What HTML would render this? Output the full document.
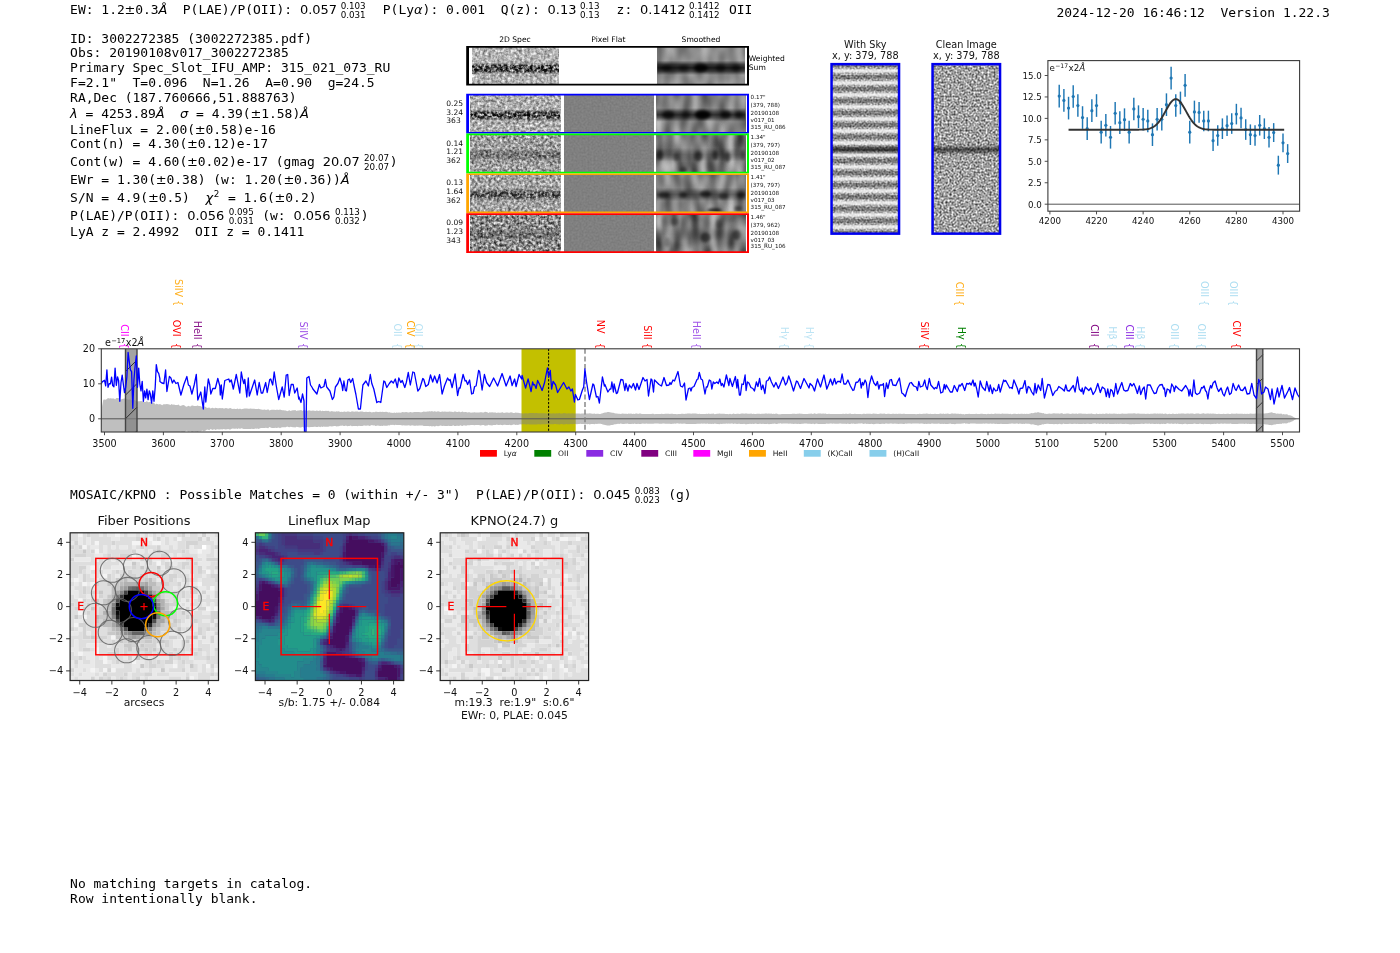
<!DOCTYPE html>
<html><head><meta charset="utf-8"><title>ELiXer report 3002272385</title>
<style>
html,body{margin:0;padding:0;background:#fff;}
body{width:1400px;height:953px;overflow:hidden;}
svg{display:block;will-change:transform;}
text{white-space:pre;}
.m{font-family:"DejaVu Sans Mono","Liberation Mono",monospace;}
.s{font-family:"DejaVu Sans","Liberation Sans",sans-serif;}
</style></head><body>
<svg width="1400" height="953" viewBox="0 0 1400 953">
<defs>
<filter id="blb" x="-20%" y="-20%" width="140%" height="140%"><feGaussianBlur stdDeviation="1.8"/></filter>
<filter id="nW" x="0" y="0" width="100%" height="100%" color-interpolation-filters="sRGB"><feTurbulence type="fractalNoise" baseFrequency="0.36 0.36" numOctaves="2" seed="3"/><feColorMatrix type="matrix" values="0.850 0 0 0 0.275  0.850 0 0 0 0.275  0.850 0 0 0 0.275  0 0 0 0 1"/></filter>
<filter id="nWb" x="0" y="0" width="100%" height="100%" color-interpolation-filters="sRGB"><feTurbulence type="fractalNoise" baseFrequency="0.36 0.36" numOctaves="2" seed="5"/><feColorMatrix type="matrix" values="2.000 0 0 0 -0.700  2.000 0 0 0 -0.700  2.000 0 0 0 -0.700  0 0 0 0 1"/></filter>
<linearGradient id="mWg" x1="0" y1="0" x2="0" y2="1"><stop offset="0.000" stop-color="#fff" stop-opacity="0.000"/><stop offset="0.420" stop-color="#fff" stop-opacity="0.000"/><stop offset="0.500" stop-color="#fff" stop-opacity="0.850"/><stop offset="0.585" stop-color="#fff" stop-opacity="1.000"/><stop offset="0.670" stop-color="#fff" stop-opacity="0.850"/><stop offset="0.750" stop-color="#fff" stop-opacity="0.000"/><stop offset="1.000" stop-color="#fff" stop-opacity="0.000"/></linearGradient>
<filter id="sW" x="0" y="0" width="100%" height="100%" color-interpolation-filters="sRGB"><feTurbulence type="fractalNoise" baseFrequency="0.11 0.05" numOctaves="1" seed="11"/><feColorMatrix type="matrix" values="0.500 0 0 0 0.300  0.500 0 0 0 0.300  0.500 0 0 0 0.300  0 0 0 0 1"/></filter>
<linearGradient id="bW" x1="0" y1="0" x2="0" y2="1"><stop offset="0.000" stop-color="#000" stop-opacity="0.000"/><stop offset="0.400" stop-color="#000" stop-opacity="0.000"/><stop offset="0.500" stop-color="#000" stop-opacity="0.500"/><stop offset="0.585" stop-color="#000" stop-opacity="0.620"/><stop offset="0.670" stop-color="#000" stop-opacity="0.500"/><stop offset="0.770" stop-color="#000" stop-opacity="0.000"/><stop offset="1.000" stop-color="#000" stop-opacity="0.000"/></linearGradient>
<linearGradient id="bWs" x1="0" y1="0" x2="0" y2="1"><stop offset="0.000" stop-color="#000" stop-opacity="0.000"/><stop offset="0.360" stop-color="#000" stop-opacity="0.000"/><stop offset="0.470" stop-color="#000" stop-opacity="0.600"/><stop offset="0.567" stop-color="#000" stop-opacity="0.820"/><stop offset="0.660" stop-color="#000" stop-opacity="0.600"/><stop offset="0.770" stop-color="#000" stop-opacity="0.000"/><stop offset="1.000" stop-color="#000" stop-opacity="0.000"/></linearGradient>
<mask id="mW" maskUnits="userSpaceOnUse" x="472.00" y="47.70" width="87.00" height="35.60"><rect x="472.00" y="47.70" width="87.00" height="35.60" fill="url(#mWg)"/></mask>
<clipPath id="bc1"><rect x="657.30" y="47.70" width="87.60" height="35.60"/></clipPath>
<filter id="n0" x="0" y="0" width="100%" height="100%" color-interpolation-filters="sRGB"><feTurbulence type="fractalNoise" baseFrequency="0.36 0.36" numOctaves="2" seed="20"/><feColorMatrix type="matrix" values="0.950 0 0 0 0.205  0.950 0 0 0 0.205  0.950 0 0 0 0.205  0 0 0 0 1"/></filter>
<filter id="nb0" x="0" y="0" width="100%" height="100%" color-interpolation-filters="sRGB"><feTurbulence type="fractalNoise" baseFrequency="0.36 0.36" numOctaves="2" seed="30"/><feColorMatrix type="matrix" values="2.200 0 0 0 -0.820  2.200 0 0 0 -0.820  2.200 0 0 0 -0.820  0 0 0 0 1"/></filter>
<linearGradient id="m0g" x1="0" y1="0" x2="0" y2="1"><stop offset="0.000" stop-color="#fff" stop-opacity="0.000"/><stop offset="0.380" stop-color="#fff" stop-opacity="0.000"/><stop offset="0.460" stop-color="#fff" stop-opacity="0.800"/><stop offset="0.540" stop-color="#fff" stop-opacity="1.000"/><stop offset="0.620" stop-color="#fff" stop-opacity="0.800"/><stop offset="0.700" stop-color="#fff" stop-opacity="0.000"/><stop offset="1.000" stop-color="#fff" stop-opacity="0.000"/></linearGradient>
<filter id="s0" x="0" y="0" width="100%" height="100%" color-interpolation-filters="sRGB"><feTurbulence type="fractalNoise" baseFrequency="0.11 0.045" numOctaves="1" seed="40"/><feColorMatrix type="matrix" values="0.700 0 0 0 0.170  0.700 0 0 0 0.170  0.700 0 0 0 0.170  0 0 0 0 1"/></filter>
<filter id="f0" x="0" y="0" width="100%" height="100%" color-interpolation-filters="sRGB"><feTurbulence type="fractalNoise" baseFrequency="0.5 0.5" numOctaves="1" seed="60"/><feColorMatrix type="matrix" values="0.100 0 0 0 0.450  0.100 0 0 0 0.450  0.100 0 0 0 0.450  0 0 0 0 1"/></filter>
<linearGradient id="b0" x1="0" y1="0" x2="0" y2="1"><stop offset="0.000" stop-color="#000" stop-opacity="0.000"/><stop offset="0.360" stop-color="#000" stop-opacity="0.000"/><stop offset="0.460" stop-color="#000" stop-opacity="0.495"/><stop offset="0.540" stop-color="#000" stop-opacity="0.660"/><stop offset="0.620" stop-color="#000" stop-opacity="0.495"/><stop offset="0.720" stop-color="#000" stop-opacity="0.000"/><stop offset="1.000" stop-color="#000" stop-opacity="0.000"/></linearGradient>
<linearGradient id="c0" x1="0" y1="0" x2="0" y2="1"><stop offset="0.000" stop-color="#000" stop-opacity="0.000"/><stop offset="0.340" stop-color="#000" stop-opacity="0.000"/><stop offset="0.450" stop-color="#000" stop-opacity="0.490"/><stop offset="0.530" stop-color="#000" stop-opacity="0.700"/><stop offset="0.610" stop-color="#000" stop-opacity="0.490"/><stop offset="0.720" stop-color="#000" stop-opacity="0.000"/><stop offset="1.000" stop-color="#000" stop-opacity="0.000"/></linearGradient>
<mask id="m0" maskUnits="userSpaceOnUse" x="470.30" y="95.40" width="89.90" height="36.60"><rect x="470.30" y="95.40" width="89.90" height="36.60" fill="url(#m0g)"/></mask>
<clipPath id="bc2"><rect x="656.60" y="95.40" width="88.80" height="36.60"/></clipPath>
<filter id="n1" x="0" y="0" width="100%" height="100%" color-interpolation-filters="sRGB"><feTurbulence type="fractalNoise" baseFrequency="0.36 0.36" numOctaves="2" seed="21"/><feColorMatrix type="matrix" values="1.100 0 0 0 0.070  1.100 0 0 0 0.070  1.100 0 0 0 0.070  0 0 0 0 1"/></filter>
<filter id="nb1" x="0" y="0" width="100%" height="100%" color-interpolation-filters="sRGB"><feTurbulence type="fractalNoise" baseFrequency="0.36 0.36" numOctaves="2" seed="31"/><feColorMatrix type="matrix" values="2.200 0 0 0 -0.820  2.200 0 0 0 -0.820  2.200 0 0 0 -0.820  0 0 0 0 1"/></filter>
<linearGradient id="m1g" x1="0" y1="0" x2="0" y2="1"><stop offset="0.000" stop-color="#fff" stop-opacity="0.000"/><stop offset="0.380" stop-color="#fff" stop-opacity="0.000"/><stop offset="0.460" stop-color="#fff" stop-opacity="0.400"/><stop offset="0.540" stop-color="#fff" stop-opacity="0.500"/><stop offset="0.620" stop-color="#fff" stop-opacity="0.400"/><stop offset="0.700" stop-color="#fff" stop-opacity="0.000"/><stop offset="1.000" stop-color="#fff" stop-opacity="0.000"/></linearGradient>
<filter id="s1" x="0" y="0" width="100%" height="100%" color-interpolation-filters="sRGB"><feTurbulence type="fractalNoise" baseFrequency="0.11 0.045" numOctaves="1" seed="41"/><feColorMatrix type="matrix" values="1.000 0 0 0 -0.030  1.000 0 0 0 -0.030  1.000 0 0 0 -0.030  0 0 0 0 1"/></filter>
<filter id="f1" x="0" y="0" width="100%" height="100%" color-interpolation-filters="sRGB"><feTurbulence type="fractalNoise" baseFrequency="0.5 0.5" numOctaves="1" seed="61"/><feColorMatrix type="matrix" values="0.100 0 0 0 0.450  0.100 0 0 0 0.450  0.100 0 0 0 0.450  0 0 0 0 1"/></filter>
<linearGradient id="b1" x1="0" y1="0" x2="0" y2="1"><stop offset="0.000" stop-color="#000" stop-opacity="0.000"/><stop offset="0.360" stop-color="#000" stop-opacity="0.000"/><stop offset="0.460" stop-color="#000" stop-opacity="0.270"/><stop offset="0.540" stop-color="#000" stop-opacity="0.360"/><stop offset="0.620" stop-color="#000" stop-opacity="0.270"/><stop offset="0.720" stop-color="#000" stop-opacity="0.000"/><stop offset="1.000" stop-color="#000" stop-opacity="0.000"/></linearGradient>
<linearGradient id="c1" x1="0" y1="0" x2="0" y2="1"><stop offset="0.000" stop-color="#000" stop-opacity="0.000"/><stop offset="0.340" stop-color="#000" stop-opacity="0.000"/><stop offset="0.450" stop-color="#000" stop-opacity="0.175"/><stop offset="0.530" stop-color="#000" stop-opacity="0.250"/><stop offset="0.610" stop-color="#000" stop-opacity="0.175"/><stop offset="0.720" stop-color="#000" stop-opacity="0.000"/><stop offset="1.000" stop-color="#000" stop-opacity="0.000"/></linearGradient>
<mask id="m1" maskUnits="userSpaceOnUse" x="470.30" y="135.20" width="89.90" height="36.60"><rect x="470.30" y="135.20" width="89.90" height="36.60" fill="url(#m1g)"/></mask>
<clipPath id="bc3"><rect x="656.60" y="135.20" width="88.80" height="36.60"/></clipPath>
<filter id="n2" x="0" y="0" width="100%" height="100%" color-interpolation-filters="sRGB"><feTurbulence type="fractalNoise" baseFrequency="0.36 0.36" numOctaves="2" seed="22"/><feColorMatrix type="matrix" values="1.000 0 0 0 0.140  1.000 0 0 0 0.140  1.000 0 0 0 0.140  0 0 0 0 1"/></filter>
<filter id="nb2" x="0" y="0" width="100%" height="100%" color-interpolation-filters="sRGB"><feTurbulence type="fractalNoise" baseFrequency="0.36 0.36" numOctaves="2" seed="32"/><feColorMatrix type="matrix" values="2.200 0 0 0 -0.820  2.200 0 0 0 -0.820  2.200 0 0 0 -0.820  0 0 0 0 1"/></filter>
<linearGradient id="m2g" x1="0" y1="0" x2="0" y2="1"><stop offset="0.000" stop-color="#fff" stop-opacity="0.000"/><stop offset="0.380" stop-color="#fff" stop-opacity="0.000"/><stop offset="0.460" stop-color="#fff" stop-opacity="0.640"/><stop offset="0.540" stop-color="#fff" stop-opacity="0.800"/><stop offset="0.620" stop-color="#fff" stop-opacity="0.640"/><stop offset="0.700" stop-color="#fff" stop-opacity="0.000"/><stop offset="1.000" stop-color="#fff" stop-opacity="0.000"/></linearGradient>
<filter id="s2" x="0" y="0" width="100%" height="100%" color-interpolation-filters="sRGB"><feTurbulence type="fractalNoise" baseFrequency="0.11 0.045" numOctaves="1" seed="42"/><feColorMatrix type="matrix" values="0.800 0 0 0 0.100  0.800 0 0 0 0.100  0.800 0 0 0 0.100  0 0 0 0 1"/></filter>
<filter id="f2" x="0" y="0" width="100%" height="100%" color-interpolation-filters="sRGB"><feTurbulence type="fractalNoise" baseFrequency="0.5 0.5" numOctaves="1" seed="62"/><feColorMatrix type="matrix" values="0.100 0 0 0 0.450  0.100 0 0 0 0.450  0.100 0 0 0 0.450  0 0 0 0 1"/></filter>
<linearGradient id="b2" x1="0" y1="0" x2="0" y2="1"><stop offset="0.000" stop-color="#000" stop-opacity="0.000"/><stop offset="0.360" stop-color="#000" stop-opacity="0.000"/><stop offset="0.460" stop-color="#000" stop-opacity="0.342"/><stop offset="0.540" stop-color="#000" stop-opacity="0.456"/><stop offset="0.620" stop-color="#000" stop-opacity="0.342"/><stop offset="0.720" stop-color="#000" stop-opacity="0.000"/><stop offset="1.000" stop-color="#000" stop-opacity="0.000"/></linearGradient>
<linearGradient id="c2" x1="0" y1="0" x2="0" y2="1"><stop offset="0.000" stop-color="#000" stop-opacity="0.000"/><stop offset="0.340" stop-color="#000" stop-opacity="0.000"/><stop offset="0.450" stop-color="#000" stop-opacity="0.280"/><stop offset="0.530" stop-color="#000" stop-opacity="0.400"/><stop offset="0.610" stop-color="#000" stop-opacity="0.280"/><stop offset="0.720" stop-color="#000" stop-opacity="0.000"/><stop offset="1.000" stop-color="#000" stop-opacity="0.000"/></linearGradient>
<mask id="m2" maskUnits="userSpaceOnUse" x="470.30" y="175.00" width="89.90" height="36.60"><rect x="470.30" y="175.00" width="89.90" height="36.60" fill="url(#m2g)"/></mask>
<clipPath id="bc4"><rect x="656.60" y="175.00" width="88.80" height="36.60"/></clipPath>
<filter id="n3" x="0" y="0" width="100%" height="100%" color-interpolation-filters="sRGB"><feTurbulence type="fractalNoise" baseFrequency="0.36 0.36" numOctaves="2" seed="23"/><feColorMatrix type="matrix" values="1.250 0 0 0 -0.075  1.250 0 0 0 -0.075  1.250 0 0 0 -0.075  0 0 0 0 1"/></filter>
<filter id="nb3" x="0" y="0" width="100%" height="100%" color-interpolation-filters="sRGB"><feTurbulence type="fractalNoise" baseFrequency="0.36 0.36" numOctaves="2" seed="33"/><feColorMatrix type="matrix" values="2.200 0 0 0 -0.820  2.200 0 0 0 -0.820  2.200 0 0 0 -0.820  0 0 0 0 1"/></filter>
<linearGradient id="m3g" x1="0" y1="0" x2="0" y2="1"><stop offset="0.000" stop-color="#fff" stop-opacity="0.000"/><stop offset="0.380" stop-color="#fff" stop-opacity="0.000"/><stop offset="0.460" stop-color="#fff" stop-opacity="0.320"/><stop offset="0.540" stop-color="#fff" stop-opacity="0.400"/><stop offset="0.620" stop-color="#fff" stop-opacity="0.320"/><stop offset="0.700" stop-color="#fff" stop-opacity="0.000"/><stop offset="1.000" stop-color="#fff" stop-opacity="0.000"/></linearGradient>
<filter id="s3" x="0" y="0" width="100%" height="100%" color-interpolation-filters="sRGB"><feTurbulence type="fractalNoise" baseFrequency="0.11 0.045" numOctaves="1" seed="43"/><feColorMatrix type="matrix" values="1.000 0 0 0 -0.040  1.000 0 0 0 -0.040  1.000 0 0 0 -0.040  0 0 0 0 1"/></filter>
<filter id="f3" x="0" y="0" width="100%" height="100%" color-interpolation-filters="sRGB"><feTurbulence type="fractalNoise" baseFrequency="0.5 0.5" numOctaves="1" seed="63"/><feColorMatrix type="matrix" values="0.100 0 0 0 0.450  0.100 0 0 0 0.450  0.100 0 0 0 0.450  0 0 0 0 1"/></filter>
<linearGradient id="b3" x1="0" y1="0" x2="0" y2="1"><stop offset="0.000" stop-color="#000" stop-opacity="0.000"/><stop offset="0.360" stop-color="#000" stop-opacity="0.000"/><stop offset="0.460" stop-color="#000" stop-opacity="0.198"/><stop offset="0.540" stop-color="#000" stop-opacity="0.264"/><stop offset="0.620" stop-color="#000" stop-opacity="0.198"/><stop offset="0.720" stop-color="#000" stop-opacity="0.000"/><stop offset="1.000" stop-color="#000" stop-opacity="0.000"/></linearGradient>
<linearGradient id="c3" x1="0" y1="0" x2="0" y2="1"><stop offset="0.000" stop-color="#000" stop-opacity="0.000"/><stop offset="0.340" stop-color="#000" stop-opacity="0.000"/><stop offset="0.450" stop-color="#000" stop-opacity="0.084"/><stop offset="0.530" stop-color="#000" stop-opacity="0.120"/><stop offset="0.610" stop-color="#000" stop-opacity="0.084"/><stop offset="0.720" stop-color="#000" stop-opacity="0.000"/><stop offset="1.000" stop-color="#000" stop-opacity="0.000"/></linearGradient>
<mask id="m3" maskUnits="userSpaceOnUse" x="470.30" y="214.80" width="89.90" height="36.60"><rect x="470.30" y="214.80" width="89.90" height="36.60" fill="url(#m3g)"/></mask>
<clipPath id="bc5"><rect x="656.60" y="214.80" width="88.80" height="36.60"/></clipPath>
<filter id="nS" x="0" y="0" width="100%" height="100%" color-interpolation-filters="sRGB"><feTurbulence type="fractalNoise" baseFrequency="0.5 0.5" numOctaves="2" seed="7"/><feColorMatrix type="matrix" values="1.000 0 0 0 0.140  1.000 0 0 0 0.140  1.000 0 0 0 0.140  0 0 0 0 1"/></filter>
<filter id="nC" x="0" y="0" width="100%" height="100%" color-interpolation-filters="sRGB"><feTurbulence type="fractalNoise" baseFrequency="0.5 0.5" numOctaves="2" seed="8"/><feColorMatrix type="matrix" values="1.250 0 0 0 0.005  1.250 0 0 0 0.005  1.250 0 0 0 0.005  0 0 0 0 1"/></filter>
<linearGradient id="sky" x1="0" y1="0" x2="0" y2="12.0" gradientUnits="userSpaceOnUse" spreadMethod="repeat"><stop offset="0" stop-color="#fff" stop-opacity="0.85"/><stop offset="0.12" stop-color="#fff" stop-opacity="0.55"/><stop offset="0.24" stop-color="#fff" stop-opacity="0"/><stop offset="0.36" stop-color="#000" stop-opacity="0.25"/><stop offset="0.64" stop-color="#000" stop-opacity="0.25"/><stop offset="0.76" stop-color="#fff" stop-opacity="0"/><stop offset="0.88" stop-color="#fff" stop-opacity="0.55"/><stop offset="1" stop-color="#fff" stop-opacity="0.85"/></linearGradient>
<linearGradient id="lnS" x1="0" y1="0" x2="0" y2="1"><stop offset="0.000" stop-color="#000" stop-opacity="0.000"/><stop offset="0.475" stop-color="#000" stop-opacity="0.000"/><stop offset="0.505" stop-color="#000" stop-opacity="0.600"/><stop offset="0.535" stop-color="#000" stop-opacity="0.000"/></linearGradient>
<linearGradient id="lnC" x1="0" y1="0" x2="0" y2="1"><stop offset="0.000" stop-color="#000" stop-opacity="0.000"/><stop offset="0.475" stop-color="#000" stop-opacity="0.000"/><stop offset="0.505" stop-color="#000" stop-opacity="0.620"/><stop offset="0.535" stop-color="#000" stop-opacity="0.000"/><stop offset="1.000" stop-color="#000" stop-opacity="0.000"/></linearGradient>
<clipPath id="scl"><rect x="101.30" y="348.80" width="1198.20" height="83.20"/></clipPath>
<filter id="lfb" x="-5%" y="-5%" width="110%" height="110%"><feGaussianBlur stdDeviation="0.7"/></filter>
<clipPath id="clipLF"><rect x="255.40" y="532.80" width="148.4" height="147.70"/></clipPath>
</defs>
<rect width="1400" height="953" fill="#fff"/>
<text xml:space="preserve" class="m" x="70.10" y="13.50" font-size="12.97" >EW: 1.2</text>
<text xml:space="preserve" class="s" x="124.56" y="13.50" font-size="12.97" >±</text>
<text xml:space="preserve" class="m" x="135.23" y="13.50" font-size="12.97" >0.3</text>
<text xml:space="preserve" class="s" x="158.55" y="13.50" font-size="12.97" font-style="italic" >Å</text>
<text xml:space="preserve" class="m" x="167.18" y="13.50" font-size="12.97" >  P(LAE)/P(OII): </text>
<text xml:space="preserve" class="s" x="299.92" y="13.50" font-size="12.97" >0.057</text>
<text xml:space="preserve" class="s" x="340.65" y="8.50" font-size="8.75" >0.103</text>
<text xml:space="preserve" class="s" x="340.65" y="17.50" font-size="8.75" >0.031</text>
<text xml:space="preserve" class="m" x="367.20" y="13.50" font-size="12.97" >  P(Ly</text>
<text xml:space="preserve" class="s" x="414.05" y="13.50" font-size="12.97" font-style="italic" >α</text>
<text xml:space="preserve" class="m" x="422.60" y="13.50" font-size="12.97" >): 0.001  Q(z): </text>
<text xml:space="preserve" class="s" x="547.54" y="13.50" font-size="12.97" >0.13</text>
<text xml:space="preserve" class="s" x="580.02" y="8.50" font-size="8.75" >0.13</text>
<text xml:space="preserve" class="s" x="580.02" y="17.50" font-size="8.75" >0.13</text>
<text xml:space="preserve" class="m" x="601.00" y="13.50" font-size="12.97" >  z: </text>
<text xml:space="preserve" class="s" x="640.04" y="13.50" font-size="12.97" >0.1412</text>
<text xml:space="preserve" class="s" x="689.03" y="8.50" font-size="8.75" >0.1412</text>
<text xml:space="preserve" class="s" x="689.03" y="17.50" font-size="8.75" >0.1412</text>
<text xml:space="preserve" class="m" x="721.14" y="13.50" font-size="12.97" > OII</text>
<text xml:space="preserve" class="m" x="1056.50" y="16.50" font-size="12.97" >2024-12-20 16:46:12  Version 1.22.3</text>
<text xml:space="preserve" class="m" x="70.10" y="43.00" font-size="12.97" >ID: 3002272385 (3002272385.pdf)</text>
<text xml:space="preserve" class="m" x="70.10" y="57.40" font-size="12.97" >Obs: 20190108v017_3002272385</text>
<text xml:space="preserve" class="m" x="70.10" y="72.00" font-size="12.97" >Primary Spec_Slot_IFU_AMP: 315_021_073_RU</text>
<text xml:space="preserve" class="m" x="70.10" y="86.80" font-size="12.97" >F=2.1"  T=0.096  N=1.26  A=0.90  g=24.5</text>
<text xml:space="preserve" class="m" x="70.10" y="101.60" font-size="12.97" >RA,Dec (187.760666,51.888763)</text>
<text xml:space="preserve" class="s" x="70.10" y="118.40" font-size="12.97" font-style="italic" >λ</text>
<text xml:space="preserve" class="m" x="77.78" y="118.40" font-size="12.97" > = 4253.89</text>
<text xml:space="preserve" class="s" x="155.76" y="118.40" font-size="12.97" font-style="italic" >Å</text>
<text xml:space="preserve" class="m" x="164.38" y="118.40" font-size="12.97" >  </text>
<text xml:space="preserve" class="s" x="180.00" y="118.40" font-size="12.97" font-style="italic" >σ</text>
<text xml:space="preserve" class="m" x="188.22" y="118.40" font-size="12.97" > = 4.39(</text>
<text xml:space="preserve" class="s" x="250.49" y="118.40" font-size="12.97" >±</text>
<text xml:space="preserve" class="m" x="261.16" y="118.40" font-size="12.97" >1.58)</text>
<text xml:space="preserve" class="s" x="300.10" y="118.40" font-size="12.97" font-style="italic" >Å</text>
<text xml:space="preserve" class="m" x="70.10" y="133.60" font-size="12.97" >LineFlux = 2.00(</text>
<text xml:space="preserve" class="s" x="194.84" y="133.60" font-size="12.97" >±</text>
<text xml:space="preserve" class="m" x="205.50" y="133.60" font-size="12.97" >0.58)e-16</text>
<text xml:space="preserve" class="m" x="70.10" y="148.30" font-size="12.97" >Cont(n) = 4.30(</text>
<text xml:space="preserve" class="s" x="187.03" y="148.30" font-size="12.97" >±</text>
<text xml:space="preserve" class="m" x="197.70" y="148.30" font-size="12.97" >0.12)e-17</text>
<text xml:space="preserve" class="m" x="70.10" y="166.40" font-size="12.97" >Cont(w) = 4.60(</text>
<text xml:space="preserve" class="s" x="187.03" y="166.40" font-size="12.97" >±</text>
<text xml:space="preserve" class="m" x="197.70" y="166.40" font-size="12.97" >0.02)e-17 (gmag </text>
<text xml:space="preserve" class="s" x="322.63" y="166.40" font-size="12.97" >20.07</text>
<text xml:space="preserve" class="s" x="364.06" y="161.40" font-size="8.75" >20.07</text>
<text xml:space="preserve" class="s" x="364.06" y="170.40" font-size="8.75" >20.07</text>
<text xml:space="preserve" class="m" x="389.81" y="166.40" font-size="12.97" >)</text>
<text xml:space="preserve" class="m" x="70.10" y="184.40" font-size="12.97" >EWr = 1.30(</text>
<text xml:space="preserve" class="s" x="155.79" y="184.40" font-size="12.97" >±</text>
<text xml:space="preserve" class="m" x="166.46" y="184.40" font-size="12.97" >0.38) (w: 1.20(</text>
<text xml:space="preserve" class="s" x="283.39" y="184.40" font-size="12.97" >±</text>
<text xml:space="preserve" class="m" x="294.06" y="184.40" font-size="12.97" >0.36))</text>
<text xml:space="preserve" class="s" x="340.81" y="184.40" font-size="12.97" font-style="italic" >Å</text>
<text xml:space="preserve" class="m" x="70.10" y="202.40" font-size="12.97" >S/N = 4.9(</text>
<text xml:space="preserve" class="s" x="147.99" y="202.40" font-size="12.97" >±</text>
<text xml:space="preserve" class="m" x="158.65" y="202.40" font-size="12.97" >0.5)  </text>
<text xml:space="preserve" class="s" x="205.50" y="202.40" font-size="12.97" font-style="italic" >χ</text>
<text xml:space="preserve" class="s" x="213.78" y="197.20" font-size="8.75" >2</text>
<text xml:space="preserve" class="m" x="220.15" y="202.40" font-size="12.97" > = 1.6(</text>
<text xml:space="preserve" class="s" x="274.61" y="202.40" font-size="12.97" >±</text>
<text xml:space="preserve" class="m" x="285.27" y="202.40" font-size="12.97" >0.2)</text>
<text xml:space="preserve" class="m" x="70.10" y="219.60" font-size="12.97" >P(LAE)/P(OII): </text>
<text xml:space="preserve" class="s" x="187.23" y="219.60" font-size="12.97" >0.056</text>
<text xml:space="preserve" class="s" x="228.66" y="214.60" font-size="8.75" >0.095</text>
<text xml:space="preserve" class="s" x="228.66" y="223.60" font-size="8.75" >0.031</text>
<text xml:space="preserve" class="m" x="254.41" y="219.60" font-size="12.97" > (w: </text>
<text xml:space="preserve" class="s" x="293.45" y="219.60" font-size="12.97" >0.056</text>
<text xml:space="preserve" class="s" x="334.88" y="214.60" font-size="8.75" >0.113</text>
<text xml:space="preserve" class="s" x="334.88" y="223.60" font-size="8.75" >0.032</text>
<text xml:space="preserve" class="m" x="360.63" y="219.60" font-size="12.97" >)</text>
<text xml:space="preserve" class="m" x="70.10" y="235.60" font-size="12.97" >LyA z = 2.4992  OII z = 0.1411</text>
<text xml:space="preserve" class="m" x="70.10" y="498.60" font-size="12.97" >MOSAIC/KPNO : Possible Matches = 0 (within +/- 3")  P(LAE)/P(OII): </text>
<text xml:space="preserve" class="s" x="593.27" y="498.60" font-size="12.97" >0.045</text>
<text xml:space="preserve" class="s" x="634.70" y="493.60" font-size="8.75" >0.083</text>
<text xml:space="preserve" class="s" x="634.70" y="502.60" font-size="8.75" >0.023</text>
<text xml:space="preserve" class="m" x="660.45" y="498.60" font-size="12.97" > (g)</text>
<text xml:space="preserve" class="m" x="70.10" y="888.00" font-size="12.97" >No matching targets in catalog.</text>
<text xml:space="preserve" class="m" x="70.10" y="902.80" font-size="12.97" >Row intentionally blank.</text>
<text xml:space="preserve" class="s" x="515.00" y="41.90" font-size="7.60" text-anchor="middle" >2D Spec</text>
<text xml:space="preserve" class="s" x="608.40" y="41.90" font-size="7.60" text-anchor="middle" >Pixel Flat</text>
<text xml:space="preserve" class="s" x="701.00" y="41.90" font-size="7.60" text-anchor="middle" >Smoothed</text>
<text xml:space="preserve" class="s" x="748.80" y="61.40" font-size="7.60" >Weighted</text>
<text xml:space="preserve" class="s" x="748.80" y="70.10" font-size="7.60" >Sum</text>
<rect x="472.00" y="47.70" width="87.00" height="35.60" fill="#999" filter="url(#nW)"/>
<g mask="url(#mW)"><rect x="472.00" y="47.70" width="87.00" height="35.60" fill="#444" filter="url(#nWb)"/></g>
<rect x="657.30" y="47.70" width="87.60" height="35.60" fill="#888" filter="url(#sW)"/>
<rect x="657.30" y="47.70" width="87.60" height="35.60" fill="url(#bWs)" />
<g clip-path="url(#bc1)"><g filter="url(#blb)" fill="#000"><ellipse cx="666.1" cy="67.9" rx="5.0" ry="3.0" fill-opacity="0.60"/><ellipse cx="683.6" cy="67.9" rx="5.0" ry="3.0" fill-opacity="0.50"/><ellipse cx="701.1" cy="67.9" rx="7.0" ry="3.6" fill-opacity="0.90"/><ellipse cx="720.4" cy="67.9" rx="5.0" ry="3.0" fill-opacity="0.55"/><ellipse cx="736.1" cy="67.9" rx="4.0" ry="3.0" fill-opacity="0.50"/></g></g>
<path fill="#000" fill-rule="evenodd" d="M466.20 46.00H749.00V85.60H466.20ZM469.00 47.85H747.00V83.75H469.00Z"/>
<rect x="470.30" y="95.40" width="89.90" height="36.60" fill="#999" filter="url(#n0)"/>
<g mask="url(#m0)"><rect x="470.30" y="95.40" width="89.90" height="36.60" fill="#444" filter="url(#nb0)"/></g>
<rect x="564.00" y="95.40" width="89.60" height="36.60" fill="#808080" filter="url(#f0)"/>
<rect x="656.60" y="95.40" width="88.80" height="36.60" fill="#888" filter="url(#s0)"/>
<rect x="656.60" y="95.40" width="88.80" height="36.60" fill="url(#c0)" />
<g clip-path="url(#bc2)"><g filter="url(#blb)" fill="#000"><ellipse cx="668.1" cy="114.8" rx="6.0" ry="3.8" fill-opacity="0.70"/><ellipse cx="685.9" cy="114.8" rx="4.0" ry="3.0" fill-opacity="0.45"/><ellipse cx="702.8" cy="114.8" rx="8.0" ry="4.2" fill-opacity="0.95"/><ellipse cx="725.9" cy="114.8" rx="5.0" ry="3.5" fill-opacity="0.70"/><ellipse cx="739.2" cy="114.8" rx="4.0" ry="3.2" fill-opacity="0.60"/></g></g>
<path fill="#0000ff" fill-rule="evenodd" d="M466.20 93.80H749.00V133.60H466.20ZM469.00 95.50H747.00V131.90H469.00Z"/>
<text xml:space="preserve" class="s" x="446.30" y="105.80" font-size="7.57" fill="#111" >0.25</text>
<text xml:space="preserve" class="s" x="446.30" y="114.55" font-size="7.57" fill="#111" >3.24</text>
<text xml:space="preserve" class="s" x="446.30" y="123.30" font-size="7.57" fill="#111" >363</text>
<text xml:space="preserve" class="s" x="750.60" y="99.40" font-size="5.62" fill="#111" >0.17"</text>
<text xml:space="preserve" class="s" x="750.60" y="107.20" font-size="5.62" fill="#111" >(379, 788)</text>
<text xml:space="preserve" class="s" x="750.60" y="115.40" font-size="5.62" fill="#111" >20190108</text>
<text xml:space="preserve" class="s" x="750.60" y="122.10" font-size="5.62" fill="#111" >v017_01</text>
<text xml:space="preserve" class="s" x="750.60" y="129.00" font-size="5.62" fill="#111" >315_RU_086</text>
<rect x="470.30" y="135.20" width="89.90" height="36.60" fill="#999" filter="url(#n1)"/>
<g mask="url(#m1)"><rect x="470.30" y="135.20" width="89.90" height="36.60" fill="#444" filter="url(#nb1)"/></g>
<rect x="564.00" y="135.20" width="89.60" height="36.60" fill="#808080" filter="url(#f1)"/>
<rect x="656.60" y="135.20" width="88.80" height="36.60" fill="#888" filter="url(#s1)"/>
<rect x="656.60" y="135.20" width="88.80" height="36.60" fill="url(#c1)" />
<g clip-path="url(#bc3)"><g filter="url(#blb)" fill="#000"><ellipse cx="660.2" cy="155.3" rx="3.0" ry="5.0" fill-opacity="0.50"/><ellipse cx="676.1" cy="157.2" rx="3.0" ry="4.0" fill-opacity="0.35"/><ellipse cx="698.3" cy="156.4" rx="4.0" ry="5.0" fill-opacity="0.50"/><ellipse cx="715.2" cy="155.3" rx="3.0" ry="5.0" fill-opacity="0.55"/><ellipse cx="727.6" cy="157.2" rx="3.0" ry="5.0" fill-opacity="0.45"/><ellipse cx="683.2" cy="170.0" rx="4.0" ry="3.0" fill-opacity="0.40"/><ellipse cx="742.7" cy="155.3" rx="2.0" ry="5.0" fill-opacity="0.40"/></g></g>
<path fill="#00ff00" fill-rule="evenodd" d="M466.20 133.60H749.00V173.40H466.20ZM469.00 135.30H747.00V171.70H469.00Z"/>
<text xml:space="preserve" class="s" x="446.30" y="145.60" font-size="7.57" fill="#111" >0.14</text>
<text xml:space="preserve" class="s" x="446.30" y="154.35" font-size="7.57" fill="#111" >1.21</text>
<text xml:space="preserve" class="s" x="446.30" y="163.10" font-size="7.57" fill="#111" >362</text>
<text xml:space="preserve" class="s" x="750.60" y="139.20" font-size="5.62" fill="#111" >1.34"</text>
<text xml:space="preserve" class="s" x="750.60" y="147.00" font-size="5.62" fill="#111" >(379, 797)</text>
<text xml:space="preserve" class="s" x="750.60" y="155.20" font-size="5.62" fill="#111" >20190108</text>
<text xml:space="preserve" class="s" x="750.60" y="161.90" font-size="5.62" fill="#111" >v017_02</text>
<text xml:space="preserve" class="s" x="750.60" y="168.80" font-size="5.62" fill="#111" >315_RU_087</text>
<rect x="470.30" y="175.00" width="89.90" height="36.60" fill="#999" filter="url(#n2)"/>
<g mask="url(#m2)"><rect x="470.30" y="175.00" width="89.90" height="36.60" fill="#444" filter="url(#nb2)"/></g>
<rect x="564.00" y="175.00" width="89.60" height="36.60" fill="#808080" filter="url(#f2)"/>
<rect x="656.60" y="175.00" width="88.80" height="36.60" fill="#888" filter="url(#s2)"/>
<rect x="656.60" y="175.00" width="88.80" height="36.60" fill="url(#c2)" />
<g clip-path="url(#bc4)"><g filter="url(#blb)" fill="#000"><ellipse cx="663.7" cy="195.1" rx="6.0" ry="3.0" fill-opacity="0.60"/><ellipse cx="683.2" cy="195.1" rx="4.0" ry="3.0" fill-opacity="0.60"/><ellipse cx="705.4" cy="194.0" rx="6.0" ry="3.0" fill-opacity="0.65"/><ellipse cx="723.2" cy="196.2" rx="5.0" ry="3.0" fill-opacity="0.50"/><ellipse cx="741.0" cy="195.1" rx="4.0" ry="3.0" fill-opacity="0.55"/><ellipse cx="714.3" cy="210.5" rx="7.0" ry="2.5" fill-opacity="0.70"/><ellipse cx="738.3" cy="208.7" rx="4.0" ry="3.0" fill-opacity="0.50"/></g></g>
<path fill="#ffa500" fill-rule="evenodd" d="M466.20 173.40H749.00V213.20H466.20ZM469.00 175.10H747.00V211.50H469.00Z"/>
<text xml:space="preserve" class="s" x="446.30" y="185.40" font-size="7.57" fill="#111" >0.13</text>
<text xml:space="preserve" class="s" x="446.30" y="194.15" font-size="7.57" fill="#111" >1.64</text>
<text xml:space="preserve" class="s" x="446.30" y="202.90" font-size="7.57" fill="#111" >362</text>
<text xml:space="preserve" class="s" x="750.60" y="179.00" font-size="5.62" fill="#111" >1.41"</text>
<text xml:space="preserve" class="s" x="750.60" y="186.80" font-size="5.62" fill="#111" >(379, 797)</text>
<text xml:space="preserve" class="s" x="750.60" y="195.00" font-size="5.62" fill="#111" >20190108</text>
<text xml:space="preserve" class="s" x="750.60" y="201.70" font-size="5.62" fill="#111" >v017_03</text>
<text xml:space="preserve" class="s" x="750.60" y="208.60" font-size="5.62" fill="#111" >315_RU_087</text>
<rect x="470.30" y="214.80" width="89.90" height="36.60" fill="#999" filter="url(#n3)"/>
<g mask="url(#m3)"><rect x="470.30" y="214.80" width="89.90" height="36.60" fill="#444" filter="url(#nb3)"/></g>
<rect x="564.00" y="214.80" width="89.60" height="36.60" fill="#808080" filter="url(#f3)"/>
<rect x="656.60" y="214.80" width="88.80" height="36.60" fill="#888" filter="url(#s3)"/>
<rect x="656.60" y="214.80" width="88.80" height="36.60" fill="url(#c3)" />
<g clip-path="url(#bc5)"><g filter="url(#blb)" fill="#000"><ellipse cx="705.4" cy="237.5" rx="5.0" ry="5.0" fill-opacity="0.55"/><ellipse cx="736.5" cy="234.9" rx="4.0" ry="5.0" fill-opacity="0.45"/><ellipse cx="674.4" cy="221.4" rx="4.0" ry="4.0" fill-opacity="0.35"/><ellipse cx="667.3" cy="242.2" rx="3.0" ry="5.0" fill-opacity="0.30"/><ellipse cx="718.8" cy="223.9" rx="3.0" ry="4.0" fill-opacity="0.30"/></g></g>
<path fill="#ff0000" fill-rule="evenodd" d="M466.20 213.20H749.00V253.00H466.20ZM469.00 214.90H747.00V251.30H469.00Z"/>
<text xml:space="preserve" class="s" x="446.30" y="225.20" font-size="7.57" fill="#111" >0.09</text>
<text xml:space="preserve" class="s" x="446.30" y="233.95" font-size="7.57" fill="#111" >1.23</text>
<text xml:space="preserve" class="s" x="446.30" y="242.70" font-size="7.57" fill="#111" >343</text>
<text xml:space="preserve" class="s" x="750.60" y="218.80" font-size="5.62" fill="#111" >1.46"</text>
<text xml:space="preserve" class="s" x="750.60" y="226.60" font-size="5.62" fill="#111" >(379, 962)</text>
<text xml:space="preserve" class="s" x="750.60" y="234.80" font-size="5.62" fill="#111" >20190108</text>
<text xml:space="preserve" class="s" x="750.60" y="241.50" font-size="5.62" fill="#111" >v017_03</text>
<text xml:space="preserve" class="s" x="750.60" y="248.40" font-size="5.62" fill="#111" >315_RU_106</text>
<text xml:space="preserve" class="s" x="865.30" y="47.60" font-size="9.73" fill="#111" text-anchor="middle" >With Sky</text>
<text xml:space="preserve" class="s" x="865.30" y="58.60" font-size="9.73" fill="#111" text-anchor="middle" >x, y: 379, 788</text>
<text xml:space="preserve" class="s" x="966.30" y="47.60" font-size="9.73" fill="#111" text-anchor="middle" >Clean Image</text>
<text xml:space="preserve" class="s" x="966.30" y="58.60" font-size="9.73" fill="#111" text-anchor="middle" >x, y: 379, 788</text>
<rect x="831.50" y="64.00" width="67.60" height="169.80" fill="#999" filter="url(#nS)"/>
<g transform="translate(0,58.9)"><rect x="831.5" y="5.1" width="67.6" height="169.8" fill="url(#sky)"/></g>
<rect x="831.50" y="64.00" width="67.60" height="169.80" fill="url(#lnS)" />
<rect x="831.55" y="64.15" width="67.50" height="169.50" fill="none" stroke="#0000ee" stroke-width="2.5" />
<rect x="932.50" y="64.00" width="67.60" height="169.80" fill="#999" filter="url(#nC)"/>
<rect x="932.50" y="64.00" width="67.60" height="169.80" fill="url(#lnC)" />
<rect x="932.55" y="64.15" width="67.50" height="169.50" fill="none" stroke="#0000ee" stroke-width="2.5" />
<line x1="1047.90" y1="204.20" x2="1299.60" y2="204.20" stroke="#555" stroke-width="1.0" />
<g stroke="#1f77b4" stroke-width="1.45" fill="none"><path d="M1059.22 84.77V107.42"/><path d="M1063.89 89.06V111.71"/><path d="M1068.55 96.78V119.43"/><path d="M1073.21 85.20V107.85"/><path d="M1077.87 94.20V116.86"/><path d="M1082.53 106.22V128.87"/><path d="M1087.20 117.37V140.02"/><path d="M1091.86 99.35V122.00"/><path d="M1096.52 94.20V116.86"/><path d="M1101.18 120.80V143.45"/><path d="M1105.84 113.94V136.59"/><path d="M1110.51 125.95V148.60"/><path d="M1115.17 101.93V124.58"/><path d="M1119.83 111.36V134.02"/><path d="M1124.49 108.36V131.01"/><path d="M1129.15 120.80V143.45"/><path d="M1133.82 97.64V120.29"/><path d="M1138.48 105.36V128.01"/><path d="M1143.14 107.93V130.58"/><path d="M1147.80 109.65V132.30"/><path d="M1152.46 123.38V146.03"/><path d="M1157.13 107.93V130.58"/><path d="M1161.79 107.93V130.58"/><path d="M1166.45 93.35V116.00"/><path d="M1171.11 66.75V89.40"/><path d="M1175.77 94.20V116.86"/><path d="M1180.44 91.63V114.28"/><path d="M1185.10 74.04V96.69"/><path d="M1189.76 120.80V143.45"/><path d="M1194.42 100.64V123.29"/><path d="M1199.08 102.10V122.69"/><path d="M1203.75 110.68V131.27"/><path d="M1208.41 110.68V131.27"/><path d="M1213.07 130.41V151.00"/><path d="M1217.73 125.26V145.86"/><path d="M1222.39 118.40V138.99"/><path d="M1227.06 115.40V135.99"/><path d="M1231.72 113.25V133.84"/><path d="M1236.38 103.81V124.41"/><path d="M1241.04 107.67V128.27"/><path d="M1245.70 119.26V139.85"/><path d="M1250.37 124.41V145.00"/><path d="M1255.03 125.26V145.86"/><path d="M1259.69 114.97V135.56"/><path d="M1264.35 118.40V138.99"/><path d="M1269.01 126.98V147.57"/><path d="M1273.68 123.12V142.00"/><path d="M1278.34 155.72V174.60"/><path d="M1283.00 133.41V152.29"/><path d="M1287.66 144.14V163.02"/></g>
<g fill="#1f77b4"><circle cx="1059.22" cy="96.09" r="1.6"/><circle cx="1063.89" cy="100.38" r="1.6"/><circle cx="1068.55" cy="108.10" r="1.6"/><circle cx="1073.21" cy="96.52" r="1.6"/><circle cx="1077.87" cy="105.53" r="1.6"/><circle cx="1082.53" cy="117.54" r="1.6"/><circle cx="1087.20" cy="128.70" r="1.6"/><circle cx="1091.86" cy="110.68" r="1.6"/><circle cx="1096.52" cy="105.53" r="1.6"/><circle cx="1101.18" cy="132.13" r="1.6"/><circle cx="1105.84" cy="125.26" r="1.6"/><circle cx="1110.51" cy="137.28" r="1.6"/><circle cx="1115.17" cy="113.25" r="1.6"/><circle cx="1119.83" cy="122.69" r="1.6"/><circle cx="1124.49" cy="119.69" r="1.6"/><circle cx="1129.15" cy="132.13" r="1.6"/><circle cx="1133.82" cy="108.96" r="1.6"/><circle cx="1138.48" cy="116.68" r="1.6"/><circle cx="1143.14" cy="119.26" r="1.6"/><circle cx="1147.80" cy="120.97" r="1.6"/><circle cx="1152.46" cy="134.70" r="1.6"/><circle cx="1157.13" cy="119.26" r="1.6"/><circle cx="1161.79" cy="119.26" r="1.6"/><circle cx="1166.45" cy="104.67" r="1.6"/><circle cx="1171.11" cy="78.07" r="1.6"/><circle cx="1175.77" cy="105.53" r="1.6"/><circle cx="1180.44" cy="102.96" r="1.6"/><circle cx="1185.10" cy="85.37" r="1.6"/><circle cx="1189.76" cy="132.13" r="1.6"/><circle cx="1194.42" cy="111.96" r="1.6"/><circle cx="1199.08" cy="112.39" r="1.6"/><circle cx="1203.75" cy="120.97" r="1.6"/><circle cx="1208.41" cy="120.97" r="1.6"/><circle cx="1213.07" cy="140.71" r="1.6"/><circle cx="1217.73" cy="135.56" r="1.6"/><circle cx="1222.39" cy="128.70" r="1.6"/><circle cx="1227.06" cy="125.69" r="1.6"/><circle cx="1231.72" cy="123.55" r="1.6"/><circle cx="1236.38" cy="114.11" r="1.6"/><circle cx="1241.04" cy="117.97" r="1.6"/><circle cx="1245.70" cy="129.55" r="1.6"/><circle cx="1250.37" cy="134.70" r="1.6"/><circle cx="1255.03" cy="135.56" r="1.6"/><circle cx="1259.69" cy="125.26" r="1.6"/><circle cx="1264.35" cy="128.70" r="1.6"/><circle cx="1269.01" cy="137.28" r="1.6"/><circle cx="1273.68" cy="132.56" r="1.6"/><circle cx="1278.34" cy="165.16" r="1.6"/><circle cx="1283.00" cy="142.85" r="1.6"/><circle cx="1287.66" cy="153.58" r="1.6"/></g>
<path d="M1068.55 129.73 L1069.71 129.73 L1070.88 129.73 L1072.04 129.73 L1073.21 129.73 L1074.38 129.73 L1075.54 129.73 L1076.71 129.73 L1077.87 129.73 L1079.04 129.73 L1080.20 129.73 L1081.37 129.73 L1082.53 129.73 L1083.70 129.73 L1084.87 129.73 L1086.03 129.73 L1087.20 129.73 L1088.36 129.73 L1089.53 129.73 L1090.69 129.73 L1091.86 129.73 L1093.02 129.73 L1094.19 129.73 L1095.35 129.73 L1096.52 129.73 L1097.69 129.73 L1098.85 129.73 L1100.02 129.73 L1101.18 129.73 L1102.35 129.73 L1103.51 129.73 L1104.68 129.73 L1105.84 129.73 L1107.01 129.73 L1108.18 129.73 L1109.34 129.73 L1110.51 129.73 L1111.67 129.73 L1112.84 129.73 L1114.00 129.73 L1115.17 129.73 L1116.33 129.73 L1117.50 129.73 L1118.66 129.73 L1119.83 129.73 L1121.00 129.73 L1122.16 129.73 L1123.33 129.73 L1124.49 129.73 L1125.66 129.73 L1126.82 129.73 L1127.99 129.73 L1129.15 129.72 L1130.32 129.72 L1131.49 129.72 L1132.65 129.72 L1133.82 129.72 L1134.98 129.71 L1136.15 129.71 L1137.31 129.70 L1138.48 129.69 L1139.64 129.67 L1140.81 129.64 L1141.97 129.59 L1143.14 129.54 L1144.31 129.45 L1145.47 129.34 L1146.64 129.19 L1147.80 129.00 L1148.97 128.73 L1150.13 128.40 L1151.30 127.97 L1152.46 127.44 L1153.63 126.78 L1154.80 125.98 L1155.96 125.03 L1157.13 123.90 L1158.29 122.61 L1159.46 121.13 L1160.62 119.49 L1161.79 117.69 L1162.95 115.75 L1164.12 113.71 L1165.28 111.61 L1166.45 109.50 L1167.62 107.43 L1168.78 105.47 L1169.95 103.68 L1171.11 102.11 L1172.28 100.83 L1173.44 99.88 L1174.61 99.29 L1175.77 99.09 L1176.94 99.29 L1178.11 99.88 L1179.27 100.83 L1180.44 102.11 L1181.60 103.68 L1182.77 105.47 L1183.93 107.43 L1185.10 109.50 L1186.26 111.61 L1187.43 113.71 L1188.59 115.75 L1189.76 117.69 L1190.93 119.49 L1192.09 121.13 L1193.26 122.61 L1194.42 123.90 L1195.59 125.03 L1196.75 125.98 L1197.92 126.78 L1199.08 127.44 L1200.25 127.97 L1201.41 128.40 L1202.58 128.73 L1203.75 129.00 L1204.91 129.19 L1206.08 129.34 L1207.24 129.45 L1208.41 129.54 L1209.57 129.59 L1210.74 129.64 L1211.90 129.67 L1213.07 129.69 L1214.24 129.70 L1215.40 129.71 L1216.57 129.71 L1217.73 129.72 L1218.90 129.72 L1220.06 129.72 L1221.23 129.72 L1222.39 129.72 L1223.56 129.73 L1224.73 129.73 L1225.89 129.73 L1227.06 129.73 L1228.22 129.73 L1229.39 129.73 L1230.55 129.73 L1231.72 129.73 L1232.88 129.73 L1234.05 129.73 L1235.21 129.73 L1236.38 129.73 L1237.55 129.73 L1238.71 129.73 L1239.88 129.73 L1241.04 129.73 L1242.21 129.73 L1243.37 129.73 L1244.54 129.73 L1245.70 129.73 L1246.87 129.73 L1248.04 129.73 L1249.20 129.73 L1250.37 129.73 L1251.53 129.73 L1252.70 129.73 L1253.86 129.73 L1255.03 129.73 L1256.19 129.73 L1257.36 129.73 L1258.52 129.73 L1259.69 129.73 L1260.86 129.73 L1262.02 129.73 L1263.19 129.73 L1264.35 129.73 L1265.52 129.73 L1266.68 129.73 L1267.85 129.73 L1269.01 129.73 L1270.18 129.73 L1271.35 129.73 L1272.51 129.73 L1273.68 129.73 L1274.84 129.73 L1276.01 129.73 L1277.17 129.73 L1278.34 129.73 L1279.50 129.73 L1280.67 129.73 L1281.83 129.73 L1283.00 129.73 L1284.17 129.73" fill="none" stroke="#333" stroke-width="1.9" stroke-linejoin="round"/>
<rect x="1047.90" y="60.60" width="251.70" height="150.60" fill="none" stroke="#3a3a3a" stroke-width="1.1" />
<line x1="1049.90" y1="211.20" x2="1049.90" y2="214.40" stroke="#3a3a3a" stroke-width="0.9" />
<text xml:space="preserve" class="s" x="1049.90" y="223.80" font-size="8.70" fill="#111" text-anchor="middle" >4200</text>
<line x1="1096.52" y1="211.20" x2="1096.52" y2="214.40" stroke="#3a3a3a" stroke-width="0.9" />
<text xml:space="preserve" class="s" x="1096.52" y="223.80" font-size="8.70" fill="#111" text-anchor="middle" >4220</text>
<line x1="1143.14" y1="211.20" x2="1143.14" y2="214.40" stroke="#3a3a3a" stroke-width="0.9" />
<text xml:space="preserve" class="s" x="1143.14" y="223.80" font-size="8.70" fill="#111" text-anchor="middle" >4240</text>
<line x1="1189.76" y1="211.20" x2="1189.76" y2="214.40" stroke="#3a3a3a" stroke-width="0.9" />
<text xml:space="preserve" class="s" x="1189.76" y="223.80" font-size="8.70" fill="#111" text-anchor="middle" >4260</text>
<line x1="1236.38" y1="211.20" x2="1236.38" y2="214.40" stroke="#3a3a3a" stroke-width="0.9" />
<text xml:space="preserve" class="s" x="1236.38" y="223.80" font-size="8.70" fill="#111" text-anchor="middle" >4280</text>
<line x1="1283.00" y1="211.20" x2="1283.00" y2="214.40" stroke="#3a3a3a" stroke-width="0.9" />
<text xml:space="preserve" class="s" x="1283.00" y="223.80" font-size="8.70" fill="#111" text-anchor="middle" >4300</text>
<line x1="1044.70" y1="204.20" x2="1047.90" y2="204.20" stroke="#3a3a3a" stroke-width="0.9" />
<text xml:space="preserve" class="s" x="1041.90" y="207.50" font-size="8.70" fill="#111" text-anchor="end" >0.0</text>
<line x1="1044.70" y1="182.75" x2="1047.90" y2="182.75" stroke="#3a3a3a" stroke-width="0.9" />
<text xml:space="preserve" class="s" x="1041.90" y="186.05" font-size="8.70" fill="#111" text-anchor="end" >2.5</text>
<line x1="1044.70" y1="161.30" x2="1047.90" y2="161.30" stroke="#3a3a3a" stroke-width="0.9" />
<text xml:space="preserve" class="s" x="1041.90" y="164.60" font-size="8.70" fill="#111" text-anchor="end" >5.0</text>
<line x1="1044.70" y1="139.85" x2="1047.90" y2="139.85" stroke="#3a3a3a" stroke-width="0.9" />
<text xml:space="preserve" class="s" x="1041.90" y="143.15" font-size="8.70" fill="#111" text-anchor="end" >7.5</text>
<line x1="1044.70" y1="118.40" x2="1047.90" y2="118.40" stroke="#3a3a3a" stroke-width="0.9" />
<text xml:space="preserve" class="s" x="1041.90" y="121.70" font-size="8.70" fill="#111" text-anchor="end" >10.0</text>
<line x1="1044.70" y1="96.95" x2="1047.90" y2="96.95" stroke="#3a3a3a" stroke-width="0.9" />
<text xml:space="preserve" class="s" x="1041.90" y="100.25" font-size="8.70" fill="#111" text-anchor="end" >12.5</text>
<line x1="1044.70" y1="75.50" x2="1047.90" y2="75.50" stroke="#3a3a3a" stroke-width="0.9" />
<text xml:space="preserve" class="s" x="1041.90" y="78.80" font-size="8.70" fill="#111" text-anchor="end" >15.0</text>
<text xml:space="preserve" class="s" x="1049.60" y="71.20" font-size="8.70" fill="#111" >e</text>
<text xml:space="preserve" class="s" x="1055.25" y="67.80" font-size="6.09" fill="#111" >−17</text>
<text xml:space="preserve" class="s" x="1068.50" y="71.20" font-size="8.70" fill="#111" >x2</text>
<text xml:space="preserve" class="s" x="1079.19" y="71.20" font-size="8.70" fill="#111" font-style="italic" >Å</text>
<g clip-path="url(#scl)">
<rect x="521.51" y="348.80" width="54.19" height="83.20" fill="#c3c000" />
<path d="M101.0 418.8 L102.1 405.9 L103.3 399.8 L104.5 399.6 L105.7 399.7 L106.9 399.0 L108.0 398.1 L109.2 398.5 L110.4 398.2 L111.6 398.6 L112.7 398.5 L113.9 398.5 L115.1 399.6 L116.3 398.0 L117.5 398.1 L118.6 398.1 L119.8 399.4 L121.0 399.4 L122.2 399.0 L123.3 398.8 L124.5 398.6 L125.7 398.9 L126.9 398.8 L128.1 399.7 L129.2 399.5 L130.4 399.6 L131.6 400.5 L132.8 399.3 L133.9 400.2 L135.1 400.0 L136.3 401.2 L137.5 401.4 L138.7 401.3 L139.8 401.2 L141.0 400.9 L142.2 401.2 L143.4 401.6 L144.6 402.0 L145.7 401.9 L146.9 401.1 L148.1 402.3 L149.3 402.0 L150.4 402.1 L151.6 403.3 L152.8 402.8 L154.0 402.5 L155.2 404.4 L156.3 403.8 L157.5 404.0 L158.7 404.5 L159.9 404.1 L161.0 404.5 L162.2 405.2 L163.4 404.3 L164.6 404.3 L165.8 404.2 L166.9 403.9 L168.1 404.3 L169.3 404.4 L170.5 405.0 L171.6 404.1 L172.8 404.7 L174.0 404.6 L175.2 405.1 L176.4 405.0 L177.5 405.0 L178.7 404.4 L179.9 405.9 L181.1 405.8 L182.2 405.3 L183.4 404.9 L184.6 405.4 L185.8 406.5 L187.0 406.8 L188.1 405.8 L189.3 406.2 L190.5 406.4 L191.7 405.6 L192.8 405.6 L194.0 406.0 L195.2 405.9 L196.4 405.9 L197.6 405.5 L198.7 406.0 L199.9 406.1 L201.1 406.3 L202.3 407.2 L203.5 406.3 L204.6 406.6 L205.8 407.0 L207.0 408.0 L208.2 407.8 L209.3 407.4 L210.5 408.5 L211.7 408.0 L212.9 407.7 L214.1 408.6 L215.2 407.7 L216.4 408.1 L217.6 408.3 L218.8 408.2 L219.9 408.1 L221.1 408.3 L222.3 408.0 L223.5 408.5 L224.7 408.4 L225.8 408.0 L227.0 408.3 L228.2 408.7 L229.4 408.2 L230.5 408.1 L231.7 408.8 L232.9 409.1 L234.1 408.8 L235.3 408.9 L236.4 409.0 L237.6 408.5 L238.8 409.3 L240.0 408.6 L241.1 409.3 L242.3 409.1 L243.5 408.7 L244.7 408.5 L245.9 408.5 L247.0 408.6 L248.2 408.7 L249.4 408.7 L250.6 408.5 L251.8 408.8 L252.9 408.7 L254.1 408.7 L255.3 409.0 L256.5 408.9 L257.6 409.0 L258.8 408.7 L260.0 409.3 L261.2 409.6 L262.4 409.7 L263.5 409.7 L264.7 409.5 L265.9 409.9 L267.1 409.7 L268.2 409.3 L269.4 410.5 L270.6 410.1 L271.8 409.7 L273.0 409.7 L274.1 409.7 L275.3 409.9 L276.5 409.7 L277.7 409.8 L278.8 410.1 L280.0 409.4 L281.2 410.0 L282.4 410.3 L283.6 410.3 L284.7 410.4 L285.9 410.4 L287.1 411.2 L288.3 410.7 L289.4 410.3 L290.6 410.9 L291.8 410.6 L293.0 410.3 L294.2 410.3 L295.3 410.1 L296.5 410.9 L297.7 410.5 L298.9 410.4 L300.0 410.2 L301.2 410.0 L302.4 410.9 L303.6 410.0 L304.8 410.7 L305.9 410.2 L307.1 410.8 L308.3 410.4 L309.5 410.3 L310.6 410.7 L311.8 410.7 L313.0 410.6 L314.2 410.8 L315.4 410.9 L316.5 410.6 L317.7 410.7 L318.9 411.0 L320.1 410.3 L321.3 411.2 L322.4 410.7 L323.6 411.0 L324.8 410.9 L326.0 410.8 L327.1 410.9 L328.3 410.8 L329.5 411.4 L330.7 411.4 L331.9 411.0 L333.0 411.4 L334.2 411.5 L335.4 411.7 L336.6 411.2 L337.7 411.4 L338.9 411.3 L340.1 411.9 L341.3 411.8 L342.5 412.1 L343.6 411.7 L344.8 411.5 L346.0 412.0 L347.2 411.4 L348.3 411.5 L349.5 411.7 L350.7 412.1 L351.9 411.3 L353.1 411.6 L354.2 411.7 L355.4 411.5 L356.6 411.6 L357.8 411.4 L358.9 411.9 L360.1 411.5 L361.3 411.5 L362.5 411.6 L363.7 412.0 L364.8 412.1 L366.0 411.8 L367.2 412.0 L368.4 412.0 L369.6 411.7 L370.7 412.1 L371.9 412.5 L373.1 412.0 L374.3 412.3 L375.4 411.7 L376.6 411.8 L377.8 412.0 L379.0 411.9 L380.2 411.7 L381.3 411.9 L382.5 411.7 L383.7 412.0 L384.9 411.9 L386.0 411.8 L387.2 411.9 L388.4 412.4 L389.6 412.2 L390.8 412.8 L391.9 412.7 L393.1 412.9 L394.3 412.4 L395.5 412.9 L396.6 412.6 L397.8 412.7 L399.0 412.6 L400.2 412.7 L401.4 412.4 L402.5 412.1 L403.7 412.3 L404.9 412.2 L406.1 412.0 L407.2 412.2 L408.4 412.4 L409.6 412.2 L410.8 411.9 L412.0 412.4 L413.1 412.2 L414.3 411.9 L415.5 411.9 L416.7 412.1 L417.8 411.9 L419.0 412.0 L420.2 412.2 L421.4 412.2 L422.6 412.0 L423.7 411.5 L424.9 411.7 L426.1 411.7 L427.3 411.6 L428.4 411.6 L429.6 411.3 L430.8 411.5 L432.0 411.1 L433.2 411.7 L434.3 411.2 L435.5 411.4 L436.7 411.8 L437.9 411.3 L439.1 411.5 L440.2 412.0 L441.4 411.8 L442.6 411.6 L443.8 411.8 L444.9 411.6 L446.1 411.7 L447.3 411.7 L448.5 411.8 L449.7 411.6 L450.8 411.7 L452.0 411.7 L453.2 412.3 L454.4 411.6 L455.5 411.5 L456.7 411.9 L457.9 411.9 L459.1 411.5 L460.3 412.3 L461.4 411.9 L462.6 411.6 L463.8 412.3 L465.0 412.1 L466.1 411.9 L467.3 412.4 L468.5 412.3 L469.7 412.3 L470.9 412.7 L472.0 412.5 L473.2 412.5 L474.4 412.3 L475.6 412.5 L476.7 412.5 L477.9 412.6 L479.1 412.5 L480.3 412.2 L481.5 412.3 L482.6 412.5 L483.8 412.5 L485.0 411.8 L486.2 412.1 L487.3 412.2 L488.5 412.9 L489.7 412.3 L490.9 412.4 L492.1 412.2 L493.2 412.5 L494.4 412.6 L495.6 412.6 L496.8 413.1 L498.0 412.5 L499.1 412.7 L500.3 412.8 L501.5 412.5 L502.7 412.3 L503.8 412.9 L505.0 412.8 L506.2 412.6 L507.4 412.6 L508.6 412.7 L509.7 412.8 L510.9 412.3 L512.1 412.5 L513.3 413.0 L514.4 413.1 L515.6 412.6 L516.8 412.8 L518.0 412.7 L519.2 413.0 L520.3 413.3 L521.5 413.2 L522.7 413.6 L523.9 413.4 L525.0 413.3 L526.2 413.2 L527.4 413.4 L528.6 413.3 L529.8 413.1 L530.9 413.1 L532.1 413.1 L533.3 413.1 L534.5 413.2 L535.6 413.0 L536.8 413.1 L538.0 413.3 L539.2 413.3 L540.4 413.2 L541.5 413.3 L542.7 413.3 L543.9 413.3 L545.1 413.3 L546.2 413.4 L547.4 413.6 L548.6 413.4 L549.8 413.3 L551.0 413.4 L552.1 413.4 L553.3 413.3 L554.5 413.5 L555.7 413.6 L556.9 413.3 L558.0 413.4 L559.2 413.1 L560.4 413.4 L561.6 413.6 L562.7 413.4 L563.9 413.0 L565.1 413.3 L566.3 413.5 L567.5 413.4 L568.6 413.3 L569.8 413.4 L571.0 413.5 L572.2 413.3 L573.3 413.5 L574.5 413.6 L575.7 413.5 L576.9 413.4 L578.1 413.5 L579.2 413.5 L580.4 413.8 L581.6 413.6 L582.8 413.5 L583.9 413.6 L585.1 413.4 L586.3 413.5 L587.5 413.4 L588.7 413.6 L589.8 413.2 L591.0 413.5 L592.2 413.7 L593.4 413.7 L594.5 413.4 L595.7 413.9 L596.9 413.7 L598.1 413.8 L599.3 413.9 L600.4 413.9 L601.6 413.5 L602.8 413.2 L604.0 412.8 L605.1 412.6 L606.3 412.4 L607.5 412.0 L608.7 412.0 L609.9 412.2 L611.0 412.5 L612.2 412.7 L613.4 412.8 L614.6 413.3 L615.8 413.4 L616.9 413.6 L618.1 413.8 L619.3 413.7 L620.5 414.0 L621.6 413.8 L622.8 413.6 L624.0 413.7 L625.2 413.8 L626.4 413.8 L627.5 414.0 L628.7 413.5 L629.9 413.7 L631.1 413.6 L632.2 413.9 L633.4 413.7 L634.6 414.0 L635.8 413.5 L637.0 413.5 L638.1 413.9 L639.3 413.6 L640.5 413.5 L641.7 413.9 L642.8 414.0 L644.0 413.9 L645.2 413.9 L646.4 414.0 L647.6 413.9 L648.7 413.9 L649.9 413.9 L651.1 413.9 L652.3 413.8 L653.4 413.8 L654.6 414.2 L655.8 414.1 L657.0 414.1 L658.2 414.1 L659.3 413.9 L660.5 413.9 L661.7 413.8 L662.9 414.0 L664.0 414.0 L665.2 413.8 L666.4 413.8 L667.6 413.8 L668.8 413.8 L669.9 413.9 L671.1 413.7 L672.3 413.8 L673.5 413.9 L674.7 414.0 L675.8 413.9 L677.0 414.3 L678.2 414.0 L679.4 413.9 L680.5 414.1 L681.7 413.8 L682.9 413.8 L684.1 414.0 L685.3 413.8 L686.4 413.7 L687.6 413.6 L688.8 413.5 L690.0 413.6 L691.1 413.7 L692.3 413.6 L693.5 413.6 L694.7 413.5 L695.9 413.6 L697.0 413.8 L698.2 413.9 L699.4 413.8 L700.6 413.9 L701.7 414.0 L702.9 413.9 L704.1 414.0 L705.3 413.9 L706.5 413.8 L707.6 414.0 L708.8 413.6 L710.0 413.9 L711.2 413.7 L712.3 413.8 L713.5 413.6 L714.7 414.2 L715.9 413.9 L717.1 413.7 L718.2 413.7 L719.4 413.4 L720.6 413.8 L721.8 413.7 L722.9 413.8 L724.1 413.8 L725.3 413.9 L726.5 414.0 L727.7 413.9 L728.8 414.2 L730.0 413.8 L731.2 414.2 L732.4 414.0 L733.6 413.6 L734.7 414.0 L735.9 413.9 L737.1 413.7 L738.3 413.8 L739.4 413.9 L740.6 413.7 L741.8 413.6 L743.0 413.6 L744.2 413.8 L745.3 413.4 L746.5 413.4 L747.7 413.7 L748.9 413.7 L750.0 413.8 L751.2 413.6 L752.4 413.9 L753.6 413.7 L754.8 413.9 L755.9 414.0 L757.1 413.7 L758.3 413.7 L759.5 413.8 L760.6 413.9 L761.8 413.7 L763.0 413.8 L764.2 413.7 L765.4 413.5 L766.5 413.5 L767.7 413.8 L768.9 413.4 L770.1 413.7 L771.2 413.6 L772.4 413.9 L773.6 413.8 L774.8 414.1 L776.0 413.6 L777.1 413.7 L778.3 414.2 L779.5 414.2 L780.7 414.3 L781.8 413.9 L783.0 414.1 L784.2 414.1 L785.4 414.1 L786.6 414.0 L787.7 414.1 L788.9 413.9 L790.1 414.1 L791.3 413.9 L792.5 413.8 L793.6 413.7 L794.8 413.8 L796.0 413.9 L797.2 413.7 L798.3 413.8 L799.5 413.6 L800.7 413.7 L801.9 413.8 L803.1 413.9 L804.2 414.0 L805.4 414.0 L806.6 414.0 L807.8 413.9 L808.9 413.8 L810.1 413.8 L811.3 413.5 L812.5 413.9 L813.7 413.8 L814.8 413.3 L816.0 414.0 L817.2 413.8 L818.4 413.6 L819.5 413.6 L820.7 413.6 L821.9 413.7 L823.1 413.6 L824.3 413.7 L825.4 413.6 L826.6 414.0 L827.8 413.9 L829.0 413.8 L830.1 414.0 L831.3 414.1 L832.5 413.9 L833.7 414.1 L834.9 413.9 L836.0 413.9 L837.2 413.9 L838.4 413.9 L839.6 414.0 L840.8 414.1 L841.9 413.9 L843.1 413.8 L844.3 413.9 L845.5 413.8 L846.6 413.7 L847.8 414.0 L849.0 413.7 L850.2 413.6 L851.4 414.0 L852.5 413.9 L853.7 414.0 L854.9 413.7 L856.1 413.9 L857.2 413.9 L858.4 414.1 L859.6 414.0 L860.8 414.0 L862.0 414.3 L863.1 413.7 L864.3 413.8 L865.5 414.1 L866.7 413.7 L867.8 413.8 L869.0 413.7 L870.2 413.7 L871.4 413.9 L872.6 413.7 L873.7 413.4 L874.9 413.7 L876.1 413.8 L877.3 413.9 L878.4 413.9 L879.6 413.7 L880.8 413.5 L882.0 413.8 L883.2 413.8 L884.3 413.6 L885.5 414.0 L886.7 414.0 L887.9 413.8 L889.0 413.8 L890.2 414.0 L891.4 414.0 L892.6 413.8 L893.8 413.8 L894.9 414.0 L896.1 413.8 L897.3 413.9 L898.5 413.7 L899.6 413.8 L900.8 413.8 L902.0 413.9 L903.2 413.7 L904.4 413.7 L905.5 414.0 L906.7 413.9 L907.9 414.1 L909.1 414.0 L910.3 414.0 L911.4 413.9 L912.6 414.1 L913.8 414.1 L915.0 414.0 L916.1 414.2 L917.3 414.0 L918.5 414.0 L919.7 413.8 L920.9 414.0 L922.0 414.1 L923.2 413.8 L924.4 413.7 L925.6 413.8 L926.7 413.6 L927.9 413.8 L929.1 413.9 L930.3 413.7 L931.5 414.1 L932.6 414.0 L933.8 413.9 L935.0 413.8 L936.2 413.9 L937.3 413.9 L938.5 414.0 L939.7 413.8 L940.9 413.6 L942.1 413.9 L943.2 413.5 L944.4 413.9 L945.6 413.7 L946.8 413.7 L947.9 413.5 L949.1 413.9 L950.3 414.0 L951.5 413.6 L952.7 413.6 L953.8 413.7 L955.0 413.4 L956.2 413.8 L957.4 413.8 L958.5 413.8 L959.7 413.9 L960.9 413.8 L962.1 414.2 L963.3 414.1 L964.4 414.6 L965.6 413.9 L966.8 414.1 L968.0 413.9 L969.2 413.7 L970.3 414.0 L971.5 414.0 L972.7 414.0 L973.9 414.0 L975.0 414.0 L976.2 413.8 L977.4 413.9 L978.6 413.9 L979.8 413.9 L980.9 413.8 L982.1 413.8 L983.3 414.0 L984.5 413.9 L985.6 414.0 L986.8 414.2 L988.0 413.8 L989.2 413.9 L990.4 414.1 L991.5 413.8 L992.7 413.9 L993.9 414.1 L995.1 413.6 L996.2 413.8 L997.4 413.7 L998.6 413.7 L999.8 413.7 L1001.0 413.9 L1002.1 413.5 L1003.3 413.7 L1004.5 413.7 L1005.7 413.7 L1006.8 413.7 L1008.0 413.7 L1009.2 413.9 L1010.4 413.8 L1011.6 414.2 L1012.7 414.0 L1013.9 413.8 L1015.1 413.8 L1016.3 414.0 L1017.4 414.0 L1018.6 413.7 L1019.8 414.0 L1021.0 413.8 L1022.2 413.7 L1023.3 413.9 L1024.5 413.7 L1025.7 414.0 L1026.9 413.8 L1028.1 413.9 L1029.2 413.8 L1030.4 413.4 L1031.6 413.0 L1032.8 413.3 L1033.9 413.0 L1035.1 412.6 L1036.3 412.7 L1037.5 412.2 L1038.7 412.2 L1039.8 412.7 L1041.0 412.7 L1042.2 413.3 L1043.4 413.1 L1044.5 413.7 L1045.7 413.7 L1046.9 413.9 L1048.1 413.8 L1049.3 413.6 L1050.4 413.7 L1051.6 413.7 L1052.8 413.5 L1054.0 413.3 L1055.1 413.6 L1056.3 413.5 L1057.5 413.4 L1058.7 413.6 L1059.9 413.8 L1061.0 413.3 L1062.2 413.3 L1063.4 414.0 L1064.6 413.7 L1065.7 413.7 L1066.9 413.6 L1068.1 413.6 L1069.3 413.8 L1070.5 413.9 L1071.6 413.7 L1072.8 413.5 L1074.0 413.8 L1075.2 413.8 L1076.3 413.6 L1077.5 413.9 L1078.7 413.6 L1079.9 413.6 L1081.1 413.5 L1082.2 413.7 L1083.4 413.8 L1084.6 413.7 L1085.8 413.7 L1087.0 413.9 L1088.1 413.8 L1089.3 413.7 L1090.5 413.7 L1091.7 413.6 L1092.8 414.0 L1094.0 414.0 L1095.2 414.3 L1096.4 413.6 L1097.6 414.0 L1098.7 413.9 L1099.9 413.7 L1101.1 414.0 L1102.3 413.7 L1103.4 413.7 L1104.6 414.0 L1105.8 413.6 L1107.0 413.5 L1108.2 414.0 L1109.3 413.6 L1110.5 413.7 L1111.7 413.7 L1112.9 413.7 L1114.0 413.6 L1115.2 413.8 L1116.4 413.7 L1117.6 413.9 L1118.8 413.7 L1119.9 413.9 L1121.1 413.8 L1122.3 413.5 L1123.5 413.7 L1124.6 413.7 L1125.8 413.8 L1127.0 413.7 L1128.2 413.5 L1129.4 413.4 L1130.5 413.4 L1131.7 413.4 L1132.9 413.5 L1134.1 413.3 L1135.2 413.6 L1136.4 413.7 L1137.6 413.5 L1138.8 413.6 L1140.0 413.7 L1141.1 413.8 L1142.3 413.8 L1143.5 413.7 L1144.7 413.8 L1145.9 414.0 L1147.0 413.8 L1148.2 413.8 L1149.4 414.0 L1150.6 413.7 L1151.7 413.8 L1152.9 413.8 L1154.1 413.6 L1155.3 413.5 L1156.5 413.8 L1157.6 413.6 L1158.8 413.8 L1160.0 413.4 L1161.2 413.8 L1162.3 413.6 L1163.5 413.9 L1164.7 413.7 L1165.9 413.5 L1167.1 414.3 L1168.2 414.0 L1169.4 413.8 L1170.6 413.9 L1171.8 414.0 L1172.9 413.6 L1174.1 413.9 L1175.3 414.1 L1176.5 413.7 L1177.7 414.0 L1178.8 413.5 L1180.0 413.7 L1181.2 413.6 L1182.4 413.4 L1183.5 413.5 L1184.7 413.8 L1185.9 413.8 L1187.1 413.4 L1188.3 413.5 L1189.4 413.7 L1190.6 413.5 L1191.8 413.6 L1193.0 413.6 L1194.1 414.1 L1195.3 413.8 L1196.5 413.6 L1197.7 413.6 L1198.9 413.6 L1200.0 414.1 L1201.2 413.7 L1202.4 413.6 L1203.6 413.3 L1204.8 413.8 L1205.9 413.7 L1207.1 413.6 L1208.3 413.5 L1209.5 413.7 L1210.6 413.4 L1211.8 413.7 L1213.0 413.6 L1214.2 413.8 L1215.4 413.7 L1216.5 413.9 L1217.7 414.1 L1218.9 413.7 L1220.1 413.9 L1221.2 414.0 L1222.4 413.9 L1223.6 413.8 L1224.8 414.1 L1226.0 413.9 L1227.1 413.8 L1228.3 413.8 L1229.5 413.9 L1230.7 414.1 L1231.8 413.5 L1233.0 413.7 L1234.2 413.7 L1235.4 413.7 L1236.6 413.6 L1237.7 413.7 L1238.9 413.8 L1240.1 413.8 L1241.3 413.8 L1242.4 413.8 L1243.6 413.9 L1244.8 413.7 L1246.0 414.0 L1247.2 413.7 L1248.3 413.9 L1249.5 413.7 L1250.7 413.5 L1251.9 413.7 L1253.0 413.8 L1254.2 413.7 L1255.4 413.6 L1256.6 413.8 L1257.8 413.6 L1258.9 413.5 L1260.1 413.6 L1261.3 413.5 L1262.5 413.4 L1263.7 413.4 L1264.8 413.4 L1266.0 413.2 L1267.2 413.2 L1268.4 412.9 L1269.5 412.7 L1270.7 412.5 L1271.9 412.3 L1273.1 412.9 L1274.3 413.0 L1275.4 413.2 L1276.6 413.7 L1277.8 413.6 L1279.0 413.7 L1280.1 413.8 L1281.3 413.6 L1282.5 414.4 L1283.7 414.1 L1284.9 414.4 L1286.0 414.2 L1287.2 414.3 L1288.4 415.2 L1289.6 415.2 L1290.7 415.5 L1291.9 416.0 L1293.1 416.7 L1294.3 417.5 L1295.5 418.1 L1296.6 418.5 L1297.8 418.7 L1299.0 418.8 L1300.2 418.8 L1300.2 418.8 L1299.0 418.8 L1297.8 418.9 L1296.6 419.1 L1295.5 419.5 L1294.3 420.1 L1293.1 420.9 L1291.9 421.6 L1290.7 422.1 L1289.6 422.4 L1288.4 422.4 L1287.2 423.3 L1286.0 423.4 L1284.9 423.2 L1283.7 423.5 L1282.5 423.2 L1281.3 424.0 L1280.1 423.8 L1279.0 423.9 L1277.8 424.0 L1276.6 423.9 L1275.4 424.4 L1274.3 424.6 L1273.1 424.7 L1271.9 425.3 L1270.7 425.1 L1269.5 424.9 L1268.4 424.7 L1267.2 424.4 L1266.0 424.4 L1264.8 424.2 L1263.7 424.2 L1262.5 424.2 L1261.3 424.1 L1260.1 424.0 L1258.9 424.1 L1257.8 424.0 L1256.6 423.8 L1255.4 424.0 L1254.2 423.9 L1253.0 423.8 L1251.9 423.9 L1250.7 424.1 L1249.5 423.9 L1248.3 423.7 L1247.2 423.9 L1246.0 423.6 L1244.8 423.9 L1243.6 423.7 L1242.4 423.8 L1241.3 423.8 L1240.1 423.8 L1238.9 423.8 L1237.7 423.9 L1236.6 424.0 L1235.4 423.9 L1234.2 423.9 L1233.0 423.9 L1231.8 424.1 L1230.7 423.5 L1229.5 423.7 L1228.3 423.8 L1227.1 423.8 L1226.0 423.7 L1224.8 423.5 L1223.6 423.8 L1222.4 423.7 L1221.2 423.6 L1220.1 423.7 L1218.9 423.9 L1217.7 423.5 L1216.5 423.7 L1215.4 423.9 L1214.2 423.8 L1213.0 424.0 L1211.8 423.9 L1210.6 424.2 L1209.5 423.9 L1208.3 424.1 L1207.1 424.0 L1205.9 423.9 L1204.8 423.8 L1203.6 424.3 L1202.4 424.0 L1201.2 423.9 L1200.0 423.5 L1198.9 424.0 L1197.7 424.0 L1196.5 424.0 L1195.3 423.8 L1194.1 423.5 L1193.0 424.0 L1191.8 424.0 L1190.6 424.1 L1189.4 423.9 L1188.3 424.1 L1187.1 424.2 L1185.9 423.8 L1184.7 423.8 L1183.5 424.1 L1182.4 424.2 L1181.2 424.0 L1180.0 423.9 L1178.8 424.1 L1177.7 423.6 L1176.5 423.9 L1175.3 423.5 L1174.1 423.7 L1172.9 424.0 L1171.8 423.6 L1170.6 423.7 L1169.4 423.8 L1168.2 423.6 L1167.1 423.3 L1165.9 424.1 L1164.7 423.9 L1163.5 423.7 L1162.3 424.0 L1161.2 423.8 L1160.0 424.2 L1158.8 423.8 L1157.6 424.0 L1156.5 423.8 L1155.3 424.1 L1154.1 424.0 L1152.9 423.8 L1151.7 423.8 L1150.6 423.9 L1149.4 423.6 L1148.2 423.8 L1147.0 423.8 L1145.9 423.6 L1144.7 423.8 L1143.5 423.9 L1142.3 423.8 L1141.1 423.8 L1140.0 423.9 L1138.8 424.0 L1137.6 424.1 L1136.4 423.9 L1135.2 424.0 L1134.1 424.3 L1132.9 424.1 L1131.7 424.2 L1130.5 424.2 L1129.4 424.2 L1128.2 424.1 L1127.0 423.9 L1125.8 423.8 L1124.6 423.9 L1123.5 423.9 L1122.3 424.1 L1121.1 423.8 L1119.9 423.7 L1118.8 423.9 L1117.6 423.7 L1116.4 423.9 L1115.2 423.8 L1114.0 424.0 L1112.9 423.9 L1111.7 423.9 L1110.5 423.9 L1109.3 424.0 L1108.2 423.6 L1107.0 424.1 L1105.8 424.0 L1104.6 423.6 L1103.4 423.9 L1102.3 423.9 L1101.1 423.6 L1099.9 423.9 L1098.7 423.7 L1097.6 423.6 L1096.4 424.0 L1095.2 423.3 L1094.0 423.6 L1092.8 423.6 L1091.7 424.0 L1090.5 423.9 L1089.3 423.9 L1088.1 423.8 L1087.0 423.7 L1085.8 423.9 L1084.6 423.9 L1083.4 423.8 L1082.2 423.9 L1081.1 424.1 L1079.9 424.0 L1078.7 424.0 L1077.5 423.7 L1076.3 424.0 L1075.2 423.8 L1074.0 423.8 L1072.8 424.1 L1071.6 423.9 L1070.5 423.7 L1069.3 423.8 L1068.1 424.0 L1066.9 424.0 L1065.7 423.9 L1064.6 423.9 L1063.4 423.6 L1062.2 424.3 L1061.0 424.3 L1059.9 423.8 L1058.7 424.0 L1057.5 424.2 L1056.3 424.1 L1055.1 424.0 L1054.0 424.3 L1052.8 424.1 L1051.6 423.9 L1050.4 423.9 L1049.3 424.0 L1048.1 423.8 L1046.9 423.7 L1045.7 423.9 L1044.5 423.9 L1043.4 424.5 L1042.2 424.3 L1041.0 424.9 L1039.8 424.9 L1038.7 425.4 L1037.5 425.4 L1036.3 424.9 L1035.1 425.0 L1033.9 424.6 L1032.8 424.3 L1031.6 424.6 L1030.4 424.2 L1029.2 423.8 L1028.1 423.7 L1026.9 423.8 L1025.7 423.6 L1024.5 423.9 L1023.3 423.7 L1022.2 423.9 L1021.0 423.8 L1019.8 423.6 L1018.6 423.9 L1017.4 423.6 L1016.3 423.6 L1015.1 423.8 L1013.9 423.8 L1012.7 423.6 L1011.6 423.4 L1010.4 423.8 L1009.2 423.7 L1008.0 423.9 L1006.8 423.9 L1005.7 423.9 L1004.5 423.9 L1003.3 423.9 L1002.1 424.1 L1001.0 423.7 L999.8 423.9 L998.6 423.9 L997.4 423.9 L996.2 423.8 L995.1 424.0 L993.9 423.5 L992.7 423.7 L991.5 423.8 L990.4 423.5 L989.2 423.7 L988.0 423.8 L986.8 423.4 L985.6 423.6 L984.5 423.7 L983.3 423.6 L982.1 423.8 L980.9 423.8 L979.8 423.7 L978.6 423.7 L977.4 423.7 L976.2 423.8 L975.0 423.6 L973.9 423.6 L972.7 423.6 L971.5 423.6 L970.3 423.6 L969.2 423.9 L968.0 423.7 L966.8 423.5 L965.6 423.7 L964.4 423.0 L963.3 423.5 L962.1 423.4 L960.9 423.8 L959.7 423.7 L958.5 423.8 L957.4 423.8 L956.2 423.8 L955.0 424.2 L953.8 423.9 L952.7 424.0 L951.5 424.0 L950.3 423.6 L949.1 423.7 L947.9 424.1 L946.8 423.9 L945.6 423.9 L944.4 423.7 L943.2 424.1 L942.1 423.7 L940.9 424.0 L939.7 423.8 L938.5 423.6 L937.3 423.7 L936.2 423.7 L935.0 423.8 L933.8 423.7 L932.6 423.6 L931.5 423.5 L930.3 423.9 L929.1 423.7 L927.9 423.8 L926.7 424.0 L925.6 423.8 L924.4 423.9 L923.2 423.8 L922.0 423.5 L920.9 423.6 L919.7 423.8 L918.5 423.6 L917.3 423.6 L916.1 423.4 L915.0 423.6 L913.8 423.5 L912.6 423.5 L911.4 423.7 L910.3 423.6 L909.1 423.6 L907.9 423.5 L906.7 423.7 L905.5 423.6 L904.4 423.9 L903.2 423.9 L902.0 423.7 L900.8 423.8 L899.6 423.8 L898.5 423.9 L897.3 423.7 L896.1 423.8 L894.9 423.6 L893.8 423.8 L892.6 423.8 L891.4 423.6 L890.2 423.6 L889.0 423.8 L887.9 423.8 L886.7 423.6 L885.5 423.6 L884.3 424.0 L883.2 423.8 L882.0 423.8 L880.8 424.1 L879.6 423.9 L878.4 423.7 L877.3 423.7 L876.1 423.8 L874.9 423.9 L873.7 424.2 L872.6 423.9 L871.4 423.7 L870.2 423.9 L869.0 423.9 L867.8 423.8 L866.7 423.9 L865.5 423.5 L864.3 423.8 L863.1 423.9 L862.0 423.3 L860.8 423.6 L859.6 423.6 L858.4 423.5 L857.2 423.7 L856.1 423.7 L854.9 423.9 L853.7 423.6 L852.5 423.7 L851.4 423.6 L850.2 424.0 L849.0 423.9 L847.8 423.6 L846.6 423.9 L845.5 423.8 L844.3 423.7 L843.1 423.8 L841.9 423.7 L840.8 423.5 L839.6 423.6 L838.4 423.7 L837.2 423.7 L836.0 423.7 L834.9 423.7 L833.7 423.5 L832.5 423.7 L831.3 423.5 L830.1 423.6 L829.0 423.8 L827.8 423.7 L826.6 423.6 L825.4 424.0 L824.3 423.9 L823.1 424.0 L821.9 423.9 L820.7 424.0 L819.5 424.0 L818.4 424.0 L817.2 423.8 L816.0 423.6 L814.8 424.3 L813.7 423.8 L812.5 423.7 L811.3 424.1 L810.1 423.8 L808.9 423.8 L807.8 423.7 L806.6 423.6 L805.4 423.6 L804.2 423.6 L803.1 423.7 L801.9 423.8 L800.7 423.9 L799.5 424.0 L798.3 423.8 L797.2 423.9 L796.0 423.7 L794.8 423.8 L793.6 423.9 L792.5 423.8 L791.3 423.7 L790.1 423.5 L788.9 423.7 L787.7 423.5 L786.6 423.6 L785.4 423.5 L784.2 423.5 L783.0 423.5 L781.8 423.7 L780.7 423.3 L779.5 423.4 L778.3 423.4 L777.1 423.9 L776.0 424.0 L774.8 423.5 L773.6 423.8 L772.4 423.7 L771.2 424.0 L770.1 423.9 L768.9 424.2 L767.7 423.8 L766.5 424.1 L765.4 424.1 L764.2 423.9 L763.0 423.8 L761.8 423.9 L760.6 423.7 L759.5 423.8 L758.3 423.9 L757.1 423.9 L755.9 423.6 L754.8 423.7 L753.6 423.9 L752.4 423.7 L751.2 424.0 L750.0 423.8 L748.9 423.9 L747.7 423.9 L746.5 424.2 L745.3 424.2 L744.2 423.8 L743.0 424.0 L741.8 424.0 L740.6 423.9 L739.4 423.7 L738.3 423.8 L737.1 423.9 L735.9 423.7 L734.7 423.6 L733.6 424.0 L732.4 423.6 L731.2 423.4 L730.0 423.8 L728.8 423.4 L727.7 423.7 L726.5 423.6 L725.3 423.7 L724.1 423.8 L722.9 423.8 L721.8 423.9 L720.6 423.8 L719.4 424.2 L718.2 423.9 L717.1 423.9 L715.9 423.7 L714.7 423.4 L713.5 424.0 L712.3 423.8 L711.2 423.9 L710.0 423.7 L708.8 424.0 L707.6 423.6 L706.5 423.8 L705.3 423.7 L704.1 423.6 L702.9 423.7 L701.7 423.6 L700.6 423.7 L699.4 423.8 L698.2 423.7 L697.0 423.8 L695.9 424.0 L694.7 424.1 L693.5 424.0 L692.3 424.0 L691.1 423.9 L690.0 424.0 L688.8 424.1 L687.6 424.0 L686.4 423.9 L685.3 423.8 L684.1 423.6 L682.9 423.8 L681.7 423.8 L680.5 423.5 L679.4 423.7 L678.2 423.6 L677.0 423.3 L675.8 423.7 L674.7 423.6 L673.5 423.7 L672.3 423.8 L671.1 423.9 L669.9 423.7 L668.8 423.8 L667.6 423.8 L666.4 423.8 L665.2 423.8 L664.0 423.6 L662.9 423.6 L661.7 423.8 L660.5 423.7 L659.3 423.7 L658.2 423.5 L657.0 423.5 L655.8 423.5 L654.6 423.4 L653.4 423.8 L652.3 423.8 L651.1 423.7 L649.9 423.7 L648.7 423.7 L647.6 423.7 L646.4 423.6 L645.2 423.7 L644.0 423.7 L642.8 423.6 L641.7 423.7 L640.5 424.1 L639.3 424.0 L638.1 423.7 L637.0 424.1 L635.8 424.1 L634.6 423.6 L633.4 423.9 L632.2 423.7 L631.1 424.0 L629.9 423.9 L628.7 424.1 L627.5 423.6 L626.4 423.8 L625.2 423.8 L624.0 423.9 L622.8 424.0 L621.6 423.8 L620.5 423.6 L619.3 423.9 L618.1 423.8 L616.9 424.0 L615.8 424.2 L614.6 424.3 L613.4 424.8 L612.2 424.9 L611.0 425.1 L609.9 425.4 L608.7 425.6 L607.5 425.6 L606.3 425.2 L605.1 425.0 L604.0 424.8 L602.8 424.4 L601.6 424.1 L600.4 423.7 L599.3 423.7 L598.1 423.8 L596.9 423.9 L595.7 423.7 L594.5 424.2 L593.4 423.9 L592.2 423.9 L591.0 424.1 L589.8 424.4 L588.7 424.0 L587.5 424.2 L586.3 424.1 L585.1 424.2 L583.9 424.0 L582.8 424.1 L581.6 424.0 L580.4 423.8 L579.2 424.1 L578.1 424.1 L576.9 424.2 L575.7 424.1 L574.5 424.0 L573.3 424.1 L572.2 424.3 L571.0 424.1 L569.8 424.2 L568.6 424.3 L567.5 424.2 L566.3 424.1 L565.1 424.3 L563.9 424.6 L562.7 424.2 L561.6 424.0 L560.4 424.2 L559.2 424.5 L558.0 424.2 L556.9 424.3 L555.7 424.0 L554.5 424.1 L553.3 424.3 L552.1 424.2 L551.0 424.2 L549.8 424.3 L548.6 424.2 L547.4 424.0 L546.2 424.2 L545.1 424.3 L543.9 424.3 L542.7 424.3 L541.5 424.3 L540.4 424.4 L539.2 424.3 L538.0 424.3 L536.8 424.5 L535.6 424.6 L534.5 424.4 L533.3 424.5 L532.1 424.5 L530.9 424.5 L529.8 424.5 L528.6 424.3 L527.4 424.2 L526.2 424.4 L525.0 424.3 L523.9 424.2 L522.7 424.0 L521.5 424.4 L520.3 424.3 L519.2 424.6 L518.0 424.9 L516.8 424.8 L515.6 425.0 L514.4 424.5 L513.3 424.6 L512.1 425.1 L510.9 425.3 L509.7 424.8 L508.6 424.9 L507.4 425.0 L506.2 425.0 L505.0 424.8 L503.8 424.7 L502.7 425.3 L501.5 425.1 L500.3 424.8 L499.1 424.9 L498.0 425.1 L496.8 424.5 L495.6 425.0 L494.4 425.0 L493.2 425.1 L492.1 425.4 L490.9 425.2 L489.7 425.3 L488.5 424.7 L487.3 425.4 L486.2 425.5 L485.0 425.8 L483.8 425.1 L482.6 425.1 L481.5 425.3 L480.3 425.4 L479.1 425.1 L477.9 425.0 L476.7 425.1 L475.6 425.1 L474.4 425.3 L473.2 425.1 L472.0 425.1 L470.9 424.9 L469.7 425.3 L468.5 425.3 L467.3 425.2 L466.1 425.7 L465.0 425.5 L463.8 425.3 L462.6 426.0 L461.4 425.7 L460.3 425.3 L459.1 426.1 L457.9 425.7 L456.7 425.7 L455.5 426.1 L454.4 426.0 L453.2 425.3 L452.0 425.9 L450.8 425.9 L449.7 426.0 L448.5 425.8 L447.3 425.9 L446.1 425.9 L444.9 426.0 L443.8 425.8 L442.6 426.0 L441.4 425.8 L440.2 425.6 L439.1 426.1 L437.9 426.3 L436.7 425.8 L435.5 426.2 L434.3 426.4 L433.2 425.9 L432.0 426.5 L430.8 426.1 L429.6 426.3 L428.4 426.0 L427.3 426.0 L426.1 425.9 L424.9 425.9 L423.7 426.1 L422.6 425.6 L421.4 425.4 L420.2 425.4 L419.0 425.6 L417.8 425.7 L416.7 425.5 L415.5 425.7 L414.3 425.7 L413.1 425.4 L412.0 425.2 L410.8 425.7 L409.6 425.4 L408.4 425.2 L407.2 425.4 L406.1 425.6 L404.9 425.4 L403.7 425.3 L402.5 425.5 L401.4 425.2 L400.2 424.9 L399.0 425.0 L397.8 424.9 L396.6 425.0 L395.5 424.7 L394.3 425.2 L393.1 424.7 L391.9 424.9 L390.8 424.8 L389.6 425.4 L388.4 425.2 L387.2 425.7 L386.0 425.8 L384.9 425.7 L383.7 425.6 L382.5 425.9 L381.3 425.7 L380.2 425.9 L379.0 425.7 L377.8 425.6 L376.6 425.8 L375.4 425.9 L374.3 425.3 L373.1 425.6 L371.9 425.1 L370.7 425.5 L369.6 425.9 L368.4 425.6 L367.2 425.6 L366.0 425.8 L364.8 425.5 L363.7 425.6 L362.5 426.0 L361.3 426.1 L360.1 426.1 L358.9 425.7 L357.8 426.2 L356.6 426.0 L355.4 426.1 L354.2 425.9 L353.1 426.0 L351.9 426.3 L350.7 425.5 L349.5 425.9 L348.3 426.1 L347.2 426.2 L346.0 425.6 L344.8 426.1 L343.6 425.9 L342.5 425.5 L341.3 425.8 L340.1 425.7 L338.9 426.3 L337.7 426.2 L336.6 426.4 L335.4 425.9 L334.2 426.1 L333.0 426.2 L331.9 426.6 L330.7 426.2 L329.5 426.2 L328.3 426.8 L327.1 426.7 L326.0 426.8 L324.8 426.7 L323.6 426.6 L322.4 426.9 L321.3 426.4 L320.1 427.3 L318.9 426.6 L317.7 426.9 L316.5 427.0 L315.4 426.7 L314.2 426.8 L313.0 427.0 L311.8 426.9 L310.6 426.9 L309.5 427.3 L308.3 427.2 L307.1 426.8 L305.9 427.4 L304.8 426.9 L303.6 427.6 L302.4 426.7 L301.2 427.6 L300.0 427.4 L298.9 427.2 L297.7 427.1 L296.5 426.7 L295.3 427.5 L294.2 427.3 L293.0 427.3 L291.8 427.0 L290.6 426.7 L289.4 427.3 L288.3 426.9 L287.1 426.4 L285.9 427.2 L284.7 427.2 L283.6 427.3 L282.4 427.3 L281.2 427.6 L280.0 428.2 L278.8 427.5 L277.7 427.8 L276.5 427.9 L275.3 427.7 L274.1 427.9 L273.0 427.9 L271.8 427.9 L270.6 427.5 L269.4 427.1 L268.2 428.3 L267.1 427.9 L265.9 427.7 L264.7 428.1 L263.5 427.9 L262.4 427.9 L261.2 428.0 L260.0 428.3 L258.8 428.9 L257.6 428.6 L256.5 428.7 L255.3 428.6 L254.1 428.9 L252.9 428.9 L251.8 428.8 L250.6 429.1 L249.4 428.9 L248.2 428.9 L247.0 429.0 L245.9 429.1 L244.7 429.1 L243.5 428.9 L242.3 428.5 L241.1 428.3 L240.0 429.0 L238.8 428.3 L237.6 429.1 L236.4 428.6 L235.3 428.7 L234.1 428.8 L232.9 428.5 L231.7 428.8 L230.5 429.5 L229.4 429.4 L228.2 428.9 L227.0 429.3 L225.8 429.6 L224.7 429.2 L223.5 429.1 L222.3 429.6 L221.1 429.3 L219.9 429.5 L218.8 429.4 L217.6 429.3 L216.4 429.5 L215.2 429.9 L214.1 429.0 L212.9 429.9 L211.7 429.6 L210.5 429.1 L209.3 430.2 L208.2 429.8 L207.0 429.6 L205.8 430.6 L204.6 431.0 L203.5 431.3 L202.3 430.4 L201.1 431.3 L199.9 431.5 L198.7 431.6 L197.6 432.1 L196.4 431.7 L195.2 431.7 L194.0 431.6 L192.8 432.0 L191.7 432.0 L190.5 431.2 L189.3 431.4 L188.1 431.8 L187.0 430.8 L185.8 431.1 L184.6 432.2 L183.4 432.7 L182.2 432.3 L181.1 431.8 L179.9 431.7 L178.7 433.2 L177.5 432.6 L176.4 432.6 L175.2 432.5 L174.0 433.0 L172.8 432.9 L171.6 433.5 L170.5 432.6 L169.3 433.2 L168.1 433.3 L166.9 433.7 L165.8 433.4 L164.6 433.3 L163.4 433.3 L162.2 432.4 L161.0 433.1 L159.9 433.5 L158.7 433.1 L157.5 433.6 L156.3 433.8 L155.2 433.2 L154.0 435.1 L152.8 434.8 L151.6 434.3 L150.4 435.5 L149.3 435.6 L148.1 435.3 L146.9 436.5 L145.7 435.7 L144.6 435.6 L143.4 436.0 L142.2 436.4 L141.0 436.7 L139.8 436.4 L138.7 436.3 L137.5 436.2 L136.3 436.4 L135.1 437.6 L133.9 437.4 L132.8 438.3 L131.6 437.1 L130.4 438.0 L129.2 438.1 L128.1 437.9 L126.9 438.8 L125.7 438.7 L124.5 439.0 L123.3 438.8 L122.2 438.6 L121.0 438.2 L119.8 438.2 L118.6 439.5 L117.5 439.5 L116.3 439.6 L115.1 438.0 L113.9 439.1 L112.7 439.1 L111.6 439.0 L110.4 439.4 L109.2 439.1 L108.0 439.5 L106.9 438.6 L105.7 437.9 L104.5 438.0 L103.3 437.8 L102.1 431.7 L101.0 418.8 Z" fill="#808080" fill-opacity="0.5"/>
<line x1="101.30" y1="418.80" x2="1299.50" y2="418.80" stroke="#555" stroke-width="1.0" />
<rect x="125.50" y="348.80" width="11.50" height="83.20" fill="#808080" stroke="none" stroke-width="0" fill-opacity="0.72"/>
<path d="M125.50 300.70L137.00 289.20M125.50 324.30L137.00 312.80M125.50 347.90L137.00 336.40M125.50 371.50L137.00 360.00M125.50 395.10L137.00 383.60M125.50 418.70L137.00 407.20M125.50 442.30L137.00 430.80" stroke="#222" stroke-width="0.9" fill="none"/>
<line x1="125.50" y1="348.80" x2="125.50" y2="432.00" stroke="#444" stroke-width="1.4" />
<line x1="137.00" y1="348.80" x2="137.00" y2="432.00" stroke="#444" stroke-width="1.4" />
<rect x="1256.50" y="348.80" width="6.30" height="83.20" fill="#808080" stroke="none" stroke-width="0" fill-opacity="0.72"/>
<path d="M1256.50 290.20L1262.80 283.90M1256.50 313.80L1262.80 307.50M1256.50 337.40L1262.80 331.10M1256.50 361.00L1262.80 354.70M1256.50 384.60L1262.80 378.30M1256.50 408.20L1262.80 401.90M1256.50 431.80L1262.80 425.50M1256.50 455.40L1262.80 449.10" stroke="#222" stroke-width="0.9" fill="none"/>
<line x1="1256.50" y1="348.80" x2="1256.50" y2="432.00" stroke="#444" stroke-width="1.4" />
<line x1="1262.80" y1="348.80" x2="1262.80" y2="432.00" stroke="#444" stroke-width="1.4" />
<line x1="548.61" y1="348.80" x2="548.61" y2="432.00" stroke="#000" stroke-width="1.0" stroke-dasharray="2.2 1.6"/>
<line x1="585.00" y1="348.80" x2="585.00" y2="432.00" stroke="#808080" stroke-width="1.4" stroke-dasharray="5 2.6"/>
<path d="M101.0 384.1 L102.1 382.1 L103.3 381.1 L104.5 380.3 L105.7 385.8 L106.9 369.8 L108.0 387.3 L109.2 383.6 L110.4 383.8 L111.6 377.1 L112.7 385.6 L113.9 386.7 L115.1 368.1 L116.3 385.3 L117.5 376.8 L118.6 380.5 L119.8 401.3 L121.0 382.5 L122.2 375.1 L123.3 383.8 L124.5 392.6 L125.7 387.1 L126.9 376.8 L128.1 352.3 L129.2 361.1 L130.4 369.8 L131.6 371.6 L132.8 408.3 L133.9 380.3 L135.1 366.3 L136.3 355.8 L137.5 387.3 L138.7 368.1 L139.8 383.8 L141.0 390.8 L142.2 381.4 L143.4 401.3 L144.6 390.8 L145.7 397.8 L146.9 389.1 L148.1 399.6 L149.3 390.8 L150.4 394.3 L151.6 403.1 L152.8 390.8 L154.0 401.3 L155.2 387.3 L156.3 364.6 L157.5 371.6 L158.7 373.3 L159.9 378.6 L159.9 381.5 L161.9 383.0 L163.9 383.5 L165.6 370.0 L166.9 391.5 L169.4 376.5 L170.9 378.0 L172.4 383.0 L173.9 380.0 L175.9 383.5 L177.9 382.5 L180.9 395.0 L183.9 384.5 L186.9 376.5 L188.4 385.0 L189.9 386.0 L191.9 394.0 L194.3 384.5 L196.3 374.5 L197.8 400.0 L200.8 392.0 L203.3 409.0 L204.8 387.0 L205.8 402.0 L208.3 379.0 L209.8 385.0 L210.8 394.0 L212.8 388.5 L215.3 388.5 L217.8 378.5 L219.8 386.0 L220.3 395.0 L221.3 385.0 L222.3 399.0 L224.8 380.5 L228.8 379.0 L229.8 382.0 L231.3 380.0 L233.3 389.0 L236.3 374.5 L239.8 393.0 L241.3 372.0 L242.8 380.0 L243.8 383.5 L244.8 379.5 L246.8 397.0 L248.3 378.0 L249.3 396.0 L254.7 380.0 L257.2 395.0 L259.2 382.5 L261.2 393.0 L262.7 393.0 L265.7 382.5 L267.2 392.5 L269.7 379.5 L270.7 379.0 L272.7 385.0 L274.2 372.0 L276.2 385.5 L278.7 399.5 L282.2 387.0 L284.2 397.0 L286.2 375.0 L287.7 374.5 L289.2 395.5 L291.2 384.5 L293.2 384.5 L294.7 393.0 L297.2 388.0 L298.7 399.0 L299.0 397.0 L301.0 402.5 L302.5 394.0 L304.0 401.0 L304.5 432.0 L306.0 432.0 L306.8 378.0 L309.0 376.5 L310.5 385.0 L311.9 387.0 L312.9 389.0 L316.9 394.0 L319.4 384.5 L320.9 388.0 L323.9 386.5 L325.4 379.5 L326.7 387.0 L329.9 391.0 L332.4 399.5 L333.9 397.0 L335.4 387.0 L337.9 383.5 L339.9 378.0 L341.9 385.0 L342.7 390.5 L343.9 381.0 L345.4 390.5 L346.4 391.0 L347.9 380.0 L349.4 379.0 L350.7 382.5 L352.7 378.5 L353.9 385.0 L355.9 394.5 L358.4 409.0 L360.4 409.0 L362.9 385.0 L365.9 381.0 L368.4 386.0 L370.3 374.5 L371.8 383.5 L373.8 389.0 L376.8 402.5 L378.8 401.5 L380.8 402.5 L383.8 381.0 L384.8 381.5 L386.8 387.5 L389.3 383.5 L391.3 381.0 L393.3 383.0 L395.3 379.0 L397.3 387.5 L398.8 378.0 L400.8 382.5 L402.3 380.5 L404.8 387.5 L406.3 382.5 L408.3 372.5 L410.3 385.0 L412.8 372.0 L414.3 372.5 L417.8 391.0 L419.8 388.5 L422.8 378.5 L423.8 379.5 L425.8 386.5 L428.3 384.5 L430.5 375.0 L432.7 382.0 L434.6 376.0 L437.1 383.0 L439.6 374.5 L442.1 394.0 L444.6 385.5 L447.6 378.0 L449.1 380.5 L450.1 379.5 L452.1 387.5 L455.1 374.0 L457.6 395.5 L459.1 388.0 L460.1 388.0 L463.1 374.5 L465.1 381.0 L466.1 380.5 L467.6 384.5 L469.6 380.0 L471.6 394.0 L473.1 393.5 L474.6 386.5 L476.1 386.0 L478.6 370.5 L479.6 371.5 L482.1 390.0 L484.4 374.5 L486.6 382.5 L489.6 386.5 L493.6 378.0 L497.6 386.0 L502.1 373.5 L506.1 386.0 L510.1 376.0 L512.1 385.5 L514.6 379.0 L516.1 386.5 L519.1 374.5 L521.6 379.0 L522.1 375.5 L525.6 388.0 L528.1 379.0 L531.1 391.5 L532.6 382.0 L533.6 385.0 L534.6 384.5 L536.1 388.5 L537.6 380.5 L539.6 384.5 L542.1 390.5 L544.6 382.5 L547.4 368.0 L548.6 377.0 L550.3 370.5 L551.6 389.0 L553.1 381.5 L555.6 385.0 L557.6 392.5 L563.6 382.5 L566.9 389.0 L568.9 387.0 L570.9 391.0 L572.4 389.0 L574.4 402.0 L575.4 394.5 L577.9 400.0 L579.4 399.5 L582.4 390.0 L583.7 387.0 L584.9 369.0 L586.4 381.0 L589.4 399.5 L592.9 384.0 L593.9 385.0 L596.4 397.0 L597.9 396.5 L599.4 403.0 L602.4 377.0 L604.4 386.0 L604.9 384.5 L607.9 392.0 L609.9 389.0 L610.9 389.0 L611.9 382.0 L613.4 392.0 L614.1 384.0 L616.4 393.5 L617.4 393.0 L620.9 379.5 L622.9 380.0 L624.9 390.5 L625.9 383.5 L627.9 391.0 L629.4 385.0 L631.4 388.0 L633.4 383.5 L635.5 390.0 L637.0 383.5 L639.0 389.5 L643.0 377.5 L645.0 381.0 L647.0 379.5 L648.5 396.0 L651.0 379.0 L652.0 380.0 L653.5 392.0 L654.5 380.0 L659.0 384.5 L661.5 386.0 L664.0 377.5 L666.5 385.5 L669.0 385.0 L670.0 382.5 L671.0 384.5 L673.0 380.0 L674.5 381.0 L678.0 371.5 L680.5 386.0 L682.5 387.0 L684.5 383.0 L686.0 400.0 L688.5 388.5 L690.0 388.0 L691.0 391.0 L692.0 387.5 L694.0 386.5 L697.0 379.5 L698.0 379.0 L699.3 372.5 L701.0 379.0 L702.5 380.0 L705.0 394.0 L706.3 387.0 L707.3 387.0 L709.3 380.0 L710.8 381.0 L711.8 389.0 L713.3 382.0 L714.8 383.5 L716.8 382.0 L718.3 383.5 L719.8 379.0 L721.3 385.5 L722.3 383.5 L723.9 387.0 L726.4 375.0 L728.9 385.5 L729.9 378.5 L732.4 386.5 L735.4 376.5 L736.9 388.0 L737.7 379.5 L739.4 395.0 L740.4 395.0 L741.9 384.0 L743.4 384.5 L745.1 375.0 L746.1 390.5 L747.4 382.0 L748.9 383.0 L750.9 387.5 L752.9 388.5 L754.4 391.0 L756.4 382.0 L757.9 386.5 L759.6 378.5 L761.4 389.5 L762.9 385.0 L764.9 393.5 L766.4 381.0 L767.9 380.5 L769.6 377.0 L771.4 382.0 L773.9 387.0 L775.9 382.5 L778.4 388.5 L779.9 385.0 L783.0 377.0 L785.5 385.0 L787.0 382.5 L788.7 376.0 L790.5 381.0 L793.5 391.0 L796.5 381.0 L797.5 381.5 L800.5 388.5 L804.0 378.5 L809.0 388.0 L810.0 383.5 L812.5 386.0 L814.5 391.0 L817.5 379.0 L820.5 387.0 L824.0 375.0 L826.8 389.0 L829.0 383.5 L830.5 379.0 L832.5 385.0 L834.5 378.5 L836.0 384.0 L837.5 381.5 L840.0 381.5 L840.5 382.5 L842.1 374.0 L843.9 384.0 L845.9 384.0 L847.9 380.0 L850.4 386.0 L852.9 390.5 L853.9 390.0 L855.9 382.5 L857.9 382.0 L859.9 378.5 L861.2 388.0 L862.4 382.5 L863.4 385.0 L865.1 380.0 L866.4 383.0 L867.9 397.5 L869.4 384.5 L871.6 376.0 L873.9 383.0 L875.9 385.5 L877.4 381.5 L878.9 389.0 L879.9 385.0 L882.4 385.0 L883.4 383.5 L884.6 396.5 L886.4 383.0 L887.9 388.5 L889.9 380.0 L891.4 379.5 L892.9 385.0 L895.9 385.5 L897.4 382.0 L899.4 378.0 L901.8 393.0 L903.3 394.0 L905.3 396.5 L907.3 389.5 L909.8 383.0 L911.3 382.5 L913.8 386.0 L916.3 387.0 L917.5 390.5 L918.8 381.5 L920.3 387.0 L922.8 386.0 L924.8 380.0 L925.8 386.0 L927.3 389.5 L929.3 378.5 L930.8 385.0 L934.3 389.0 L935.3 387.5 L936.8 388.5 L938.6 381.5 L940.8 393.0 L942.8 392.0 L944.3 384.5 L945.3 389.0 L946.3 385.0 L950.3 392.0 L952.3 392.0 L954.3 385.5 L957.3 391.5 L959.2 385.0 L960.2 386.0 L962.2 383.5 L964.7 390.5 L966.7 383.5 L968.7 384.0 L969.7 383.0 L971.2 385.0 L973.0 380.0 L974.2 386.0 L975.2 383.0 L976.7 389.0 L978.2 397.0 L980.2 381.0 L982.2 387.0 L985.2 390.5 L986.7 381.5 L989.2 391.5 L990.2 385.0 L992.4 393.5 L993.7 388.0 L995.7 391.0 L997.2 390.5 L998.7 384.5 L1000.2 392.0 L1002.2 385.0 L1003.7 380.0 L1004.7 381.5 L1005.7 380.5 L1009.7 388.0 L1011.2 387.5 L1012.2 388.5 L1013.9 380.0 L1017.2 388.0 L1018.9 394.0 L1020.2 388.5 L1022.7 388.0 L1025.0 380.5 L1026.7 393.0 L1028.2 386.5 L1029.7 387.5 L1031.7 392.0 L1033.7 395.0 L1035.0 383.5 L1036.2 393.0 L1038.2 385.0 L1040.7 390.5 L1042.2 378.5 L1044.4 398.0 L1047.8 384.5 L1049.8 385.0 L1052.8 395.5 L1055.3 391.0 L1056.8 390.5 L1058.8 386.5 L1062.3 389.0 L1064.3 391.0 L1065.8 385.0 L1067.3 390.5 L1069.3 391.0 L1073.3 385.5 L1075.1 392.0 L1077.5 377.0 L1079.3 389.0 L1081.3 391.5 L1082.3 388.0 L1083.3 394.0 L1085.3 387.0 L1088.8 390.5 L1090.8 388.0 L1093.1 394.5 L1095.3 391.0 L1097.8 383.5 L1100.3 392.5 L1102.3 387.0 L1104.8 389.0 L1106.3 396.5 L1107.8 389.0 L1109.3 397.5 L1110.3 392.0 L1110.8 389.5 L1112.3 391.0 L1113.8 396.5 L1115.8 383.5 L1117.5 394.0 L1119.8 387.5 L1121.8 382.5 L1123.8 390.0 L1125.3 391.0 L1127.8 390.5 L1130.3 383.5 L1132.1 386.0 L1133.8 383.5 L1135.7 388.0 L1137.4 393.5 L1139.4 386.0 L1140.7 394.5 L1142.7 389.0 L1144.2 387.0 L1145.7 399.0 L1147.4 385.0 L1150.2 385.0 L1152.2 389.5 L1154.2 393.5 L1156.2 393.0 L1157.7 388.0 L1159.7 385.0 L1162.2 384.5 L1163.7 389.0 L1164.4 388.0 L1165.5 396.5 L1167.2 389.0 L1169.2 390.0 L1170.2 393.0 L1171.7 384.0 L1173.7 387.5 L1174.2 391.5 L1175.7 386.0 L1179.2 389.5 L1181.7 391.0 L1185.7 385.5 L1188.2 390.0 L1189.0 396.0 L1190.2 389.5 L1191.0 394.5 L1192.2 396.5 L1193.9 380.0 L1195.4 393.0 L1197.1 394.5 L1199.6 393.0 L1201.6 387.5 L1202.6 388.0 L1204.1 386.0 L1205.4 390.5 L1206.6 392.0 L1207.9 399.0 L1209.1 390.5 L1210.6 385.5 L1211.6 388.0 L1213.1 383.0 L1215.1 381.0 L1217.1 388.0 L1218.6 391.5 L1221.1 388.0 L1222.9 394.0 L1224.3 396.0 L1226.6 389.0 L1227.6 387.0 L1229.6 394.5 L1231.3 393.0 L1233.1 383.5 L1235.1 389.0 L1236.1 390.5 L1238.6 385.0 L1240.6 390.0 L1242.6 390.5 L1245.1 387.0 L1247.1 394.0 L1249.6 393.5 L1251.8 383.5 L1254.0 395.0 L1256.5 398.5 L1258.7 379.5 L1260.0 382.5 L1261.5 394.0 L1264.0 392.0 L1265.5 387.0 L1268.0 389.0 L1270.5 399.5 L1272.0 389.0 L1274.0 404.0 L1277.5 388.0 L1279.0 397.0 L1282.0 385.5 L1284.5 398.0 L1288.0 391.0 L1289.5 387.5 L1292.5 399.5 L1295.0 388.0 L1297.5 394.5 L1299.5 397.5 L1300.2 395.2" fill="none" stroke="#0000ff" stroke-width="1.3" stroke-linejoin="round"/>
</g>
<rect x="101.30" y="348.80" width="1198.20" height="83.20" fill="none" stroke="#3a3a3a" stroke-width="1.1" />
<line x1="104.50" y1="432.00" x2="104.50" y2="435.20" stroke="#3a3a3a" stroke-width="0.9" />
<text xml:space="preserve" class="s" x="104.50" y="446.90" font-size="9.60" fill="#111" text-anchor="middle" >3500</text>
<line x1="163.40" y1="432.00" x2="163.40" y2="435.20" stroke="#3a3a3a" stroke-width="0.9" />
<text xml:space="preserve" class="s" x="163.40" y="446.90" font-size="9.60" fill="#111" text-anchor="middle" >3600</text>
<line x1="222.30" y1="432.00" x2="222.30" y2="435.20" stroke="#3a3a3a" stroke-width="0.9" />
<text xml:space="preserve" class="s" x="222.30" y="446.90" font-size="9.60" fill="#111" text-anchor="middle" >3700</text>
<line x1="281.20" y1="432.00" x2="281.20" y2="435.20" stroke="#3a3a3a" stroke-width="0.9" />
<text xml:space="preserve" class="s" x="281.20" y="446.90" font-size="9.60" fill="#111" text-anchor="middle" >3800</text>
<line x1="340.10" y1="432.00" x2="340.10" y2="435.20" stroke="#3a3a3a" stroke-width="0.9" />
<text xml:space="preserve" class="s" x="340.10" y="446.90" font-size="9.60" fill="#111" text-anchor="middle" >3900</text>
<line x1="399.00" y1="432.00" x2="399.00" y2="435.20" stroke="#3a3a3a" stroke-width="0.9" />
<text xml:space="preserve" class="s" x="399.00" y="446.90" font-size="9.60" fill="#111" text-anchor="middle" >4000</text>
<line x1="457.90" y1="432.00" x2="457.90" y2="435.20" stroke="#3a3a3a" stroke-width="0.9" />
<text xml:space="preserve" class="s" x="457.90" y="446.90" font-size="9.60" fill="#111" text-anchor="middle" >4100</text>
<line x1="516.80" y1="432.00" x2="516.80" y2="435.20" stroke="#3a3a3a" stroke-width="0.9" />
<text xml:space="preserve" class="s" x="516.80" y="446.90" font-size="9.60" fill="#111" text-anchor="middle" >4200</text>
<line x1="575.70" y1="432.00" x2="575.70" y2="435.20" stroke="#3a3a3a" stroke-width="0.9" />
<text xml:space="preserve" class="s" x="575.70" y="446.90" font-size="9.60" fill="#111" text-anchor="middle" >4300</text>
<line x1="634.60" y1="432.00" x2="634.60" y2="435.20" stroke="#3a3a3a" stroke-width="0.9" />
<text xml:space="preserve" class="s" x="634.60" y="446.90" font-size="9.60" fill="#111" text-anchor="middle" >4400</text>
<line x1="693.50" y1="432.00" x2="693.50" y2="435.20" stroke="#3a3a3a" stroke-width="0.9" />
<text xml:space="preserve" class="s" x="693.50" y="446.90" font-size="9.60" fill="#111" text-anchor="middle" >4500</text>
<line x1="752.40" y1="432.00" x2="752.40" y2="435.20" stroke="#3a3a3a" stroke-width="0.9" />
<text xml:space="preserve" class="s" x="752.40" y="446.90" font-size="9.60" fill="#111" text-anchor="middle" >4600</text>
<line x1="811.30" y1="432.00" x2="811.30" y2="435.20" stroke="#3a3a3a" stroke-width="0.9" />
<text xml:space="preserve" class="s" x="811.30" y="446.90" font-size="9.60" fill="#111" text-anchor="middle" >4700</text>
<line x1="870.20" y1="432.00" x2="870.20" y2="435.20" stroke="#3a3a3a" stroke-width="0.9" />
<text xml:space="preserve" class="s" x="870.20" y="446.90" font-size="9.60" fill="#111" text-anchor="middle" >4800</text>
<line x1="929.10" y1="432.00" x2="929.10" y2="435.20" stroke="#3a3a3a" stroke-width="0.9" />
<text xml:space="preserve" class="s" x="929.10" y="446.90" font-size="9.60" fill="#111" text-anchor="middle" >4900</text>
<line x1="988.00" y1="432.00" x2="988.00" y2="435.20" stroke="#3a3a3a" stroke-width="0.9" />
<text xml:space="preserve" class="s" x="988.00" y="446.90" font-size="9.60" fill="#111" text-anchor="middle" >5000</text>
<line x1="1046.90" y1="432.00" x2="1046.90" y2="435.20" stroke="#3a3a3a" stroke-width="0.9" />
<text xml:space="preserve" class="s" x="1046.90" y="446.90" font-size="9.60" fill="#111" text-anchor="middle" >5100</text>
<line x1="1105.80" y1="432.00" x2="1105.80" y2="435.20" stroke="#3a3a3a" stroke-width="0.9" />
<text xml:space="preserve" class="s" x="1105.80" y="446.90" font-size="9.60" fill="#111" text-anchor="middle" >5200</text>
<line x1="1164.70" y1="432.00" x2="1164.70" y2="435.20" stroke="#3a3a3a" stroke-width="0.9" />
<text xml:space="preserve" class="s" x="1164.70" y="446.90" font-size="9.60" fill="#111" text-anchor="middle" >5300</text>
<line x1="1223.60" y1="432.00" x2="1223.60" y2="435.20" stroke="#3a3a3a" stroke-width="0.9" />
<text xml:space="preserve" class="s" x="1223.60" y="446.90" font-size="9.60" fill="#111" text-anchor="middle" >5400</text>
<line x1="1282.50" y1="432.00" x2="1282.50" y2="435.20" stroke="#3a3a3a" stroke-width="0.9" />
<text xml:space="preserve" class="s" x="1282.50" y="446.90" font-size="9.60" fill="#111" text-anchor="middle" >5500</text>
<line x1="98.10" y1="418.80" x2="101.30" y2="418.80" stroke="#3a3a3a" stroke-width="0.9" />
<text xml:space="preserve" class="s" x="95.00" y="422.40" font-size="9.60" fill="#111" text-anchor="end" >0</text>
<line x1="98.10" y1="383.80" x2="101.30" y2="383.80" stroke="#3a3a3a" stroke-width="0.9" />
<text xml:space="preserve" class="s" x="95.00" y="387.40" font-size="9.60" fill="#111" text-anchor="end" >10</text>
<line x1="98.10" y1="348.80" x2="101.30" y2="348.80" stroke="#3a3a3a" stroke-width="0.9" />
<text xml:space="preserve" class="s" x="95.00" y="352.40" font-size="9.60" fill="#111" text-anchor="end" >20</text>
<text class="s" xml:space="preserve" font-size="9.6" text-anchor="end" fill="#ff00ff" fill-opacity="1" transform="translate(120.60,348.80) rotate(90)">CII  {</text>
<text class="s" xml:space="preserve" font-size="9.6" text-anchor="end" fill="#ff0000" fill-opacity="1" transform="translate(172.60,348.80) rotate(90)">OVI  {</text>
<text class="s" xml:space="preserve" font-size="9.6" text-anchor="end" fill="#800080" fill-opacity="0.9" transform="translate(193.60,348.80) rotate(90)">HeII {</text>
<text class="s" xml:space="preserve" font-size="9.6" text-anchor="end" fill="#8a2be2" fill-opacity="0.85" transform="translate(300.20,348.80) rotate(90)">SiIV {</text>
<text class="s" xml:space="preserve" font-size="9.6" text-anchor="end" fill="#87ceeb" fill-opacity="0.6" transform="translate(393.60,348.80) rotate(90)">OII  {</text>
<text class="s" xml:space="preserve" font-size="9.6" text-anchor="end" fill="#ffa500" fill-opacity="1" transform="translate(406.60,348.80) rotate(90)">CIV  {</text>
<text class="s" xml:space="preserve" font-size="9.6" text-anchor="end" fill="#87ceeb" fill-opacity="0.6" transform="translate(415.10,348.80) rotate(90)">OII  {</text>
<text class="s" xml:space="preserve" font-size="9.6" text-anchor="end" fill="#ff0000" fill-opacity="1" transform="translate(597.10,348.80) rotate(90)">NV   {</text>
<text class="s" xml:space="preserve" font-size="9.6" text-anchor="end" fill="#ff0000" fill-opacity="1" transform="translate(644.10,348.80) rotate(90)">SiII {</text>
<text class="s" xml:space="preserve" font-size="9.6" text-anchor="end" fill="#8a2be2" fill-opacity="0.8" transform="translate(692.60,348.80) rotate(90)">HeII {</text>
<text class="s" xml:space="preserve" font-size="9.6" text-anchor="end" fill="#87ceeb" fill-opacity="0.55" transform="translate(780.70,348.80) rotate(90)">Hγ {</text>
<text class="s" xml:space="preserve" font-size="9.6" text-anchor="end" fill="#87ceeb" fill-opacity="0.55" transform="translate(806.20,348.80) rotate(90)">Hγ {</text>
<text class="s" xml:space="preserve" font-size="9.6" text-anchor="end" fill="#ff0000" fill-opacity="1" transform="translate(920.60,348.80) rotate(90)">SiIV {</text>
<text class="s" xml:space="preserve" font-size="9.6" text-anchor="end" fill="#008000" fill-opacity="1" transform="translate(957.70,348.80) rotate(90)">Hγ {</text>
<text class="s" xml:space="preserve" font-size="9.6" text-anchor="end" fill="#800080" fill-opacity="1" transform="translate(1090.80,348.80) rotate(90)">CII  {</text>
<text class="s" xml:space="preserve" font-size="9.6" text-anchor="end" fill="#87ceeb" fill-opacity="0.65" transform="translate(1109.20,348.80) rotate(90)">Hβ {</text>
<text class="s" xml:space="preserve" font-size="9.6" text-anchor="end" fill="#8a2be2" fill-opacity="1" transform="translate(1126.40,348.80) rotate(90)">CIII {</text>
<text class="s" xml:space="preserve" font-size="9.6" text-anchor="end" fill="#87ceeb" fill-opacity="0.65" transform="translate(1136.60,348.80) rotate(90)">Hβ {</text>
<text class="s" xml:space="preserve" font-size="9.6" text-anchor="end" fill="#87ceeb" fill-opacity="0.7" transform="translate(1170.80,348.80) rotate(90)">OIII {</text>
<text class="s" xml:space="preserve" font-size="9.6" text-anchor="end" fill="#87ceeb" fill-opacity="0.7" transform="translate(1198.10,348.80) rotate(90)">OIII {</text>
<text class="s" xml:space="preserve" font-size="9.6" text-anchor="end" fill="#ff0000" fill-opacity="1" transform="translate(1233.00,348.80) rotate(90)">CIV  {</text>
<text class="s" xml:space="preserve" font-size="9.6" text-anchor="end" fill="#ffa500" fill-opacity="0.9" transform="translate(175.10,306.20) rotate(90)">SiIV {</text>
<text class="s" xml:space="preserve" font-size="9.6" text-anchor="end" fill="#ffa500" fill-opacity="0.9" transform="translate(955.60,306.20) rotate(90)">CIII {</text>
<text class="s" xml:space="preserve" font-size="9.6" text-anchor="end" fill="#87ceeb" fill-opacity="0.7" transform="translate(1200.50,306.20) rotate(90)">OIII {</text>
<text class="s" xml:space="preserve" font-size="9.6" text-anchor="end" fill="#87ceeb" fill-opacity="0.7" transform="translate(1229.50,306.20) rotate(90)">OIII {</text>
<text xml:space="preserve" class="s" x="105.00" y="346.20" font-size="9.60" fill="#111" >e</text>
<text xml:space="preserve" class="s" x="111.21" y="342.80" font-size="6.72" fill="#111" >−17</text>
<text xml:space="preserve" class="s" x="125.79" y="346.20" font-size="9.60" fill="#111" >x2</text>
<text xml:space="preserve" class="s" x="137.58" y="346.20" font-size="9.60" fill="#111" font-style="italic" >Å</text>
<rect x="480.00" y="450.00" width="16.90" height="6.70" fill="#ff0000" />
<text xml:space="preserve" class="s" x="503.70" y="456.30" font-size="7.57" fill="#111" >Ly</text>
<text xml:space="preserve" class="s" x="511.70" y="456.30" font-size="7.57" fill="#111" font-style="italic" >α</text>
<rect x="534.30" y="450.00" width="16.90" height="6.70" fill="#008000" />
<text xml:space="preserve" class="s" x="558.00" y="456.30" font-size="7.57" fill="#111" >OII</text>
<rect x="586.30" y="450.00" width="16.90" height="6.70" fill="#8a2be2" />
<text xml:space="preserve" class="s" x="610.00" y="456.30" font-size="7.57" fill="#111" >CIV</text>
<rect x="641.30" y="450.00" width="16.90" height="6.70" fill="#800080" />
<text xml:space="preserve" class="s" x="665.00" y="456.30" font-size="7.57" fill="#111" >CIII</text>
<rect x="693.30" y="450.00" width="16.90" height="6.70" fill="#ff00ff" />
<text xml:space="preserve" class="s" x="717.00" y="456.30" font-size="7.57" fill="#111" >MgII</text>
<rect x="749.00" y="450.00" width="16.90" height="6.70" fill="#ffa500" />
<text xml:space="preserve" class="s" x="772.70" y="456.30" font-size="7.57" fill="#111" >HeII</text>
<rect x="803.80" y="450.00" width="16.90" height="6.70" fill="#87ceeb" />
<text xml:space="preserve" class="s" x="827.50" y="456.30" font-size="7.57" fill="#111" >(K)CaII</text>
<rect x="869.50" y="450.00" width="16.90" height="6.70" fill="#87ceeb" />
<text xml:space="preserve" class="s" x="893.20" y="456.30" font-size="7.57" fill="#111" >(H)CaII</text>
<path fill="#000000" d="M127.8 590.2h16.6v4.2h-16.6zM123.6 594.3h24.8v4.2h-24.8zM119.5 598.4h33.1v4.2h-33.1zM119.5 602.5h33.1v4.2h-33.1zM115.4 606.6h41.3v4.2h-41.3zM119.5 610.7h37.2v4.2h-37.2zM119.5 614.8h33.1v4.2h-33.1zM119.5 618.9h33.1v4.2h-33.1zM123.6 623.0h24.8v4.2h-24.8zM127.8 627.1h16.6v4.2h-16.6z"/><path fill="#0b0b0b" d="M115.4 602.5h4.2v4.2h-4.2zM115.4 610.7h4.2v4.2h-4.2zM152.5 614.8h4.2v4.2h-4.2z"/><path fill="#161616" d="M148.4 594.3h4.2v4.2h-4.2zM152.5 602.5h4.2v4.2h-4.2z"/><path fill="#212121" d="M115.4 614.8h4.2v4.2h-4.2zM148.4 623.0h4.2v4.2h-4.2z"/><path fill="#373737" d="M144.2 590.2h4.2v4.2h-4.2zM119.5 594.3h4.2v4.2h-4.2zM119.5 623.0h4.2v4.2h-4.2z"/><path fill="#434343" d="M123.6 590.2h4.2v4.2h-4.2zM152.5 598.4h4.2v4.2h-4.2z"/><path fill="#4e4e4e" d="M115.4 598.4h4.2v4.2h-4.2zM115.4 618.9h4.2v4.2h-4.2zM152.5 618.9h4.2v4.2h-4.2zM123.6 627.1h4.2v4.2h-4.2zM144.2 627.1h4.2v4.2h-4.2z"/><path fill="#595959" d="M136.0 586.1h4.2v4.2h-4.2z"/><path fill="#646464" d="M131.9 586.1h4.2v4.2h-4.2zM156.6 610.7h4.2v4.2h-4.2zM131.9 631.2h12.5v4.2h-12.5z"/><path fill="#6f6f6f" d="M127.8 586.1h4.2v4.2h-4.2zM140.1 586.1h4.2v4.2h-4.2zM152.5 594.3h4.2v4.2h-4.2zM111.3 606.6h4.2v4.2h-4.2zM111.3 610.7h4.2v4.2h-4.2z"/><path fill="#7a7a7a" d="M148.4 590.2h4.2v4.2h-4.2zM115.4 594.3h4.2v4.2h-4.2zM156.6 606.6h4.2v4.2h-4.2zM156.6 614.8h4.2v4.2h-4.2zM148.4 627.1h4.2v4.2h-4.2z"/><path fill="#858585" d="M119.5 590.2h4.2v4.2h-4.2zM111.3 602.5h4.2v4.2h-4.2zM156.6 602.5h4.2v4.2h-4.2zM111.3 614.8h4.2v4.2h-4.2zM115.4 623.0h4.2v4.2h-4.2zM119.5 627.1h4.2v4.2h-4.2zM127.8 631.2h4.2v4.2h-4.2z"/><path fill="#909090" d="M144.2 586.1h4.2v4.2h-4.2zM152.5 623.0h4.2v4.2h-4.2zM123.6 631.2h4.2v4.2h-4.2z"/><path fill="#9b9b9b" d="M123.6 586.1h4.2v4.2h-4.2zM111.3 598.4h4.2v4.2h-4.2zM156.6 598.4h4.2v4.2h-4.2zM144.2 631.2h8.3v4.2h-8.3zM131.9 635.3h4.2v4.2h-4.2z"/><path fill="#a6a6a6" d="M136.0 582.0h4.2v4.2h-4.2zM144.2 582.0h4.2v4.2h-4.2zM119.5 586.1h4.2v4.2h-4.2zM148.4 586.1h4.2v4.2h-4.2zM115.4 590.2h4.2v4.2h-4.2zM152.5 590.2h4.2v4.2h-4.2zM160.7 606.6h4.2v4.2h-4.2zM156.6 618.9h8.3v4.2h-8.3zM111.3 623.0h4.2v4.2h-4.2zM156.6 623.0h4.2v4.2h-4.2zM127.8 635.3h4.2v4.2h-4.2zM136.0 635.3h4.2v4.2h-4.2z"/><path fill="#b1b1b1" d="M123.6 582.0h12.5v4.2h-12.5zM140.1 582.0h4.2v4.2h-4.2zM111.3 594.3h4.2v4.2h-4.2zM156.6 594.3h4.2v4.2h-4.2zM160.7 598.4h4.2v4.2h-4.2zM160.7 602.5h4.2v4.2h-4.2zM103.0 610.7h8.3v4.2h-8.3zM160.7 614.8h4.2v4.2h-4.2zM111.3 618.9h4.2v4.2h-4.2zM115.4 627.1h4.2v4.2h-4.2zM152.5 627.1h4.2v4.2h-4.2zM119.5 631.2h4.2v4.2h-4.2zM140.1 635.3h4.2v4.2h-4.2z"/><path fill="#bcbcbc" d="M123.6 577.9h4.2v4.2h-4.2zM148.4 577.9h4.2v4.2h-4.2zM119.5 582.0h4.2v4.2h-4.2zM148.4 582.0h8.3v4.2h-8.3zM111.3 586.1h4.2v4.2h-4.2zM111.3 590.2h4.2v4.2h-4.2zM156.6 590.2h4.2v4.2h-4.2zM107.1 598.4h4.2v4.2h-4.2zM107.1 602.5h4.2v4.2h-4.2zM107.1 606.6h4.2v4.2h-4.2zM160.7 610.7h8.3v4.2h-8.3zM94.8 614.8h4.2v4.2h-4.2zM107.1 614.8h4.2v4.2h-4.2zM164.9 614.8h4.2v4.2h-4.2zM103.0 618.9h8.3v4.2h-8.3zM103.0 623.0h8.3v4.2h-8.3zM111.3 627.1h4.2v4.2h-4.2zM115.4 631.2h4.2v4.2h-4.2zM152.5 631.2h4.2v4.2h-4.2zM123.6 635.3h4.2v4.2h-4.2zM144.2 635.3h8.3v4.2h-8.3zM127.8 639.4h4.2v4.2h-4.2zM136.0 639.4h4.2v4.2h-4.2z"/><path fill="#c8c8c8" d="M82.4 549.2h4.2v4.2h-4.2zM156.6 549.2h4.2v4.2h-4.2zM131.9 561.5h4.2v4.2h-4.2zM140.1 565.6h4.2v4.2h-4.2zM156.6 565.6h4.2v4.2h-4.2zM169.0 565.6h4.2v4.2h-4.2zM140.1 573.8h4.2v4.2h-4.2zM115.4 577.9h8.3v4.2h-8.3zM136.0 577.9h4.2v4.2h-4.2zM144.2 577.9h4.2v4.2h-4.2zM107.1 582.0h4.2v4.2h-4.2zM115.4 582.0h4.2v4.2h-4.2zM115.4 586.1h4.2v4.2h-4.2zM152.5 586.1h8.3v4.2h-8.3zM189.6 586.1h4.2v4.2h-4.2zM98.9 590.2h4.2v4.2h-4.2zM160.7 590.2h4.2v4.2h-4.2zM107.1 594.3h4.2v4.2h-4.2zM173.1 594.3h4.2v4.2h-4.2zM94.8 598.4h4.2v4.2h-4.2zM103.0 598.4h4.2v4.2h-4.2zM103.0 602.5h4.2v4.2h-4.2zM164.9 602.5h4.2v4.2h-4.2zM90.7 606.6h4.2v4.2h-4.2zM103.0 606.6h4.2v4.2h-4.2zM164.9 606.6h4.2v4.2h-4.2zM169.0 610.7h4.2v4.2h-4.2zM181.3 610.7h4.2v4.2h-4.2zM74.2 614.8h4.2v4.2h-4.2zM98.9 614.8h8.3v4.2h-8.3zM94.8 618.9h4.2v4.2h-4.2zM164.9 618.9h4.2v4.2h-4.2zM173.1 618.9h4.2v4.2h-4.2zM160.7 623.0h4.2v4.2h-4.2zM156.6 627.1h4.2v4.2h-4.2zM177.2 627.1h4.2v4.2h-4.2zM107.1 631.2h8.3v4.2h-8.3zM156.6 631.2h4.2v4.2h-4.2zM90.7 635.3h4.2v4.2h-4.2zM115.4 635.3h8.3v4.2h-8.3zM193.7 635.3h4.2v4.2h-4.2zM119.5 639.4h4.2v4.2h-4.2zM144.2 639.4h8.3v4.2h-8.3zM156.6 639.4h8.3v4.2h-8.3zM185.5 639.4h4.2v4.2h-4.2zM123.6 643.5h8.3v4.2h-8.3zM140.1 643.5h4.2v4.2h-4.2zM127.8 647.6h4.2v4.2h-4.2zM136.0 647.6h4.2v4.2h-4.2zM144.2 647.6h4.2v4.2h-4.2zM152.5 647.6h4.2v4.2h-4.2zM136.0 655.8h4.2v4.2h-4.2zM140.1 664.0h4.2v4.2h-4.2zM189.6 664.0h4.2v4.2h-4.2zM160.7 668.1h4.2v4.2h-4.2z"/><path fill="#d3d3d3" d="M86.5 532.8h4.2v4.2h-4.2zM181.3 532.8h4.2v4.2h-4.2zM202.0 532.8h4.2v4.2h-4.2zM136.0 536.9h4.2v4.2h-4.2zM156.6 536.9h4.2v4.2h-4.2zM197.8 536.9h4.2v4.2h-4.2zM206.1 536.9h4.2v4.2h-4.2zM74.2 541.0h4.2v4.2h-4.2zM111.3 541.0h4.2v4.2h-4.2zM185.5 541.0h12.5v4.2h-12.5zM70.0 545.1h4.2v4.2h-4.2zM78.3 545.1h4.2v4.2h-4.2zM140.1 545.1h4.2v4.2h-4.2zM156.6 545.1h4.2v4.2h-4.2zM185.5 545.1h4.2v4.2h-4.2zM214.3 545.1h4.2v4.2h-4.2zM90.7 549.2h4.2v4.2h-4.2zM131.9 549.2h4.2v4.2h-4.2zM152.5 549.2h4.2v4.2h-4.2zM181.3 549.2h4.2v4.2h-4.2zM74.2 553.3h12.5v4.2h-12.5zM107.1 553.3h4.2v4.2h-4.2zM119.5 553.3h12.5v4.2h-12.5zM160.7 553.3h8.3v4.2h-8.3zM70.0 557.4h4.2v4.2h-4.2zM140.1 557.4h4.2v4.2h-4.2zM148.4 557.4h4.2v4.2h-4.2zM189.6 557.4h4.2v4.2h-4.2zM206.1 557.4h12.5v4.2h-12.5zM148.4 561.5h4.2v4.2h-4.2zM164.9 561.5h4.2v4.2h-4.2zM181.3 561.5h8.3v4.2h-8.3zM193.7 561.5h4.2v4.2h-4.2zM78.3 565.6h8.3v4.2h-8.3zM131.9 565.6h4.2v4.2h-4.2zM164.9 565.6h4.2v4.2h-4.2zM181.3 565.6h4.2v4.2h-4.2zM197.8 565.6h4.2v4.2h-4.2zM214.3 565.6h4.2v4.2h-4.2zM78.3 569.7h4.2v4.2h-4.2zM115.4 569.7h4.2v4.2h-4.2zM127.8 569.7h4.2v4.2h-4.2zM144.2 569.7h8.3v4.2h-8.3zM156.6 569.7h4.2v4.2h-4.2zM197.8 569.7h4.2v4.2h-4.2zM82.4 573.8h4.2v4.2h-4.2zM107.1 573.8h4.2v4.2h-4.2zM119.5 573.8h16.6v4.2h-16.6zM144.2 573.8h4.2v4.2h-4.2zM156.6 573.8h4.2v4.2h-4.2zM169.0 573.8h8.3v4.2h-8.3zM210.2 573.8h8.3v4.2h-8.3zM82.4 577.9h4.2v4.2h-4.2zM107.1 577.9h4.2v4.2h-4.2zM127.8 577.9h8.3v4.2h-8.3zM140.1 577.9h4.2v4.2h-4.2zM152.5 577.9h4.2v4.2h-4.2zM160.7 577.9h4.2v4.2h-4.2zM169.0 577.9h4.2v4.2h-4.2zM185.5 577.9h4.2v4.2h-4.2zM214.3 577.9h4.2v4.2h-4.2zM94.8 582.0h4.2v4.2h-4.2zM111.3 582.0h4.2v4.2h-4.2zM156.6 582.0h12.5v4.2h-12.5zM177.2 582.0h4.2v4.2h-4.2zM82.4 586.1h4.2v4.2h-4.2zM160.7 586.1h4.2v4.2h-4.2zM193.7 586.1h4.2v4.2h-4.2zM82.4 590.2h4.2v4.2h-4.2zM90.7 590.2h4.2v4.2h-4.2zM164.9 590.2h4.2v4.2h-4.2zM173.1 590.2h4.2v4.2h-4.2zM181.3 590.2h4.2v4.2h-4.2zM189.6 590.2h8.3v4.2h-8.3zM202.0 590.2h4.2v4.2h-4.2zM214.3 590.2h4.2v4.2h-4.2zM98.9 594.3h4.2v4.2h-4.2zM160.7 594.3h4.2v4.2h-4.2zM181.3 594.3h4.2v4.2h-4.2zM197.8 594.3h4.2v4.2h-4.2zM214.3 594.3h4.2v4.2h-4.2zM82.4 598.4h4.2v4.2h-4.2zM90.7 598.4h4.2v4.2h-4.2zM164.9 598.4h4.2v4.2h-4.2zM173.1 598.4h4.2v4.2h-4.2zM185.5 598.4h4.2v4.2h-4.2zM197.8 598.4h4.2v4.2h-4.2zM70.0 602.5h4.2v4.2h-4.2zM86.5 602.5h4.2v4.2h-4.2zM94.8 602.5h4.2v4.2h-4.2zM169.0 602.5h8.3v4.2h-8.3zM74.2 606.6h4.2v4.2h-4.2zM82.4 606.6h4.2v4.2h-4.2zM98.9 606.6h4.2v4.2h-4.2zM185.5 606.6h4.2v4.2h-4.2zM197.8 606.6h8.3v4.2h-8.3zM86.5 610.7h4.2v4.2h-4.2zM98.9 610.7h4.2v4.2h-4.2zM173.1 610.7h4.2v4.2h-4.2zM210.2 610.7h8.3v4.2h-8.3zM169.0 614.8h8.3v4.2h-8.3zM185.5 614.8h4.2v4.2h-4.2zM210.2 614.8h8.3v4.2h-8.3zM98.9 618.9h4.2v4.2h-4.2zM177.2 618.9h4.2v4.2h-4.2zM193.7 618.9h4.2v4.2h-4.2zM210.2 618.9h4.2v4.2h-4.2zM78.3 623.0h8.3v4.2h-8.3zM94.8 623.0h8.3v4.2h-8.3zM164.9 623.0h12.5v4.2h-12.5zM214.3 623.0h4.2v4.2h-4.2zM70.0 627.1h4.2v4.2h-4.2zM82.4 627.1h4.2v4.2h-4.2zM107.1 627.1h4.2v4.2h-4.2zM160.7 627.1h12.5v4.2h-12.5zM185.5 627.1h4.2v4.2h-4.2zM197.8 627.1h4.2v4.2h-4.2zM206.1 627.1h4.2v4.2h-4.2zM82.4 631.2h4.2v4.2h-4.2zM177.2 631.2h4.2v4.2h-4.2zM197.8 631.2h4.2v4.2h-4.2zM214.3 631.2h4.2v4.2h-4.2zM82.4 635.3h8.3v4.2h-8.3zM94.8 635.3h12.5v4.2h-12.5zM152.5 635.3h8.3v4.2h-8.3zM169.0 635.3h8.3v4.2h-8.3zM185.5 635.3h8.3v4.2h-8.3zM202.0 635.3h4.2v4.2h-4.2zM210.2 635.3h4.2v4.2h-4.2zM98.9 639.4h4.2v4.2h-4.2zM111.3 639.4h4.2v4.2h-4.2zM123.6 639.4h4.2v4.2h-4.2zM131.9 639.4h4.2v4.2h-4.2zM140.1 639.4h4.2v4.2h-4.2zM152.5 639.4h4.2v4.2h-4.2zM164.9 639.4h4.2v4.2h-4.2zM181.3 639.4h4.2v4.2h-4.2zM210.2 639.4h4.2v4.2h-4.2zM131.9 643.5h4.2v4.2h-4.2zM144.2 643.5h12.5v4.2h-12.5zM164.9 643.5h4.2v4.2h-4.2zM181.3 643.5h4.2v4.2h-4.2zM82.4 647.6h8.3v4.2h-8.3zM115.4 647.6h4.2v4.2h-4.2zM123.6 647.6h4.2v4.2h-4.2zM140.1 647.6h4.2v4.2h-4.2zM148.4 647.6h4.2v4.2h-4.2zM160.7 647.6h4.2v4.2h-4.2zM173.1 647.6h4.2v4.2h-4.2zM181.3 647.6h4.2v4.2h-4.2zM189.6 647.6h4.2v4.2h-4.2zM197.8 647.6h4.2v4.2h-4.2zM214.3 647.6h4.2v4.2h-4.2zM107.1 651.7h12.5v4.2h-12.5zM123.6 651.7h4.2v4.2h-4.2zM136.0 651.7h4.2v4.2h-4.2zM144.2 651.7h8.3v4.2h-8.3zM156.6 651.7h4.2v4.2h-4.2zM169.0 651.7h4.2v4.2h-4.2zM193.7 651.7h4.2v4.2h-4.2zM78.3 655.8h4.2v4.2h-4.2zM127.8 655.8h4.2v4.2h-4.2zM144.2 655.8h4.2v4.2h-4.2zM169.0 655.8h4.2v4.2h-4.2zM177.2 655.8h4.2v4.2h-4.2zM206.1 655.8h4.2v4.2h-4.2zM74.2 659.9h4.2v4.2h-4.2zM115.4 659.9h4.2v4.2h-4.2zM148.4 659.9h4.2v4.2h-4.2zM156.6 659.9h4.2v4.2h-4.2zM164.9 659.9h8.3v4.2h-8.3zM181.3 659.9h4.2v4.2h-4.2zM148.4 664.0h8.3v4.2h-8.3zM210.2 664.0h4.2v4.2h-4.2zM70.0 668.1h4.2v4.2h-4.2zM107.1 668.1h4.2v4.2h-4.2zM181.3 668.1h4.2v4.2h-4.2zM103.0 672.2h4.2v4.2h-4.2zM123.6 672.2h4.2v4.2h-4.2zM144.2 672.2h8.3v4.2h-8.3zM210.2 672.2h4.2v4.2h-4.2zM90.7 676.3h4.2v4.2h-4.2zM98.9 676.3h4.2v4.2h-4.2zM107.1 676.3h4.2v4.2h-4.2zM119.5 676.3h4.2v4.2h-4.2zM136.0 676.3h4.2v4.2h-4.2zM185.5 676.3h4.2v4.2h-4.2z"/><path fill="#dedede" d="M70.0 532.8h8.3v4.2h-8.3zM82.4 532.8h4.2v4.2h-4.2zM90.7 532.8h8.3v4.2h-8.3zM103.0 532.8h4.2v4.2h-4.2zM123.6 532.8h4.2v4.2h-4.2zM136.0 532.8h4.2v4.2h-4.2zM144.2 532.8h4.2v4.2h-4.2zM152.5 532.8h4.2v4.2h-4.2zM160.7 532.8h4.2v4.2h-4.2zM177.2 532.8h4.2v4.2h-4.2zM189.6 532.8h8.3v4.2h-8.3zM214.3 532.8h4.2v4.2h-4.2zM70.0 536.9h8.3v4.2h-8.3zM82.4 536.9h4.2v4.2h-4.2zM90.7 536.9h20.7v4.2h-20.7zM119.5 536.9h16.6v4.2h-16.6zM140.1 536.9h8.3v4.2h-8.3zM152.5 536.9h4.2v4.2h-4.2zM164.9 536.9h4.2v4.2h-4.2zM173.1 536.9h4.2v4.2h-4.2zM181.3 536.9h16.6v4.2h-16.6zM82.4 541.0h4.2v4.2h-4.2zM90.7 541.0h4.2v4.2h-4.2zM98.9 541.0h12.5v4.2h-12.5zM115.4 541.0h16.6v4.2h-16.6zM144.2 541.0h4.2v4.2h-4.2zM164.9 541.0h4.2v4.2h-4.2zM177.2 541.0h8.3v4.2h-8.3zM197.8 541.0h16.6v4.2h-16.6zM74.2 545.1h4.2v4.2h-4.2zM86.5 545.1h4.2v4.2h-4.2zM98.9 545.1h4.2v4.2h-4.2zM107.1 545.1h4.2v4.2h-4.2zM115.4 545.1h4.2v4.2h-4.2zM127.8 545.1h4.2v4.2h-4.2zM136.0 545.1h4.2v4.2h-4.2zM144.2 545.1h12.5v4.2h-12.5zM169.0 545.1h4.2v4.2h-4.2zM177.2 545.1h8.3v4.2h-8.3zM193.7 545.1h8.3v4.2h-8.3zM210.2 545.1h4.2v4.2h-4.2zM70.0 549.2h12.5v4.2h-12.5zM86.5 549.2h4.2v4.2h-4.2zM98.9 549.2h4.2v4.2h-4.2zM107.1 549.2h24.8v4.2h-24.8zM144.2 549.2h4.2v4.2h-4.2zM160.7 549.2h20.7v4.2h-20.7zM185.5 549.2h4.2v4.2h-4.2zM210.2 549.2h4.2v4.2h-4.2zM70.0 553.3h4.2v4.2h-4.2zM86.5 553.3h8.3v4.2h-8.3zM103.0 553.3h4.2v4.2h-4.2zM111.3 553.3h8.3v4.2h-8.3zM140.1 553.3h20.7v4.2h-20.7zM173.1 553.3h4.2v4.2h-4.2zM181.3 553.3h16.6v4.2h-16.6zM206.1 553.3h8.3v4.2h-8.3zM90.7 557.4h4.2v4.2h-4.2zM98.9 557.4h4.2v4.2h-4.2zM107.1 557.4h4.2v4.2h-4.2zM115.4 557.4h16.6v4.2h-16.6zM144.2 557.4h4.2v4.2h-4.2zM160.7 557.4h4.2v4.2h-4.2zM185.5 557.4h4.2v4.2h-4.2zM193.7 557.4h8.3v4.2h-8.3zM70.0 561.5h49.6v4.2h-49.6zM136.0 561.5h4.2v4.2h-4.2zM144.2 561.5h4.2v4.2h-4.2zM152.5 561.5h4.2v4.2h-4.2zM160.7 561.5h4.2v4.2h-4.2zM169.0 561.5h4.2v4.2h-4.2zM177.2 561.5h4.2v4.2h-4.2zM189.6 561.5h4.2v4.2h-4.2zM210.2 561.5h8.3v4.2h-8.3zM70.0 565.6h8.3v4.2h-8.3zM94.8 565.6h4.2v4.2h-4.2zM103.0 565.6h8.3v4.2h-8.3zM123.6 565.6h8.3v4.2h-8.3zM136.0 565.6h4.2v4.2h-4.2zM144.2 565.6h12.5v4.2h-12.5zM173.1 565.6h8.3v4.2h-8.3zM185.5 565.6h12.5v4.2h-12.5zM206.1 565.6h8.3v4.2h-8.3zM70.0 569.7h8.3v4.2h-8.3zM82.4 569.7h4.2v4.2h-4.2zM90.7 569.7h12.5v4.2h-12.5zM111.3 569.7h4.2v4.2h-4.2zM119.5 569.7h8.3v4.2h-8.3zM131.9 569.7h12.5v4.2h-12.5zM152.5 569.7h4.2v4.2h-4.2zM160.7 569.7h4.2v4.2h-4.2zM173.1 569.7h8.3v4.2h-8.3zM189.6 569.7h8.3v4.2h-8.3zM202.0 569.7h4.2v4.2h-4.2zM210.2 569.7h4.2v4.2h-4.2zM70.0 573.8h8.3v4.2h-8.3zM86.5 573.8h4.2v4.2h-4.2zM94.8 573.8h4.2v4.2h-4.2zM111.3 573.8h4.2v4.2h-4.2zM136.0 573.8h4.2v4.2h-4.2zM148.4 573.8h8.3v4.2h-8.3zM160.7 573.8h8.3v4.2h-8.3zM177.2 573.8h12.5v4.2h-12.5zM193.7 573.8h8.3v4.2h-8.3zM206.1 573.8h4.2v4.2h-4.2zM86.5 577.9h8.3v4.2h-8.3zM98.9 577.9h8.3v4.2h-8.3zM111.3 577.9h4.2v4.2h-4.2zM164.9 577.9h4.2v4.2h-4.2zM173.1 577.9h4.2v4.2h-4.2zM181.3 577.9h4.2v4.2h-4.2zM189.6 577.9h8.3v4.2h-8.3zM202.0 577.9h12.5v4.2h-12.5zM70.0 582.0h4.2v4.2h-4.2zM78.3 582.0h4.2v4.2h-4.2zM98.9 582.0h8.3v4.2h-8.3zM169.0 582.0h8.3v4.2h-8.3zM185.5 582.0h4.2v4.2h-4.2zM202.0 582.0h16.6v4.2h-16.6zM74.2 586.1h8.3v4.2h-8.3zM86.5 586.1h4.2v4.2h-4.2zM94.8 586.1h16.6v4.2h-16.6zM164.9 586.1h8.3v4.2h-8.3zM177.2 586.1h4.2v4.2h-4.2zM206.1 586.1h4.2v4.2h-4.2zM214.3 586.1h4.2v4.2h-4.2zM78.3 590.2h4.2v4.2h-4.2zM86.5 590.2h4.2v4.2h-4.2zM94.8 590.2h4.2v4.2h-4.2zM103.0 590.2h8.3v4.2h-8.3zM169.0 590.2h4.2v4.2h-4.2zM177.2 590.2h4.2v4.2h-4.2zM185.5 590.2h4.2v4.2h-4.2zM70.0 594.3h4.2v4.2h-4.2zM78.3 594.3h8.3v4.2h-8.3zM90.7 594.3h4.2v4.2h-4.2zM103.0 594.3h4.2v4.2h-4.2zM164.9 594.3h8.3v4.2h-8.3zM177.2 594.3h4.2v4.2h-4.2zM185.5 594.3h8.3v4.2h-8.3zM206.1 594.3h4.2v4.2h-4.2zM70.0 598.4h8.3v4.2h-8.3zM86.5 598.4h4.2v4.2h-4.2zM98.9 598.4h4.2v4.2h-4.2zM169.0 598.4h4.2v4.2h-4.2zM177.2 598.4h4.2v4.2h-4.2zM193.7 598.4h4.2v4.2h-4.2zM202.0 598.4h16.6v4.2h-16.6zM74.2 602.5h12.5v4.2h-12.5zM90.7 602.5h4.2v4.2h-4.2zM98.9 602.5h4.2v4.2h-4.2zM181.3 602.5h4.2v4.2h-4.2zM189.6 602.5h12.5v4.2h-12.5zM206.1 602.5h4.2v4.2h-4.2zM214.3 602.5h4.2v4.2h-4.2zM70.0 606.6h4.2v4.2h-4.2zM86.5 606.6h4.2v4.2h-4.2zM94.8 606.6h4.2v4.2h-4.2zM169.0 606.6h4.2v4.2h-4.2zM177.2 606.6h4.2v4.2h-4.2zM70.0 610.7h8.3v4.2h-8.3zM82.4 610.7h4.2v4.2h-4.2zM90.7 610.7h8.3v4.2h-8.3zM177.2 610.7h4.2v4.2h-4.2zM185.5 610.7h4.2v4.2h-4.2zM193.7 610.7h8.3v4.2h-8.3zM70.0 614.8h4.2v4.2h-4.2zM78.3 614.8h4.2v4.2h-4.2zM86.5 614.8h8.3v4.2h-8.3zM177.2 614.8h8.3v4.2h-8.3zM189.6 614.8h20.7v4.2h-20.7zM70.0 618.9h4.2v4.2h-4.2zM82.4 618.9h12.5v4.2h-12.5zM169.0 618.9h4.2v4.2h-4.2zM181.3 618.9h4.2v4.2h-4.2zM189.6 618.9h4.2v4.2h-4.2zM197.8 618.9h4.2v4.2h-4.2zM70.0 623.0h4.2v4.2h-4.2zM86.5 623.0h8.3v4.2h-8.3zM177.2 623.0h4.2v4.2h-4.2zM189.6 623.0h4.2v4.2h-4.2zM197.8 623.0h12.5v4.2h-12.5zM74.2 627.1h4.2v4.2h-4.2zM86.5 627.1h20.7v4.2h-20.7zM173.1 627.1h4.2v4.2h-4.2zM181.3 627.1h4.2v4.2h-4.2zM189.6 627.1h4.2v4.2h-4.2zM202.0 627.1h4.2v4.2h-4.2zM210.2 627.1h8.3v4.2h-8.3zM78.3 631.2h4.2v4.2h-4.2zM90.7 631.2h16.6v4.2h-16.6zM160.7 631.2h8.3v4.2h-8.3zM193.7 631.2h4.2v4.2h-4.2zM202.0 631.2h4.2v4.2h-4.2zM70.0 635.3h12.5v4.2h-12.5zM107.1 635.3h4.2v4.2h-4.2zM160.7 635.3h8.3v4.2h-8.3zM177.2 635.3h4.2v4.2h-4.2zM70.0 639.4h4.2v4.2h-4.2zM78.3 639.4h20.7v4.2h-20.7zM103.0 639.4h8.3v4.2h-8.3zM115.4 639.4h4.2v4.2h-4.2zM169.0 639.4h4.2v4.2h-4.2zM197.8 639.4h4.2v4.2h-4.2zM70.0 643.5h4.2v4.2h-4.2zM78.3 643.5h8.3v4.2h-8.3zM98.9 643.5h8.3v4.2h-8.3zM111.3 643.5h12.5v4.2h-12.5zM136.0 643.5h4.2v4.2h-4.2zM160.7 643.5h4.2v4.2h-4.2zM169.0 643.5h4.2v4.2h-4.2zM185.5 643.5h8.3v4.2h-8.3zM197.8 643.5h12.5v4.2h-12.5zM78.3 647.6h4.2v4.2h-4.2zM90.7 647.6h4.2v4.2h-4.2zM98.9 647.6h16.6v4.2h-16.6zM119.5 647.6h4.2v4.2h-4.2zM131.9 647.6h4.2v4.2h-4.2zM156.6 647.6h4.2v4.2h-4.2zM164.9 647.6h8.3v4.2h-8.3zM177.2 647.6h4.2v4.2h-4.2zM185.5 647.6h4.2v4.2h-4.2zM193.7 647.6h4.2v4.2h-4.2zM202.0 647.6h8.3v4.2h-8.3zM70.0 651.7h4.2v4.2h-4.2zM98.9 651.7h8.3v4.2h-8.3zM119.5 651.7h4.2v4.2h-4.2zM127.8 651.7h8.3v4.2h-8.3zM140.1 651.7h4.2v4.2h-4.2zM152.5 651.7h4.2v4.2h-4.2zM160.7 651.7h8.3v4.2h-8.3zM173.1 651.7h12.5v4.2h-12.5zM189.6 651.7h4.2v4.2h-4.2zM197.8 651.7h4.2v4.2h-4.2zM206.1 651.7h4.2v4.2h-4.2zM214.3 651.7h4.2v4.2h-4.2zM70.0 655.8h8.3v4.2h-8.3zM82.4 655.8h4.2v4.2h-4.2zM94.8 655.8h4.2v4.2h-4.2zM107.1 655.8h16.6v4.2h-16.6zM140.1 655.8h4.2v4.2h-4.2zM152.5 655.8h4.2v4.2h-4.2zM173.1 655.8h4.2v4.2h-4.2zM181.3 655.8h8.3v4.2h-8.3zM193.7 655.8h12.5v4.2h-12.5zM210.2 655.8h8.3v4.2h-8.3zM82.4 659.9h8.3v4.2h-8.3zM94.8 659.9h8.3v4.2h-8.3zM111.3 659.9h4.2v4.2h-4.2zM119.5 659.9h12.5v4.2h-12.5zM144.2 659.9h4.2v4.2h-4.2zM152.5 659.9h4.2v4.2h-4.2zM160.7 659.9h4.2v4.2h-4.2zM177.2 659.9h4.2v4.2h-4.2zM185.5 659.9h8.3v4.2h-8.3zM206.1 659.9h12.5v4.2h-12.5zM74.2 664.0h4.2v4.2h-4.2zM94.8 664.0h16.6v4.2h-16.6zM123.6 664.0h8.3v4.2h-8.3zM144.2 664.0h4.2v4.2h-4.2zM156.6 664.0h8.3v4.2h-8.3zM177.2 664.0h8.3v4.2h-8.3zM193.7 664.0h4.2v4.2h-4.2zM202.0 664.0h4.2v4.2h-4.2zM82.4 668.1h4.2v4.2h-4.2zM98.9 668.1h4.2v4.2h-4.2zM115.4 668.1h16.6v4.2h-16.6zM136.0 668.1h4.2v4.2h-4.2zM148.4 668.1h4.2v4.2h-4.2zM169.0 668.1h12.5v4.2h-12.5zM189.6 668.1h8.3v4.2h-8.3zM202.0 668.1h4.2v4.2h-4.2zM210.2 668.1h4.2v4.2h-4.2zM70.0 672.2h4.2v4.2h-4.2zM78.3 672.2h4.2v4.2h-4.2zM94.8 672.2h4.2v4.2h-4.2zM107.1 672.2h16.6v4.2h-16.6zM131.9 672.2h12.5v4.2h-12.5zM156.6 672.2h12.5v4.2h-12.5zM185.5 672.2h4.2v4.2h-4.2zM197.8 672.2h12.5v4.2h-12.5zM214.3 672.2h4.2v4.2h-4.2zM74.2 676.3h4.2v4.2h-4.2zM103.0 676.3h4.2v4.2h-4.2zM115.4 676.3h4.2v4.2h-4.2zM123.6 676.3h4.2v4.2h-4.2zM131.9 676.3h4.2v4.2h-4.2zM144.2 676.3h4.2v4.2h-4.2zM169.0 676.3h12.5v4.2h-12.5zM197.8 676.3h12.5v4.2h-12.5z"/><path fill="#e9e9e9" d="M98.9 532.8h4.2v4.2h-4.2zM107.1 532.8h8.3v4.2h-8.3zM119.5 532.8h4.2v4.2h-4.2zM127.8 532.8h8.3v4.2h-8.3zM140.1 532.8h4.2v4.2h-4.2zM148.4 532.8h4.2v4.2h-4.2zM156.6 532.8h4.2v4.2h-4.2zM164.9 532.8h12.5v4.2h-12.5zM185.5 532.8h4.2v4.2h-4.2zM197.8 532.8h4.2v4.2h-4.2zM206.1 532.8h8.3v4.2h-8.3zM78.3 536.9h4.2v4.2h-4.2zM86.5 536.9h4.2v4.2h-4.2zM111.3 536.9h8.3v4.2h-8.3zM160.7 536.9h4.2v4.2h-4.2zM169.0 536.9h4.2v4.2h-4.2zM202.0 536.9h4.2v4.2h-4.2zM210.2 536.9h8.3v4.2h-8.3zM70.0 541.0h4.2v4.2h-4.2zM78.3 541.0h4.2v4.2h-4.2zM86.5 541.0h4.2v4.2h-4.2zM140.1 541.0h4.2v4.2h-4.2zM148.4 541.0h4.2v4.2h-4.2zM160.7 541.0h4.2v4.2h-4.2zM169.0 541.0h8.3v4.2h-8.3zM214.3 541.0h4.2v4.2h-4.2zM90.7 545.1h8.3v4.2h-8.3zM103.0 545.1h4.2v4.2h-4.2zM111.3 545.1h4.2v4.2h-4.2zM119.5 545.1h8.3v4.2h-8.3zM131.9 545.1h4.2v4.2h-4.2zM160.7 545.1h8.3v4.2h-8.3zM173.1 545.1h4.2v4.2h-4.2zM189.6 545.1h4.2v4.2h-4.2zM206.1 545.1h4.2v4.2h-4.2zM103.0 549.2h4.2v4.2h-4.2zM136.0 549.2h8.3v4.2h-8.3zM148.4 549.2h4.2v4.2h-4.2zM189.6 549.2h8.3v4.2h-8.3zM202.0 549.2h8.3v4.2h-8.3zM214.3 549.2h4.2v4.2h-4.2zM94.8 553.3h8.3v4.2h-8.3zM136.0 553.3h4.2v4.2h-4.2zM169.0 553.3h4.2v4.2h-4.2zM177.2 553.3h4.2v4.2h-4.2zM197.8 553.3h8.3v4.2h-8.3zM214.3 553.3h4.2v4.2h-4.2zM74.2 557.4h16.6v4.2h-16.6zM94.8 557.4h4.2v4.2h-4.2zM103.0 557.4h4.2v4.2h-4.2zM111.3 557.4h4.2v4.2h-4.2zM131.9 557.4h8.3v4.2h-8.3zM152.5 557.4h8.3v4.2h-8.3zM164.9 557.4h4.2v4.2h-4.2zM173.1 557.4h12.5v4.2h-12.5zM202.0 557.4h4.2v4.2h-4.2zM119.5 561.5h12.5v4.2h-12.5zM140.1 561.5h4.2v4.2h-4.2zM173.1 561.5h4.2v4.2h-4.2zM197.8 561.5h12.5v4.2h-12.5zM86.5 565.6h4.2v4.2h-4.2zM98.9 565.6h4.2v4.2h-4.2zM111.3 565.6h12.5v4.2h-12.5zM160.7 565.6h4.2v4.2h-4.2zM202.0 565.6h4.2v4.2h-4.2zM86.5 569.7h4.2v4.2h-4.2zM103.0 569.7h8.3v4.2h-8.3zM164.9 569.7h8.3v4.2h-8.3zM181.3 569.7h8.3v4.2h-8.3zM214.3 569.7h4.2v4.2h-4.2zM78.3 573.8h4.2v4.2h-4.2zM90.7 573.8h4.2v4.2h-4.2zM98.9 573.8h4.2v4.2h-4.2zM115.4 573.8h4.2v4.2h-4.2zM189.6 573.8h4.2v4.2h-4.2zM202.0 573.8h4.2v4.2h-4.2zM70.0 577.9h4.2v4.2h-4.2zM78.3 577.9h4.2v4.2h-4.2zM94.8 577.9h4.2v4.2h-4.2zM156.6 577.9h4.2v4.2h-4.2zM177.2 577.9h4.2v4.2h-4.2zM197.8 577.9h4.2v4.2h-4.2zM74.2 582.0h4.2v4.2h-4.2zM86.5 582.0h4.2v4.2h-4.2zM181.3 582.0h4.2v4.2h-4.2zM189.6 582.0h8.3v4.2h-8.3zM70.0 586.1h4.2v4.2h-4.2zM90.7 586.1h4.2v4.2h-4.2zM173.1 586.1h4.2v4.2h-4.2zM181.3 586.1h8.3v4.2h-8.3zM197.8 586.1h8.3v4.2h-8.3zM70.0 590.2h8.3v4.2h-8.3zM197.8 590.2h4.2v4.2h-4.2zM206.1 590.2h8.3v4.2h-8.3zM74.2 594.3h4.2v4.2h-4.2zM86.5 594.3h4.2v4.2h-4.2zM94.8 594.3h4.2v4.2h-4.2zM193.7 594.3h4.2v4.2h-4.2zM202.0 594.3h4.2v4.2h-4.2zM210.2 594.3h4.2v4.2h-4.2zM181.3 598.4h4.2v4.2h-4.2zM189.6 598.4h4.2v4.2h-4.2zM177.2 602.5h4.2v4.2h-4.2zM185.5 602.5h4.2v4.2h-4.2zM202.0 602.5h4.2v4.2h-4.2zM210.2 602.5h4.2v4.2h-4.2zM78.3 606.6h4.2v4.2h-4.2zM173.1 606.6h4.2v4.2h-4.2zM181.3 606.6h4.2v4.2h-4.2zM189.6 606.6h8.3v4.2h-8.3zM210.2 606.6h4.2v4.2h-4.2zM189.6 610.7h4.2v4.2h-4.2zM202.0 610.7h8.3v4.2h-8.3zM74.2 618.9h8.3v4.2h-8.3zM185.5 618.9h4.2v4.2h-4.2zM202.0 618.9h8.3v4.2h-8.3zM214.3 618.9h4.2v4.2h-4.2zM181.3 623.0h8.3v4.2h-8.3zM193.7 623.0h4.2v4.2h-4.2zM210.2 623.0h4.2v4.2h-4.2zM78.3 627.1h4.2v4.2h-4.2zM193.7 627.1h4.2v4.2h-4.2zM70.0 631.2h8.3v4.2h-8.3zM86.5 631.2h4.2v4.2h-4.2zM169.0 631.2h8.3v4.2h-8.3zM181.3 631.2h12.5v4.2h-12.5zM206.1 631.2h8.3v4.2h-8.3zM181.3 635.3h4.2v4.2h-4.2zM197.8 635.3h4.2v4.2h-4.2zM206.1 635.3h4.2v4.2h-4.2zM214.3 635.3h4.2v4.2h-4.2zM74.2 639.4h4.2v4.2h-4.2zM173.1 639.4h8.3v4.2h-8.3zM189.6 639.4h8.3v4.2h-8.3zM202.0 639.4h8.3v4.2h-8.3zM214.3 639.4h4.2v4.2h-4.2zM74.2 643.5h4.2v4.2h-4.2zM86.5 643.5h12.5v4.2h-12.5zM107.1 643.5h4.2v4.2h-4.2zM156.6 643.5h4.2v4.2h-4.2zM173.1 643.5h8.3v4.2h-8.3zM193.7 643.5h4.2v4.2h-4.2zM210.2 643.5h8.3v4.2h-8.3zM70.0 647.6h8.3v4.2h-8.3zM210.2 647.6h4.2v4.2h-4.2zM74.2 651.7h4.2v4.2h-4.2zM82.4 651.7h12.5v4.2h-12.5zM185.5 651.7h4.2v4.2h-4.2zM202.0 651.7h4.2v4.2h-4.2zM210.2 651.7h4.2v4.2h-4.2zM86.5 655.8h8.3v4.2h-8.3zM98.9 655.8h4.2v4.2h-4.2zM123.6 655.8h4.2v4.2h-4.2zM131.9 655.8h4.2v4.2h-4.2zM148.4 655.8h4.2v4.2h-4.2zM156.6 655.8h12.5v4.2h-12.5zM189.6 655.8h4.2v4.2h-4.2zM70.0 659.9h4.2v4.2h-4.2zM78.3 659.9h4.2v4.2h-4.2zM90.7 659.9h4.2v4.2h-4.2zM107.1 659.9h4.2v4.2h-4.2zM136.0 659.9h8.3v4.2h-8.3zM173.1 659.9h4.2v4.2h-4.2zM193.7 659.9h12.5v4.2h-12.5zM70.0 664.0h4.2v4.2h-4.2zM78.3 664.0h16.6v4.2h-16.6zM111.3 664.0h12.5v4.2h-12.5zM131.9 664.0h8.3v4.2h-8.3zM164.9 664.0h8.3v4.2h-8.3zM185.5 664.0h4.2v4.2h-4.2zM197.8 664.0h4.2v4.2h-4.2zM214.3 664.0h4.2v4.2h-4.2zM74.2 668.1h8.3v4.2h-8.3zM86.5 668.1h4.2v4.2h-4.2zM94.8 668.1h4.2v4.2h-4.2zM131.9 668.1h4.2v4.2h-4.2zM140.1 668.1h8.3v4.2h-8.3zM152.5 668.1h8.3v4.2h-8.3zM164.9 668.1h4.2v4.2h-4.2zM185.5 668.1h4.2v4.2h-4.2zM197.8 668.1h4.2v4.2h-4.2zM206.1 668.1h4.2v4.2h-4.2zM74.2 672.2h4.2v4.2h-4.2zM82.4 672.2h12.5v4.2h-12.5zM98.9 672.2h4.2v4.2h-4.2zM127.8 672.2h4.2v4.2h-4.2zM152.5 672.2h4.2v4.2h-4.2zM169.0 672.2h16.6v4.2h-16.6zM189.6 672.2h8.3v4.2h-8.3zM70.0 676.3h4.2v4.2h-4.2zM78.3 676.3h12.5v4.2h-12.5zM94.8 676.3h4.2v4.2h-4.2zM111.3 676.3h4.2v4.2h-4.2zM127.8 676.3h4.2v4.2h-4.2zM140.1 676.3h4.2v4.2h-4.2zM148.4 676.3h20.7v4.2h-20.7zM181.3 676.3h4.2v4.2h-4.2zM193.7 676.3h4.2v4.2h-4.2zM210.2 676.3h8.3v4.2h-8.3z"/><path fill="#f4f4f4" d="M78.3 532.8h4.2v4.2h-4.2zM115.4 532.8h4.2v4.2h-4.2zM148.4 536.9h4.2v4.2h-4.2zM177.2 536.9h4.2v4.2h-4.2zM94.8 541.0h4.2v4.2h-4.2zM131.9 541.0h8.3v4.2h-8.3zM152.5 541.0h8.3v4.2h-8.3zM82.4 545.1h4.2v4.2h-4.2zM94.8 549.2h4.2v4.2h-4.2zM197.8 549.2h4.2v4.2h-4.2zM131.9 553.3h4.2v4.2h-4.2zM169.0 557.4h4.2v4.2h-4.2zM156.6 561.5h4.2v4.2h-4.2zM90.7 565.6h4.2v4.2h-4.2zM206.1 569.7h4.2v4.2h-4.2zM103.0 573.8h4.2v4.2h-4.2zM74.2 577.9h4.2v4.2h-4.2zM82.4 582.0h4.2v4.2h-4.2zM90.7 582.0h4.2v4.2h-4.2zM197.8 582.0h4.2v4.2h-4.2zM210.2 586.1h4.2v4.2h-4.2zM78.3 598.4h4.2v4.2h-4.2zM206.1 606.6h4.2v4.2h-4.2zM214.3 606.6h4.2v4.2h-4.2zM78.3 610.7h4.2v4.2h-4.2zM82.4 614.8h4.2v4.2h-4.2zM74.2 623.0h4.2v4.2h-4.2zM111.3 635.3h4.2v4.2h-4.2zM94.8 647.6h4.2v4.2h-4.2zM78.3 651.7h4.2v4.2h-4.2zM94.8 651.7h4.2v4.2h-4.2zM103.0 655.8h4.2v4.2h-4.2zM103.0 659.9h4.2v4.2h-4.2zM131.9 659.9h4.2v4.2h-4.2zM173.1 664.0h4.2v4.2h-4.2zM206.1 664.0h4.2v4.2h-4.2zM90.7 668.1h4.2v4.2h-4.2zM103.0 668.1h4.2v4.2h-4.2zM111.3 668.1h4.2v4.2h-4.2zM214.3 668.1h4.2v4.2h-4.2zM189.6 676.3h4.2v4.2h-4.2z"/><path fill="#ffffff" d="M202.0 545.1h4.2v4.2h-4.2z"/>
<rect x="95.79" y="558.39" width="96.42" height="96.42" fill="none" stroke="#ff0000" stroke-width="1.45" />
<text xml:space="preserve" class="s" x="144.00" y="546.40" font-size="10.70" fill="#ff0000" text-anchor="middle" stroke="#ff0000" stroke-width="0.35">N</text>
<text xml:space="preserve" class="s" x="80.52" y="610.40" font-size="10.70" fill="#ff0000" text-anchor="middle" stroke="#ff0000" stroke-width="0.35">E</text>
<g fill="none" stroke="#606060" stroke-width="1.05" stroke-opacity="0.85"><circle cx="112.34" cy="570.28" r="12.05"/><circle cx="135.48" cy="566.10" r="12.05"/><circle cx="159.35" cy="563.37" r="12.05"/><circle cx="173.73" cy="580.73" r="12.05"/><circle cx="189.32" cy="598.48" r="12.05"/><circle cx="180.48" cy="620.74" r="12.05"/><circle cx="172.28" cy="643.24" r="12.05"/><circle cx="148.82" cy="647.58" r="12.05"/><circle cx="126.64" cy="650.79" r="12.05"/><circle cx="110.25" cy="632.31" r="12.05"/><circle cx="95.31" cy="615.28" r="12.05"/><circle cx="103.42" cy="592.78" r="12.05"/><circle cx="127.29" cy="589.41" r="12.05"/><circle cx="119.41" cy="610.46" r="12.05"/><circle cx="133.39" cy="629.58" r="12.05"/></g>
<circle cx="151.15" cy="584.58" r="12.05" fill="none" stroke="#ff0000" stroke-width="1.5"/>
<circle cx="165.49" cy="603.71" r="12.05" fill="none" stroke="#00ff00" stroke-width="1.5"/>
<circle cx="141.35" cy="606.60" r="12.05" fill="none" stroke="#0000ff" stroke-width="1.5"/>
<circle cx="157.71" cy="624.76" r="12.05" fill="none" stroke="#ffa500" stroke-width="1.5"/>
<line x1="140.40" y1="606.60" x2="147.60" y2="606.60" stroke="#ff0000" stroke-width="1.2" />
<line x1="144.00" y1="603.00" x2="144.00" y2="610.20" stroke="#ff0000" stroke-width="1.2" />
<rect x="70.10" y="532.80" width="148.40" height="147.70" fill="none" stroke="#222" stroke-width="1.2" />
<line x1="79.72" y1="680.50" x2="79.72" y2="684.50" stroke="#222" stroke-width="0.9" />
<text xml:space="preserve" class="s" x="79.72" y="696.10" font-size="9.73" fill="#111" text-anchor="middle" >−4</text>
<line x1="66.10" y1="670.88" x2="70.10" y2="670.88" stroke="#222" stroke-width="0.9" />
<text xml:space="preserve" class="s" x="63.10" y="674.48" font-size="9.73" fill="#111" text-anchor="end" >−4</text>
<line x1="111.86" y1="680.50" x2="111.86" y2="684.50" stroke="#222" stroke-width="0.9" />
<text xml:space="preserve" class="s" x="111.86" y="696.10" font-size="9.73" fill="#111" text-anchor="middle" >−2</text>
<line x1="66.10" y1="638.74" x2="70.10" y2="638.74" stroke="#222" stroke-width="0.9" />
<text xml:space="preserve" class="s" x="63.10" y="642.34" font-size="9.73" fill="#111" text-anchor="end" >−2</text>
<line x1="144.00" y1="680.50" x2="144.00" y2="684.50" stroke="#222" stroke-width="0.9" />
<text xml:space="preserve" class="s" x="144.00" y="696.10" font-size="9.73" fill="#111" text-anchor="middle" >0</text>
<line x1="66.10" y1="606.60" x2="70.10" y2="606.60" stroke="#222" stroke-width="0.9" />
<text xml:space="preserve" class="s" x="63.10" y="610.20" font-size="9.73" fill="#111" text-anchor="end" >0</text>
<line x1="176.14" y1="680.50" x2="176.14" y2="684.50" stroke="#222" stroke-width="0.9" />
<text xml:space="preserve" class="s" x="176.14" y="696.10" font-size="9.73" fill="#111" text-anchor="middle" >2</text>
<line x1="66.10" y1="574.46" x2="70.10" y2="574.46" stroke="#222" stroke-width="0.9" />
<text xml:space="preserve" class="s" x="63.10" y="578.06" font-size="9.73" fill="#111" text-anchor="end" >2</text>
<line x1="208.28" y1="680.50" x2="208.28" y2="684.50" stroke="#222" stroke-width="0.9" />
<text xml:space="preserve" class="s" x="208.28" y="696.10" font-size="9.73" fill="#111" text-anchor="middle" >4</text>
<line x1="66.10" y1="542.32" x2="70.10" y2="542.32" stroke="#222" stroke-width="0.9" />
<text xml:space="preserve" class="s" x="63.10" y="545.92" font-size="9.73" fill="#111" text-anchor="end" >4</text>
<text xml:space="preserve" class="s" x="144.00" y="525.40" font-size="12.97" fill="#111" text-anchor="middle" >Fiber Positions</text>
<text xml:space="preserve" class="s" x="144.00" y="706.30" font-size="10.80" fill="#111" text-anchor="middle" >arcsecs</text>
<g clip-path="url(#clipLF)"><rect x="249.40" y="526.80" width="160" height="160" fill="#3b528b"/><g filter="url(#lfb)"><path fill="#450c5f" d="M348.9 536.0h3.3v3.3h-3.3zM348.9 539.2h19.5v3.3h-19.5zM345.7 542.4h35.6v3.3h-35.6zM345.7 545.6h38.8v3.3h-38.8zM345.7 548.8h38.8v3.3h-38.8zM345.7 552.0h35.6v3.3h-35.6zM345.7 555.2h35.6v3.3h-35.6zM345.7 558.4h35.6v3.3h-35.6zM361.8 561.7h19.5v3.3h-19.5zM397.3 561.7h3.3v3.3h-3.3zM374.7 564.9h3.3v3.3h-3.3zM394.1 564.9h9.8v3.3h-9.8zM394.1 568.1h6.5v3.3h-6.5zM394.1 571.3h6.5v3.3h-6.5zM394.1 574.5h6.5v3.3h-6.5zM390.8 577.7h9.8v3.3h-9.8zM390.8 580.9h9.8v3.3h-9.8zM261.8 584.1h9.8v3.3h-9.8zM390.8 584.1h6.5v3.3h-6.5zM261.8 587.3h16.2v3.3h-16.2zM258.6 590.5h22.7v3.3h-22.7zM258.6 593.8h22.7v3.3h-22.7zM258.6 597.0h19.5v3.3h-19.5zM255.4 600.2h22.7v3.3h-22.7zM255.4 603.4h22.7v3.3h-22.7zM255.4 606.6h19.5v3.3h-19.5zM342.4 606.6h6.5v3.3h-6.5zM252.2 609.8h22.7v3.3h-22.7zM342.4 609.8h13.0v3.3h-13.0zM255.4 613.0h19.5v3.3h-19.5zM339.2 613.0h16.2v3.3h-16.2zM261.8 616.2h9.8v3.3h-9.8zM339.2 616.2h13.0v3.3h-13.0zM339.2 619.4h13.0v3.3h-13.0zM336.0 622.7h16.2v3.3h-16.2zM336.0 625.9h13.0v3.3h-13.0zM336.0 629.1h13.0v3.3h-13.0zM332.8 632.3h16.2v3.3h-16.2zM332.8 635.5h13.0v3.3h-13.0zM329.6 638.7h16.2v3.3h-16.2zM329.6 641.9h16.2v3.3h-16.2zM336.0 645.1h9.8v3.3h-9.8zM326.3 654.8h19.5v3.3h-19.5zM326.3 658.0h32.4v3.3h-32.4zM326.3 661.2h35.6v3.3h-35.6zM326.3 664.4h35.6v3.3h-35.6zM381.2 664.4h13.0v3.3h-13.0zM332.8 667.6h29.1v3.3h-29.1zM381.2 667.6h16.2v3.3h-16.2zM345.7 670.8h16.2v3.3h-16.2zM377.9 670.8h19.5v3.3h-19.5zM377.9 674.0h19.5v3.3h-19.5zM387.6 677.2h9.8v3.3h-9.8z"/><path fill="#471869" d="M352.1 536.0h6.5v3.3h-6.5zM345.7 539.2h3.3v3.3h-3.3zM368.2 539.2h6.5v3.3h-6.5zM381.2 542.4h3.3v3.3h-3.3zM342.4 552.0h3.3v3.3h-3.3zM381.2 552.0h3.3v3.3h-3.3zM342.4 555.2h3.3v3.3h-3.3zM381.2 555.2h3.3v3.3h-3.3zM342.4 558.4h3.3v3.3h-3.3zM394.1 558.4h9.8v3.3h-9.8zM352.1 561.7h9.8v3.3h-9.8zM394.1 561.7h3.3v3.3h-3.3zM400.5 561.7h6.5v3.3h-6.5zM368.2 564.9h6.5v3.3h-6.5zM377.9 564.9h3.3v3.3h-3.3zM390.8 564.9h3.3v3.3h-3.3zM403.7 564.9h3.3v3.3h-3.3zM390.8 568.1h3.3v3.3h-3.3zM400.5 568.1h3.3v3.3h-3.3zM390.8 571.3h3.3v3.3h-3.3zM400.5 571.3h3.3v3.3h-3.3zM390.8 574.5h3.3v3.3h-3.3zM400.5 574.5h3.3v3.3h-3.3zM400.5 577.7h3.3v3.3h-3.3zM261.8 580.9h3.3v3.3h-3.3zM387.6 580.9h3.3v3.3h-3.3zM258.6 584.1h3.3v3.3h-3.3zM271.5 584.1h3.3v3.3h-3.3zM387.6 584.1h3.3v3.3h-3.3zM397.3 584.1h3.3v3.3h-3.3zM258.6 587.3h3.3v3.3h-3.3zM277.9 587.3h3.3v3.3h-3.3zM387.6 587.3h13.0v3.3h-13.0zM255.4 593.8h3.3v3.3h-3.3zM255.4 597.0h3.3v3.3h-3.3zM277.9 597.0h3.3v3.3h-3.3zM277.9 600.2h3.3v3.3h-3.3zM252.2 603.4h3.3v3.3h-3.3zM252.2 606.6h3.3v3.3h-3.3zM274.7 606.6h3.3v3.3h-3.3zM339.2 606.6h3.3v3.3h-3.3zM348.9 606.6h3.3v3.3h-3.3zM274.7 609.8h3.3v3.3h-3.3zM339.2 609.8h3.3v3.3h-3.3zM252.2 613.0h3.3v3.3h-3.3zM258.6 616.2h3.3v3.3h-3.3zM271.5 616.2h3.3v3.3h-3.3zM336.0 616.2h3.3v3.3h-3.3zM352.1 616.2h3.3v3.3h-3.3zM268.3 619.4h3.3v3.3h-3.3zM336.0 619.4h3.3v3.3h-3.3zM332.8 625.9h3.3v3.3h-3.3zM348.9 625.9h3.3v3.3h-3.3zM332.8 629.1h3.3v3.3h-3.3zM329.6 635.5h3.3v3.3h-3.3zM345.7 635.5h3.3v3.3h-3.3zM326.3 638.7h3.3v3.3h-3.3zM345.7 638.7h3.3v3.3h-3.3zM326.3 641.9h3.3v3.3h-3.3zM332.8 645.1h3.3v3.3h-3.3zM339.2 648.3h3.3v3.3h-3.3zM326.3 651.5h9.8v3.3h-9.8zM345.7 654.8h3.3v3.3h-3.3zM358.6 658.0h3.3v3.3h-3.3zM361.8 661.2h3.3v3.3h-3.3zM323.1 664.4h3.3v3.3h-3.3zM361.8 664.4h3.3v3.3h-3.3zM394.1 664.4h3.3v3.3h-3.3zM329.6 667.6h3.3v3.3h-3.3zM377.9 667.6h3.3v3.3h-3.3zM397.3 667.6h3.3v3.3h-3.3zM339.2 670.8h6.5v3.3h-6.5zM397.3 670.8h3.3v3.3h-3.3zM355.4 674.0h6.5v3.3h-6.5zM397.3 674.0h3.3v3.3h-3.3zM384.4 677.2h3.3v3.3h-3.3z"/><path fill="#482374" d="M345.7 536.0h3.3v3.3h-3.3zM358.6 536.0h6.5v3.3h-6.5zM374.7 539.2h3.3v3.3h-3.3zM342.4 545.6h3.3v3.3h-3.3zM258.6 548.8h9.8v3.3h-9.8zM342.4 548.8h3.3v3.3h-3.3zM265.1 552.0h9.8v3.3h-9.8zM271.5 555.2h9.8v3.3h-9.8zM277.9 558.4h3.3v3.3h-3.3zM381.2 558.4h3.3v3.3h-3.3zM390.8 558.4h3.3v3.3h-3.3zM403.7 558.4h3.3v3.3h-3.3zM348.9 561.7h3.3v3.3h-3.3zM390.8 561.7h3.3v3.3h-3.3zM403.7 568.1h3.3v3.3h-3.3zM387.6 571.3h3.3v3.3h-3.3zM403.7 571.3h3.3v3.3h-3.3zM387.6 574.5h3.3v3.3h-3.3zM387.6 577.7h3.3v3.3h-3.3zM258.6 580.9h3.3v3.3h-3.3zM265.1 580.9h3.3v3.3h-3.3zM400.5 580.9h3.3v3.3h-3.3zM274.7 584.1h3.3v3.3h-3.3zM400.5 584.1h3.3v3.3h-3.3zM281.2 587.3h3.3v3.3h-3.3zM255.4 590.5h3.3v3.3h-3.3zM281.2 590.5h3.3v3.3h-3.3zM390.8 590.5h9.8v3.3h-9.8zM281.2 593.8h3.3v3.3h-3.3zM252.2 600.2h3.3v3.3h-3.3zM277.9 603.4h3.3v3.3h-3.3zM352.1 606.6h3.3v3.3h-3.3zM274.7 613.0h3.3v3.3h-3.3zM336.0 613.0h3.3v3.3h-3.3zM252.2 616.2h6.5v3.3h-6.5zM265.1 619.4h3.3v3.3h-3.3zM271.5 619.4h3.3v3.3h-3.3zM352.1 619.4h3.3v3.3h-3.3zM348.9 629.1h3.3v3.3h-3.3zM329.6 632.3h3.3v3.3h-3.3zM323.1 641.9h3.3v3.3h-3.3zM345.7 641.9h3.3v3.3h-3.3zM329.6 645.1h3.3v3.3h-3.3zM336.0 648.3h3.3v3.3h-3.3zM342.4 648.3h3.3v3.3h-3.3zM336.0 651.5h6.5v3.3h-6.5zM348.9 654.8h3.3v3.3h-3.3zM323.1 658.0h3.3v3.3h-3.3zM361.8 658.0h3.3v3.3h-3.3zM323.1 661.2h3.3v3.3h-3.3zM381.2 661.2h6.5v3.3h-6.5zM377.9 664.4h3.3v3.3h-3.3zM397.3 664.4h3.3v3.3h-3.3zM326.3 667.6h3.3v3.3h-3.3zM361.8 667.6h3.3v3.3h-3.3zM336.0 670.8h3.3v3.3h-3.3zM348.9 674.0h6.5v3.3h-6.5zM377.9 677.2h6.5v3.3h-6.5zM397.3 677.2h3.3v3.3h-3.3zM394.1 680.4h3.3v3.3h-3.3z"/><path fill="#462d7a" d="M348.9 532.8h3.3v3.3h-3.3zM284.4 536.0h13.0v3.3h-13.0zM365.0 536.0h3.3v3.3h-3.3zM284.4 539.2h29.1v3.3h-29.1zM377.9 539.2h3.3v3.3h-3.3zM284.4 542.4h35.6v3.3h-35.6zM342.4 542.4h3.3v3.3h-3.3zM258.6 545.6h6.5v3.3h-6.5zM297.3 545.6h22.7v3.3h-22.7zM384.4 545.6h3.3v3.3h-3.3zM255.4 548.8h3.3v3.3h-3.3zM268.3 548.8h3.3v3.3h-3.3zM384.4 548.8h3.3v3.3h-3.3zM258.6 552.0h6.5v3.3h-6.5zM274.7 552.0h3.3v3.3h-3.3zM268.3 555.2h3.3v3.3h-3.3zM281.2 555.2h3.3v3.3h-3.3zM394.1 555.2h6.5v3.3h-6.5zM274.7 558.4h3.3v3.3h-3.3zM281.2 558.4h3.3v3.3h-3.3zM345.7 561.7h3.3v3.3h-3.3zM381.2 561.7h3.3v3.3h-3.3zM365.0 564.9h3.3v3.3h-3.3zM374.7 568.1h6.5v3.3h-6.5zM387.6 568.1h3.3v3.3h-3.3zM403.7 574.5h3.3v3.3h-3.3zM403.7 577.7h3.3v3.3h-3.3zM384.4 580.9h3.3v3.3h-3.3zM384.4 584.1h3.3v3.3h-3.3zM255.4 587.3h3.3v3.3h-3.3zM384.4 587.3h3.3v3.3h-3.3zM400.5 587.3h3.3v3.3h-3.3zM387.6 590.5h3.3v3.3h-3.3zM400.5 590.5h3.3v3.3h-3.3zM252.2 597.0h3.3v3.3h-3.3zM281.2 597.0h3.3v3.3h-3.3zM342.4 603.4h6.5v3.3h-6.5zM277.9 606.6h3.3v3.3h-3.3zM355.4 609.8h3.3v3.3h-3.3zM261.8 619.4h3.3v3.3h-3.3zM332.8 622.7h3.3v3.3h-3.3zM323.1 638.7h3.3v3.3h-3.3zM326.3 645.1h3.3v3.3h-3.3zM345.7 645.1h3.3v3.3h-3.3zM329.6 648.3h6.5v3.3h-6.5zM342.4 651.5h3.3v3.3h-3.3zM323.1 654.8h3.3v3.3h-3.3zM352.1 654.8h3.3v3.3h-3.3zM387.6 661.2h3.3v3.3h-3.3zM332.8 670.8h3.3v3.3h-3.3zM361.8 670.8h3.3v3.3h-3.3zM374.7 670.8h3.3v3.3h-3.3zM345.7 674.0h3.3v3.3h-3.3zM374.7 674.0h3.3v3.3h-3.3zM390.8 680.4h3.3v3.3h-3.3zM397.3 680.4h3.3v3.3h-3.3z"/><path fill="#443880" d="M281.2 532.8h16.2v3.3h-16.2zM345.7 532.8h3.3v3.3h-3.3zM352.1 532.8h6.5v3.3h-6.5zM281.2 536.0h3.3v3.3h-3.3zM297.3 536.0h16.2v3.3h-16.2zM368.2 536.0h3.3v3.3h-3.3zM281.2 539.2h3.3v3.3h-3.3zM313.4 539.2h9.8v3.3h-9.8zM342.4 539.2h3.3v3.3h-3.3zM258.6 542.4h3.3v3.3h-3.3zM281.2 542.4h3.3v3.3h-3.3zM319.9 542.4h3.3v3.3h-3.3zM384.4 542.4h3.3v3.3h-3.3zM255.4 545.6h3.3v3.3h-3.3zM265.1 545.6h3.3v3.3h-3.3zM284.4 545.6h13.0v3.3h-13.0zM319.9 545.6h3.3v3.3h-3.3zM271.5 548.8h3.3v3.3h-3.3zM297.3 548.8h25.9v3.3h-25.9zM255.4 552.0h3.3v3.3h-3.3zM277.9 552.0h3.3v3.3h-3.3zM313.4 552.0h6.5v3.3h-6.5zM384.4 552.0h3.3v3.3h-3.3zM265.1 555.2h3.3v3.3h-3.3zM284.4 555.2h3.3v3.3h-3.3zM339.2 555.2h3.3v3.3h-3.3zM390.8 555.2h3.3v3.3h-3.3zM400.5 555.2h6.5v3.3h-6.5zM271.5 558.4h3.3v3.3h-3.3zM339.2 558.4h3.3v3.3h-3.3zM342.4 561.7h3.3v3.3h-3.3zM387.6 561.7h3.3v3.3h-3.3zM361.8 564.9h3.3v3.3h-3.3zM381.2 564.9h3.3v3.3h-3.3zM387.6 564.9h3.3v3.3h-3.3zM371.5 568.1h3.3v3.3h-3.3zM384.4 577.7h3.3v3.3h-3.3zM268.3 580.9h3.3v3.3h-3.3zM403.7 580.9h3.3v3.3h-3.3zM255.4 584.1h3.3v3.3h-3.3zM277.9 584.1h3.3v3.3h-3.3zM384.4 590.5h3.3v3.3h-3.3zM252.2 593.8h3.3v3.3h-3.3zM390.8 593.8h9.8v3.3h-9.8zM281.2 600.2h3.3v3.3h-3.3zM339.2 603.4h3.3v3.3h-3.3zM348.9 603.4h3.3v3.3h-3.3zM355.4 606.6h3.3v3.3h-3.3zM277.9 609.8h3.3v3.3h-3.3zM336.0 609.8h3.3v3.3h-3.3zM355.4 613.0h3.3v3.3h-3.3zM274.7 616.2h3.3v3.3h-3.3zM352.1 622.7h3.3v3.3h-3.3zM348.9 632.3h3.3v3.3h-3.3zM326.3 648.3h3.3v3.3h-3.3zM345.7 648.3h3.3v3.3h-3.3zM345.7 651.5h3.3v3.3h-3.3zM377.9 661.2h3.3v3.3h-3.3zM323.1 667.6h3.3v3.3h-3.3zM374.7 667.6h3.3v3.3h-3.3zM400.5 667.6h3.3v3.3h-3.3zM329.6 670.8h3.3v3.3h-3.3zM400.5 670.8h3.3v3.3h-3.3zM342.4 674.0h3.3v3.3h-3.3zM361.8 674.0h3.3v3.3h-3.3zM358.6 677.2h3.3v3.3h-3.3zM374.7 677.2h3.3v3.3h-3.3zM384.4 680.4h6.5v3.3h-6.5z"/><path fill="#414286" d="M281.2 529.5h16.2v3.3h-16.2zM277.9 532.8h3.3v3.3h-3.3zM297.3 532.8h16.2v3.3h-16.2zM342.4 532.8h3.3v3.3h-3.3zM358.6 532.8h6.5v3.3h-6.5zM277.9 536.0h3.3v3.3h-3.3zM313.4 536.0h9.8v3.3h-9.8zM342.4 536.0h3.3v3.3h-3.3zM371.5 536.0h6.5v3.3h-6.5zM277.9 539.2h3.3v3.3h-3.3zM323.1 539.2h3.3v3.3h-3.3zM381.2 539.2h3.3v3.3h-3.3zM255.4 542.4h3.3v3.3h-3.3zM261.8 542.4h3.3v3.3h-3.3zM277.9 542.4h3.3v3.3h-3.3zM323.1 542.4h3.3v3.3h-3.3zM252.2 545.6h3.3v3.3h-3.3zM268.3 545.6h6.5v3.3h-6.5zM277.9 545.6h6.5v3.3h-6.5zM323.1 545.6h3.3v3.3h-3.3zM339.2 545.6h3.3v3.3h-3.3zM252.2 548.8h3.3v3.3h-3.3zM274.7 548.8h22.7v3.3h-22.7zM323.1 548.8h3.3v3.3h-3.3zM339.2 548.8h3.3v3.3h-3.3zM252.2 552.0h3.3v3.3h-3.3zM281.2 552.0h6.5v3.3h-6.5zM297.3 552.0h16.2v3.3h-16.2zM319.9 552.0h3.3v3.3h-3.3zM339.2 552.0h3.3v3.3h-3.3zM390.8 552.0h6.5v3.3h-6.5zM258.6 555.2h6.5v3.3h-6.5zM384.4 555.2h6.5v3.3h-6.5zM284.4 558.4h3.3v3.3h-3.3zM384.4 558.4h6.5v3.3h-6.5zM277.9 561.7h6.5v3.3h-6.5zM339.2 561.7h3.3v3.3h-3.3zM384.4 561.7h3.3v3.3h-3.3zM352.1 564.9h9.8v3.3h-9.8zM384.4 564.9h3.3v3.3h-3.3zM368.2 568.1h3.3v3.3h-3.3zM381.2 568.1h6.5v3.3h-6.5zM384.4 571.3h3.3v3.3h-3.3zM384.4 574.5h3.3v3.3h-3.3zM258.6 577.7h3.3v3.3h-3.3zM255.4 580.9h3.3v3.3h-3.3zM381.2 580.9h3.3v3.3h-3.3zM381.2 584.1h3.3v3.3h-3.3zM403.7 584.1h3.3v3.3h-3.3zM252.2 587.3h3.3v3.3h-3.3zM284.4 587.3h3.3v3.3h-3.3zM381.2 587.3h3.3v3.3h-3.3zM403.7 587.3h3.3v3.3h-3.3zM252.2 590.5h3.3v3.3h-3.3zM284.4 590.5h3.3v3.3h-3.3zM381.2 590.5h3.3v3.3h-3.3zM403.7 590.5h3.3v3.3h-3.3zM284.4 593.8h3.3v3.3h-3.3zM384.4 593.8h6.5v3.3h-6.5zM400.5 593.8h3.3v3.3h-3.3zM387.6 597.0h16.2v3.3h-16.2zM387.6 600.2h19.5v3.3h-19.5zM281.2 603.4h3.3v3.3h-3.3zM352.1 603.4h3.3v3.3h-3.3zM384.4 603.4h22.7v3.3h-22.7zM384.4 606.6h22.7v3.3h-22.7zM384.4 609.8h22.7v3.3h-22.7zM277.9 613.0h3.3v3.3h-3.3zM384.4 613.0h22.7v3.3h-22.7zM390.8 616.2h16.2v3.3h-16.2zM258.6 619.4h3.3v3.3h-3.3zM332.8 619.4h3.3v3.3h-3.3zM390.8 619.4h13.0v3.3h-13.0zM390.8 622.7h13.0v3.3h-13.0zM390.8 625.9h13.0v3.3h-13.0zM329.6 629.1h3.3v3.3h-3.3zM390.8 629.1h9.8v3.3h-9.8zM390.8 632.3h9.8v3.3h-9.8zM326.3 635.5h3.3v3.3h-3.3zM387.6 635.5h13.0v3.3h-13.0zM387.6 638.7h9.8v3.3h-9.8zM319.9 641.9h3.3v3.3h-3.3zM387.6 641.9h9.8v3.3h-9.8zM387.6 645.1h6.5v3.3h-6.5zM323.1 651.5h3.3v3.3h-3.3zM348.9 651.5h3.3v3.3h-3.3zM355.4 654.8h3.3v3.3h-3.3zM365.0 661.2h3.3v3.3h-3.3zM390.8 661.2h3.3v3.3h-3.3zM365.0 664.4h3.3v3.3h-3.3zM374.7 664.4h3.3v3.3h-3.3zM400.5 664.4h3.3v3.3h-3.3zM365.0 667.6h3.3v3.3h-3.3zM336.0 674.0h6.5v3.3h-6.5zM400.5 674.0h3.3v3.3h-3.3zM348.9 677.2h9.8v3.3h-9.8zM361.8 677.2h3.3v3.3h-3.3zM400.5 677.2h3.3v3.3h-3.3zM377.9 680.4h6.5v3.3h-6.5z"/><path fill="#3e4b89" d="M271.5 529.5h9.8v3.3h-9.8zM297.3 529.5h80.7v3.3h-80.7zM274.7 532.8h3.3v3.3h-3.3zM313.4 532.8h29.1v3.3h-29.1zM365.0 532.8h13.0v3.3h-13.0zM274.7 536.0h3.3v3.3h-3.3zM323.1 536.0h19.5v3.3h-19.5zM377.9 536.0h3.3v3.3h-3.3zM252.2 539.2h3.3v3.3h-3.3zM271.5 539.2h6.5v3.3h-6.5zM326.3 539.2h16.2v3.3h-16.2zM252.2 542.4h3.3v3.3h-3.3zM265.1 542.4h13.0v3.3h-13.0zM326.3 542.4h16.2v3.3h-16.2zM274.7 545.6h3.3v3.3h-3.3zM326.3 545.6h13.0v3.3h-13.0zM326.3 548.8h13.0v3.3h-13.0zM387.6 548.8h3.3v3.3h-3.3zM403.7 548.8h3.3v3.3h-3.3zM287.6 552.0h9.8v3.3h-9.8zM323.1 552.0h16.2v3.3h-16.2zM387.6 552.0h3.3v3.3h-3.3zM397.3 552.0h9.8v3.3h-9.8zM252.2 555.2h6.5v3.3h-6.5zM287.6 555.2h51.7v3.3h-51.7zM252.2 558.4h6.5v3.3h-6.5zM287.6 558.4h16.2v3.3h-16.2zM323.1 558.4h16.2v3.3h-16.2zM252.2 561.7h3.3v3.3h-3.3zM284.4 561.7h19.5v3.3h-19.5zM336.0 561.7h3.3v3.3h-3.3zM252.2 564.9h3.3v3.3h-3.3zM294.1 564.9h6.5v3.3h-6.5zM339.2 564.9h13.0v3.3h-13.0zM252.2 568.1h3.3v3.3h-3.3zM297.3 568.1h3.3v3.3h-3.3zM297.3 571.3h3.3v3.3h-3.3zM371.5 571.3h13.0v3.3h-13.0zM252.2 574.5h3.3v3.3h-3.3zM297.3 574.5h3.3v3.3h-3.3zM371.5 574.5h13.0v3.3h-13.0zM252.2 577.7h6.5v3.3h-6.5zM261.8 577.7h3.3v3.3h-3.3zM294.1 577.7h6.5v3.3h-6.5zM371.5 577.7h13.0v3.3h-13.0zM252.2 580.9h3.3v3.3h-3.3zM271.5 580.9h3.3v3.3h-3.3zM294.1 580.9h9.8v3.3h-9.8zM371.5 580.9h9.8v3.3h-9.8zM252.2 584.1h3.3v3.3h-3.3zM290.9 584.1h16.2v3.3h-16.2zM361.8 584.1h19.5v3.3h-19.5zM287.6 587.3h19.5v3.3h-19.5zM348.9 587.3h32.4v3.3h-32.4zM287.6 590.5h19.5v3.3h-19.5zM348.9 590.5h32.4v3.3h-32.4zM287.6 593.8h16.2v3.3h-16.2zM345.7 593.8h38.8v3.3h-38.8zM403.7 593.8h3.3v3.3h-3.3zM284.4 597.0h19.5v3.3h-19.5zM345.7 597.0h42.0v3.3h-42.0zM403.7 597.0h3.3v3.3h-3.3zM284.4 600.2h6.5v3.3h-6.5zM342.4 600.2h45.2v3.3h-45.2zM284.4 603.4h3.3v3.3h-3.3zM355.4 603.4h29.1v3.3h-29.1zM281.2 606.6h3.3v3.3h-3.3zM358.6 606.6h3.3v3.3h-3.3zM368.2 606.6h16.2v3.3h-16.2zM281.2 609.8h3.3v3.3h-3.3zM377.9 609.8h6.5v3.3h-6.5zM381.2 613.0h3.3v3.3h-3.3zM277.9 616.2h3.3v3.3h-3.3zM387.6 616.2h3.3v3.3h-3.3zM252.2 619.4h6.5v3.3h-6.5zM274.7 619.4h3.3v3.3h-3.3zM403.7 619.4h3.3v3.3h-3.3zM268.3 622.7h6.5v3.3h-6.5zM403.7 622.7h3.3v3.3h-3.3zM403.7 625.9h3.3v3.3h-3.3zM387.6 629.1h3.3v3.3h-3.3zM400.5 629.1h6.5v3.3h-6.5zM387.6 632.3h3.3v3.3h-3.3zM400.5 632.3h6.5v3.3h-6.5zM348.9 635.5h3.3v3.3h-3.3zM400.5 635.5h6.5v3.3h-6.5zM319.9 638.7h3.3v3.3h-3.3zM397.3 638.7h9.8v3.3h-9.8zM348.9 641.9h3.3v3.3h-3.3zM384.4 641.9h3.3v3.3h-3.3zM397.3 641.9h9.8v3.3h-9.8zM323.1 645.1h3.3v3.3h-3.3zM348.9 645.1h3.3v3.3h-3.3zM384.4 645.1h3.3v3.3h-3.3zM394.1 645.1h13.0v3.3h-13.0zM348.9 648.3h3.3v3.3h-3.3zM403.7 648.3h3.3v3.3h-3.3zM368.2 664.4h6.5v3.3h-6.5zM368.2 667.6h6.5v3.3h-6.5zM403.7 667.6h3.3v3.3h-3.3zM365.0 670.8h9.8v3.3h-9.8zM403.7 670.8h3.3v3.3h-3.3zM332.8 674.0h3.3v3.3h-3.3zM365.0 674.0h9.8v3.3h-9.8zM403.7 674.0h3.3v3.3h-3.3zM332.8 677.2h16.2v3.3h-16.2zM365.0 677.2h9.8v3.3h-9.8zM403.7 677.2h3.3v3.3h-3.3zM332.8 680.4h45.2v3.3h-45.2zM400.5 680.4h6.5v3.3h-6.5z"/><path fill="#3a548a" d="M377.9 529.5h3.3v3.3h-3.3zM403.7 529.5h3.3v3.3h-3.3zM271.5 532.8h3.3v3.3h-3.3zM377.9 532.8h3.3v3.3h-3.3zM271.5 536.0h3.3v3.3h-3.3zM255.4 539.2h6.5v3.3h-6.5zM387.6 545.6h3.3v3.3h-3.3zM403.7 545.6h3.3v3.3h-3.3zM390.8 548.8h13.0v3.3h-13.0zM258.6 558.4h3.3v3.3h-3.3zM268.3 558.4h3.3v3.3h-3.3zM303.8 558.4h19.5v3.3h-19.5zM255.4 561.7h3.3v3.3h-3.3zM329.6 561.7h6.5v3.3h-6.5zM255.4 564.9h3.3v3.3h-3.3zM290.9 564.9h3.3v3.3h-3.3zM300.5 564.9h3.3v3.3h-3.3zM294.1 568.1h3.3v3.3h-3.3zM300.5 568.1h3.3v3.3h-3.3zM252.2 571.3h3.3v3.3h-3.3zM294.1 571.3h3.3v3.3h-3.3zM300.5 571.3h3.3v3.3h-3.3zM368.2 571.3h3.3v3.3h-3.3zM294.1 574.5h3.3v3.3h-3.3zM300.5 577.7h3.3v3.3h-3.3zM290.9 580.9h3.3v3.3h-3.3zM303.8 580.9h3.3v3.3h-3.3zM368.2 580.9h3.3v3.3h-3.3zM281.2 584.1h3.3v3.3h-3.3zM287.6 584.1h3.3v3.3h-3.3zM307.0 584.1h3.3v3.3h-3.3zM348.9 584.1h13.0v3.3h-13.0zM307.0 587.3h3.3v3.3h-3.3zM345.7 587.3h3.3v3.3h-3.3zM307.0 590.5h3.3v3.3h-3.3zM345.7 590.5h3.3v3.3h-3.3zM303.8 593.8h3.3v3.3h-3.3zM303.8 597.0h3.3v3.3h-3.3zM342.4 597.0h3.3v3.3h-3.3zM290.9 600.2h13.0v3.3h-13.0zM287.6 603.4h3.3v3.3h-3.3zM284.4 606.6h3.3v3.3h-3.3zM336.0 606.6h3.3v3.3h-3.3zM361.8 606.6h6.5v3.3h-6.5zM284.4 609.8h3.3v3.3h-3.3zM368.2 609.8h9.8v3.3h-9.8zM281.2 613.0h3.3v3.3h-3.3zM377.9 613.0h3.3v3.3h-3.3zM281.2 616.2h3.3v3.3h-3.3zM332.8 616.2h3.3v3.3h-3.3zM355.4 616.2h3.3v3.3h-3.3zM384.4 616.2h3.3v3.3h-3.3zM387.6 619.4h3.3v3.3h-3.3zM329.6 625.9h3.3v3.3h-3.3zM352.1 625.9h3.3v3.3h-3.3zM387.6 625.9h3.3v3.3h-3.3zM348.9 638.7h3.3v3.3h-3.3zM384.4 638.7h3.3v3.3h-3.3zM323.1 648.3h3.3v3.3h-3.3zM387.6 648.3h16.2v3.3h-16.2zM403.7 651.5h3.3v3.3h-3.3zM358.6 654.8h3.3v3.3h-3.3zM365.0 658.0h3.3v3.3h-3.3zM319.9 661.2h3.3v3.3h-3.3zM368.2 661.2h3.3v3.3h-3.3zM394.1 661.2h3.3v3.3h-3.3zM319.9 664.4h3.3v3.3h-3.3zM403.7 664.4h3.3v3.3h-3.3zM326.3 670.8h3.3v3.3h-3.3zM329.6 674.0h3.3v3.3h-3.3zM329.6 677.2h3.3v3.3h-3.3zM252.2 680.4h6.5v3.3h-6.5zM329.6 680.4h3.3v3.3h-3.3z"/><path fill="#365c8c" d="M268.3 529.5h3.3v3.3h-3.3zM381.2 529.5h3.3v3.3h-3.3zM400.5 529.5h3.3v3.3h-3.3zM252.2 536.0h3.3v3.3h-3.3zM268.3 539.2h3.3v3.3h-3.3zM384.4 539.2h3.3v3.3h-3.3zM403.7 542.4h3.3v3.3h-3.3zM390.8 545.6h3.3v3.3h-3.3zM258.6 561.7h3.3v3.3h-3.3zM274.7 561.7h3.3v3.3h-3.3zM303.8 561.7h3.3v3.3h-3.3zM323.1 561.7h6.5v3.3h-6.5zM287.6 564.9h3.3v3.3h-3.3zM336.0 564.9h3.3v3.3h-3.3zM255.4 568.1h3.3v3.3h-3.3zM255.4 574.5h3.3v3.3h-3.3zM300.5 574.5h3.3v3.3h-3.3zM368.2 574.5h3.3v3.3h-3.3zM265.1 577.7h3.3v3.3h-3.3zM290.9 577.7h3.3v3.3h-3.3zM368.2 577.7h3.3v3.3h-3.3zM307.0 580.9h3.3v3.3h-3.3zM365.0 580.9h3.3v3.3h-3.3zM307.0 593.8h3.3v3.3h-3.3zM342.4 593.8h3.3v3.3h-3.3zM303.8 600.2h3.3v3.3h-3.3zM339.2 600.2h3.3v3.3h-3.3zM300.5 603.4h3.3v3.3h-3.3zM358.6 609.8h3.3v3.3h-3.3zM365.0 609.8h3.3v3.3h-3.3zM284.4 613.0h3.3v3.3h-3.3zM374.7 613.0h3.3v3.3h-3.3zM277.9 619.4h6.5v3.3h-6.5zM252.2 622.7h3.3v3.3h-3.3zM265.1 622.7h3.3v3.3h-3.3zM274.7 622.7h3.3v3.3h-3.3zM387.6 622.7h3.3v3.3h-3.3zM384.4 635.5h3.3v3.3h-3.3zM381.2 645.1h3.3v3.3h-3.3zM384.4 648.3h3.3v3.3h-3.3zM352.1 651.5h3.3v3.3h-3.3zM319.9 658.0h3.3v3.3h-3.3zM381.2 658.0h3.3v3.3h-3.3zM371.5 661.2h6.5v3.3h-6.5zM397.3 661.2h3.3v3.3h-3.3zM403.7 661.2h3.3v3.3h-3.3zM319.9 667.6h3.3v3.3h-3.3zM252.2 677.2h6.5v3.3h-6.5zM258.6 680.4h9.8v3.3h-9.8zM326.3 680.4h3.3v3.3h-3.3z"/><path fill="#33658d" d="M394.1 529.5h6.5v3.3h-6.5zM381.2 532.8h3.3v3.3h-3.3zM403.7 532.8h3.3v3.3h-3.3zM381.2 536.0h3.3v3.3h-3.3zM403.7 536.0h3.3v3.3h-3.3zM403.7 539.2h3.3v3.3h-3.3zM387.6 542.4h3.3v3.3h-3.3zM394.1 545.6h9.8v3.3h-9.8zM261.8 558.4h3.3v3.3h-3.3zM316.7 561.7h6.5v3.3h-6.5zM303.8 564.9h3.3v3.3h-3.3zM332.8 564.9h3.3v3.3h-3.3zM290.9 568.1h3.3v3.3h-3.3zM339.2 568.1h6.5v3.3h-6.5zM255.4 571.3h3.3v3.3h-3.3zM290.9 574.5h3.3v3.3h-3.3zM303.8 577.7h3.3v3.3h-3.3zM274.7 580.9h3.3v3.3h-3.3zM287.6 580.9h3.3v3.3h-3.3zM284.4 584.1h3.3v3.3h-3.3zM310.2 584.1h3.3v3.3h-3.3zM345.7 584.1h3.3v3.3h-3.3zM310.2 587.3h3.3v3.3h-3.3zM342.4 590.5h3.3v3.3h-3.3zM307.0 597.0h3.3v3.3h-3.3zM290.9 603.4h3.3v3.3h-3.3zM297.3 603.4h3.3v3.3h-3.3zM303.8 603.4h3.3v3.3h-3.3zM287.6 606.6h3.3v3.3h-3.3zM361.8 609.8h3.3v3.3h-3.3zM284.4 616.2h3.3v3.3h-3.3zM381.2 616.2h3.3v3.3h-3.3zM255.4 622.7h9.8v3.3h-9.8zM277.9 622.7h3.3v3.3h-3.3zM252.2 625.9h3.3v3.3h-3.3zM252.2 629.1h3.3v3.3h-3.3zM326.3 632.3h3.3v3.3h-3.3zM384.4 632.3h3.3v3.3h-3.3zM352.1 641.9h3.3v3.3h-3.3zM381.2 641.9h3.3v3.3h-3.3zM319.9 645.1h3.3v3.3h-3.3zM352.1 645.1h3.3v3.3h-3.3zM352.1 648.3h3.3v3.3h-3.3zM319.9 651.5h3.3v3.3h-3.3zM397.3 651.5h6.5v3.3h-6.5zM319.9 654.8h3.3v3.3h-3.3zM361.8 654.8h3.3v3.3h-3.3zM403.7 654.8h3.3v3.3h-3.3zM377.9 658.0h3.3v3.3h-3.3zM384.4 658.0h3.3v3.3h-3.3zM403.7 658.0h3.3v3.3h-3.3zM400.5 661.2h3.3v3.3h-3.3zM323.1 670.8h3.3v3.3h-3.3zM252.2 674.0h3.3v3.3h-3.3zM326.3 674.0h3.3v3.3h-3.3zM258.6 677.2h6.5v3.3h-6.5zM326.3 677.2h3.3v3.3h-3.3zM268.3 680.4h6.5v3.3h-6.5zM323.1 680.4h3.3v3.3h-3.3z"/><path fill="#2f6d8e" d="M384.4 529.5h9.8v3.3h-9.8zM400.5 532.8h3.3v3.3h-3.3zM255.4 536.0h3.3v3.3h-3.3zM261.8 539.2h3.3v3.3h-3.3zM400.5 542.4h3.3v3.3h-3.3zM265.1 558.4h3.3v3.3h-3.3zM307.0 561.7h3.3v3.3h-3.3zM313.4 561.7h3.3v3.3h-3.3zM258.6 564.9h3.3v3.3h-3.3zM281.2 564.9h6.5v3.3h-6.5zM329.6 564.9h3.3v3.3h-3.3zM303.8 568.1h3.3v3.3h-3.3zM336.0 568.1h3.3v3.3h-3.3zM345.7 568.1h3.3v3.3h-3.3zM365.0 568.1h3.3v3.3h-3.3zM290.9 571.3h3.3v3.3h-3.3zM258.6 574.5h3.3v3.3h-3.3zM310.2 580.9h3.3v3.3h-3.3zM361.8 580.9h3.3v3.3h-3.3zM294.1 603.4h3.3v3.3h-3.3zM287.6 609.8h3.3v3.3h-3.3zM371.5 613.0h3.3v3.3h-3.3zM355.4 619.4h3.3v3.3h-3.3zM281.2 622.7h3.3v3.3h-3.3zM255.4 625.9h3.3v3.3h-3.3zM352.1 629.1h3.3v3.3h-3.3zM252.2 632.3h3.3v3.3h-3.3zM323.1 635.5h3.3v3.3h-3.3zM319.9 648.3h3.3v3.3h-3.3zM381.2 648.3h3.3v3.3h-3.3zM390.8 651.5h6.5v3.3h-6.5zM368.2 658.0h3.3v3.3h-3.3zM387.6 658.0h3.3v3.3h-3.3zM255.4 674.0h3.3v3.3h-3.3zM265.1 677.2h3.3v3.3h-3.3zM323.1 677.2h3.3v3.3h-3.3zM274.7 680.4h3.3v3.3h-3.3zM313.4 680.4h9.8v3.3h-9.8z"/><path fill="#2b758e" d="M384.4 532.8h3.3v3.3h-3.3zM397.3 532.8h3.3v3.3h-3.3zM268.3 536.0h3.3v3.3h-3.3zM384.4 536.0h3.3v3.3h-3.3zM400.5 536.0h3.3v3.3h-3.3zM265.1 539.2h3.3v3.3h-3.3zM387.6 539.2h3.3v3.3h-3.3zM400.5 539.2h3.3v3.3h-3.3zM390.8 542.4h9.8v3.3h-9.8zM271.5 561.7h3.3v3.3h-3.3zM310.2 561.7h3.3v3.3h-3.3zM326.3 564.9h3.3v3.3h-3.3zM348.9 568.1h3.3v3.3h-3.3zM303.8 571.3h3.3v3.3h-3.3zM303.8 574.5h3.3v3.3h-3.3zM268.3 577.7h3.3v3.3h-3.3zM287.6 577.7h3.3v3.3h-3.3zM307.0 577.7h3.3v3.3h-3.3zM277.9 580.9h3.3v3.3h-3.3zM358.6 580.9h3.3v3.3h-3.3zM342.4 587.3h3.3v3.3h-3.3zM310.2 590.5h3.3v3.3h-3.3zM339.2 597.0h3.3v3.3h-3.3zM307.0 600.2h3.3v3.3h-3.3zM336.0 603.4h3.3v3.3h-3.3zM287.6 613.0h3.3v3.3h-3.3zM332.8 613.0h3.3v3.3h-3.3zM358.6 613.0h3.3v3.3h-3.3zM368.2 613.0h3.3v3.3h-3.3zM377.9 616.2h3.3v3.3h-3.3zM284.4 619.4h3.3v3.3h-3.3zM384.4 619.4h3.3v3.3h-3.3zM329.6 622.7h3.3v3.3h-3.3zM258.6 625.9h3.3v3.3h-3.3zM268.3 625.9h13.0v3.3h-13.0zM255.4 629.1h3.3v3.3h-3.3zM384.4 629.1h3.3v3.3h-3.3zM252.2 635.5h3.3v3.3h-3.3zM252.2 638.7h3.3v3.3h-3.3zM381.2 638.7h3.3v3.3h-3.3zM316.7 641.9h3.3v3.3h-3.3zM355.4 641.9h3.3v3.3h-3.3zM355.4 645.1h3.3v3.3h-3.3zM377.9 648.3h3.3v3.3h-3.3zM355.4 651.5h3.3v3.3h-3.3zM384.4 651.5h6.5v3.3h-6.5zM316.7 654.8h3.3v3.3h-3.3zM365.0 654.8h3.3v3.3h-3.3zM400.5 654.8h3.3v3.3h-3.3zM316.7 658.0h3.3v3.3h-3.3zM371.5 658.0h6.5v3.3h-6.5zM390.8 658.0h3.3v3.3h-3.3zM400.5 658.0h3.3v3.3h-3.3zM316.7 661.2h3.3v3.3h-3.3zM316.7 664.4h3.3v3.3h-3.3zM316.7 667.6h3.3v3.3h-3.3zM252.2 670.8h3.3v3.3h-3.3zM319.9 670.8h3.3v3.3h-3.3zM258.6 674.0h6.5v3.3h-6.5zM323.1 674.0h3.3v3.3h-3.3zM268.3 677.2h6.5v3.3h-6.5zM316.7 677.2h6.5v3.3h-6.5zM277.9 680.4h6.5v3.3h-6.5zM310.2 680.4h3.3v3.3h-3.3z"/><path fill="#287d8e" d="M265.1 529.5h3.3v3.3h-3.3zM268.3 532.8h3.3v3.3h-3.3zM387.6 532.8h9.8v3.3h-9.8zM387.6 536.0h3.3v3.3h-3.3zM397.3 536.0h3.3v3.3h-3.3zM390.8 539.2h9.8v3.3h-9.8zM261.8 561.7h3.3v3.3h-3.3zM277.9 564.9h3.3v3.3h-3.3zM307.0 564.9h3.3v3.3h-3.3zM323.1 564.9h3.3v3.3h-3.3zM258.6 568.1h3.3v3.3h-3.3zM287.6 568.1h3.3v3.3h-3.3zM352.1 568.1h3.3v3.3h-3.3zM261.8 574.5h3.3v3.3h-3.3zM284.4 580.9h3.3v3.3h-3.3zM355.4 580.9h3.3v3.3h-3.3zM290.9 606.6h3.3v3.3h-3.3zM300.5 606.6h6.5v3.3h-6.5zM365.0 613.0h3.3v3.3h-3.3zM284.4 622.7h3.3v3.3h-3.3zM355.4 622.7h3.3v3.3h-3.3zM261.8 625.9h6.5v3.3h-6.5zM281.2 625.9h3.3v3.3h-3.3zM384.4 625.9h3.3v3.3h-3.3zM258.6 629.1h3.3v3.3h-3.3zM255.4 632.3h3.3v3.3h-3.3zM352.1 632.3h3.3v3.3h-3.3zM255.4 635.5h3.3v3.3h-3.3zM319.9 635.5h3.3v3.3h-3.3zM255.4 638.7h3.3v3.3h-3.3zM316.7 638.7h3.3v3.3h-3.3zM352.1 638.7h3.3v3.3h-3.3zM252.2 641.9h3.3v3.3h-3.3zM358.6 641.9h3.3v3.3h-3.3zM252.2 645.1h3.3v3.3h-3.3zM316.7 645.1h3.3v3.3h-3.3zM358.6 645.1h9.8v3.3h-9.8zM377.9 645.1h3.3v3.3h-3.3zM252.2 648.3h3.3v3.3h-3.3zM316.7 648.3h3.3v3.3h-3.3zM355.4 648.3h6.5v3.3h-6.5zM371.5 648.3h6.5v3.3h-6.5zM316.7 651.5h3.3v3.3h-3.3zM358.6 651.5h6.5v3.3h-6.5zM377.9 651.5h6.5v3.3h-6.5zM368.2 654.8h3.3v3.3h-3.3zM377.9 654.8h22.7v3.3h-22.7zM313.4 658.0h3.3v3.3h-3.3zM394.1 658.0h6.5v3.3h-6.5zM310.2 661.2h6.5v3.3h-6.5zM303.8 664.4h13.0v3.3h-13.0zM252.2 667.6h3.3v3.3h-3.3zM300.5 667.6h16.2v3.3h-16.2zM255.4 670.8h9.8v3.3h-9.8zM300.5 670.8h19.5v3.3h-19.5zM265.1 674.0h9.8v3.3h-9.8zM300.5 674.0h22.7v3.3h-22.7zM274.7 677.2h9.8v3.3h-9.8zM303.8 677.2h13.0v3.3h-13.0zM284.4 680.4h9.8v3.3h-9.8zM303.8 680.4h6.5v3.3h-6.5z"/><path fill="#25858d" d="M390.8 536.0h6.5v3.3h-6.5zM268.3 561.7h3.3v3.3h-3.3zM316.7 564.9h6.5v3.3h-6.5zM284.4 568.1h3.3v3.3h-3.3zM307.0 568.1h3.3v3.3h-3.3zM332.8 568.1h3.3v3.3h-3.3zM355.4 568.1h9.8v3.3h-9.8zM258.6 571.3h3.3v3.3h-3.3zM287.6 571.3h3.3v3.3h-3.3zM287.6 574.5h3.3v3.3h-3.3zM271.5 577.7h3.3v3.3h-3.3zM310.2 577.7h3.3v3.3h-3.3zM281.2 580.9h3.3v3.3h-3.3zM313.4 580.9h3.3v3.3h-3.3zM352.1 580.9h3.3v3.3h-3.3zM342.4 584.1h3.3v3.3h-3.3zM310.2 593.8h3.3v3.3h-3.3zM339.2 593.8h3.3v3.3h-3.3zM307.0 603.4h3.3v3.3h-3.3zM294.1 606.6h6.5v3.3h-6.5zM290.9 609.8h3.3v3.3h-3.3zM361.8 613.0h3.3v3.3h-3.3zM287.6 616.2h3.3v3.3h-3.3zM374.7 616.2h3.3v3.3h-3.3zM381.2 619.4h3.3v3.3h-3.3zM384.4 622.7h3.3v3.3h-3.3zM261.8 629.1h19.5v3.3h-19.5zM258.6 632.3h19.5v3.3h-19.5zM258.6 635.5h6.5v3.3h-6.5zM352.1 635.5h3.3v3.3h-3.3zM381.2 635.5h3.3v3.3h-3.3zM258.6 638.7h3.3v3.3h-3.3zM255.4 641.9h6.5v3.3h-6.5zM361.8 641.9h3.3v3.3h-3.3zM255.4 645.1h3.3v3.3h-3.3zM368.2 645.1h3.3v3.3h-3.3zM255.4 648.3h3.3v3.3h-3.3zM361.8 648.3h9.8v3.3h-9.8zM252.2 651.5h6.5v3.3h-6.5zM365.0 651.5h13.0v3.3h-13.0zM252.2 654.8h6.5v3.3h-6.5zM313.4 654.8h3.3v3.3h-3.3zM371.5 654.8h6.5v3.3h-6.5zM252.2 658.0h3.3v3.3h-3.3zM303.8 658.0h9.8v3.3h-9.8zM252.2 661.2h6.5v3.3h-6.5zM297.3 661.2h13.0v3.3h-13.0zM252.2 664.4h9.8v3.3h-9.8zM297.3 664.4h6.5v3.3h-6.5zM255.4 667.6h13.0v3.3h-13.0zM297.3 667.6h3.3v3.3h-3.3zM265.1 670.8h13.0v3.3h-13.0zM294.1 670.8h6.5v3.3h-6.5zM274.7 674.0h16.2v3.3h-16.2zM294.1 674.0h6.5v3.3h-6.5zM284.4 677.2h19.5v3.3h-19.5zM294.1 680.4h9.8v3.3h-9.8z"/><path fill="#228d8c" d="M252.2 532.8h3.3v3.3h-3.3zM265.1 561.7h3.3v3.3h-3.3zM261.8 564.9h3.3v3.3h-3.3zM274.7 564.9h3.3v3.3h-3.3zM310.2 564.9h6.5v3.3h-6.5zM281.2 568.1h3.3v3.3h-3.3zM329.6 568.1h3.3v3.3h-3.3zM284.4 571.3h3.3v3.3h-3.3zM307.0 571.3h3.3v3.3h-3.3zM365.0 571.3h3.3v3.3h-3.3zM265.1 574.5h3.3v3.3h-3.3zM284.4 574.5h3.3v3.3h-3.3zM307.0 574.5h3.3v3.3h-3.3zM281.2 577.7h6.5v3.3h-6.5zM365.0 577.7h3.3v3.3h-3.3zM348.9 580.9h3.3v3.3h-3.3zM313.4 584.1h3.3v3.3h-3.3zM290.9 613.0h3.3v3.3h-3.3zM358.6 616.2h3.3v3.3h-3.3zM371.5 616.2h3.3v3.3h-3.3zM287.6 619.4h3.3v3.3h-3.3zM284.4 625.9h3.3v3.3h-3.3zM355.4 625.9h3.3v3.3h-3.3zM281.2 629.1h3.3v3.3h-3.3zM326.3 629.1h3.3v3.3h-3.3zM277.9 632.3h3.3v3.3h-3.3zM265.1 635.5h16.2v3.3h-16.2zM261.8 638.7h16.2v3.3h-16.2zM355.4 638.7h3.3v3.3h-3.3zM261.8 641.9h16.2v3.3h-16.2zM365.0 641.9h3.3v3.3h-3.3zM377.9 641.9h3.3v3.3h-3.3zM258.6 645.1h22.7v3.3h-22.7zM371.5 645.1h6.5v3.3h-6.5zM258.6 648.3h25.9v3.3h-25.9zM313.4 648.3h3.3v3.3h-3.3zM258.6 651.5h35.6v3.3h-35.6zM313.4 651.5h3.3v3.3h-3.3zM258.6 654.8h54.9v3.3h-54.9zM255.4 658.0h48.5v3.3h-48.5zM258.6 661.2h38.8v3.3h-38.8zM261.8 664.4h35.6v3.3h-35.6zM268.3 667.6h29.1v3.3h-29.1zM277.9 670.8h16.2v3.3h-16.2zM290.9 674.0h3.3v3.3h-3.3z"/><path fill="#21958b" d="M258.6 536.0h3.3v3.3h-3.3zM265.1 564.9h3.3v3.3h-3.3zM271.5 564.9h3.3v3.3h-3.3zM261.8 568.1h3.3v3.3h-3.3zM277.9 568.1h3.3v3.3h-3.3zM310.2 568.1h19.5v3.3h-19.5zM261.8 571.3h3.3v3.3h-3.3zM281.2 571.3h3.3v3.3h-3.3zM310.2 571.3h6.5v3.3h-6.5zM281.2 574.5h3.3v3.3h-3.3zM310.2 574.5h6.5v3.3h-6.5zM365.0 574.5h3.3v3.3h-3.3zM274.7 577.7h6.5v3.3h-6.5zM313.4 577.7h3.3v3.3h-3.3zM313.4 587.3h3.3v3.3h-3.3zM310.2 597.0h3.3v3.3h-3.3zM336.0 600.2h3.3v3.3h-3.3zM294.1 609.8h9.8v3.3h-9.8zM332.8 609.8h3.3v3.3h-3.3zM290.9 616.2h3.3v3.3h-3.3zM361.8 616.2h9.8v3.3h-9.8zM290.9 619.4h3.3v3.3h-3.3zM329.6 619.4h3.3v3.3h-3.3zM358.6 619.4h3.3v3.3h-3.3zM374.7 619.4h6.5v3.3h-6.5zM287.6 622.7h3.3v3.3h-3.3zM358.6 622.7h3.3v3.3h-3.3zM381.2 622.7h3.3v3.3h-3.3zM287.6 625.9h3.3v3.3h-3.3zM284.4 629.1h3.3v3.3h-3.3zM355.4 629.1h3.3v3.3h-3.3zM281.2 632.3h6.5v3.3h-6.5zM355.4 632.3h3.3v3.3h-3.3zM381.2 632.3h3.3v3.3h-3.3zM281.2 635.5h3.3v3.3h-3.3zM316.7 635.5h3.3v3.3h-3.3zM355.4 635.5h3.3v3.3h-3.3zM277.9 638.7h6.5v3.3h-6.5zM313.4 638.7h3.3v3.3h-3.3zM358.6 638.7h3.3v3.3h-3.3zM277.9 641.9h6.5v3.3h-6.5zM313.4 641.9h3.3v3.3h-3.3zM368.2 641.9h3.3v3.3h-3.3zM281.2 645.1h6.5v3.3h-6.5zM313.4 645.1h3.3v3.3h-3.3zM284.4 648.3h13.0v3.3h-13.0zM310.2 648.3h3.3v3.3h-3.3zM294.1 651.5h19.5v3.3h-19.5z"/><path fill="#219c88" d="M261.8 529.5h3.3v3.3h-3.3zM268.3 564.9h3.3v3.3h-3.3zM265.1 571.3h3.3v3.3h-3.3zM277.9 571.3h3.3v3.3h-3.3zM316.7 571.3h3.3v3.3h-3.3zM268.3 574.5h3.3v3.3h-3.3zM277.9 574.5h3.3v3.3h-3.3zM345.7 580.9h3.3v3.3h-3.3zM339.2 590.5h3.3v3.3h-3.3zM307.0 606.6h3.3v3.3h-3.3zM303.8 609.8h3.3v3.3h-3.3zM294.1 613.0h9.8v3.3h-9.8zM294.1 616.2h6.5v3.3h-6.5zM294.1 619.4h6.5v3.3h-6.5zM361.8 619.4h13.0v3.3h-13.0zM290.9 622.7h9.8v3.3h-9.8zM361.8 622.7h6.5v3.3h-6.5zM377.9 622.7h3.3v3.3h-3.3zM290.9 625.9h9.8v3.3h-9.8zM358.6 625.9h6.5v3.3h-6.5zM381.2 625.9h3.3v3.3h-3.3zM287.6 629.1h13.0v3.3h-13.0zM358.6 629.1h6.5v3.3h-6.5zM381.2 629.1h3.3v3.3h-3.3zM287.6 632.3h16.2v3.3h-16.2zM323.1 632.3h3.3v3.3h-3.3zM358.6 632.3h3.3v3.3h-3.3zM284.4 635.5h32.4v3.3h-32.4zM358.6 635.5h6.5v3.3h-6.5zM284.4 638.7h29.1v3.3h-29.1zM361.8 638.7h6.5v3.3h-6.5zM377.9 638.7h3.3v3.3h-3.3zM284.4 641.9h29.1v3.3h-29.1zM371.5 641.9h6.5v3.3h-6.5zM287.6 645.1h25.9v3.3h-25.9zM297.3 648.3h13.0v3.3h-13.0z"/><path fill="#22a486" d="M265.1 568.1h13.0v3.3h-13.0zM268.3 571.3h3.3v3.3h-3.3zM319.9 571.3h9.8v3.3h-9.8zM336.0 571.3h3.3v3.3h-3.3zM271.5 574.5h6.5v3.3h-6.5zM316.7 574.5h3.3v3.3h-3.3zM316.7 577.7h3.3v3.3h-3.3zM313.4 590.5h3.3v3.3h-3.3zM310.2 600.2h3.3v3.3h-3.3zM303.8 613.0h3.3v3.3h-3.3zM300.5 616.2h3.3v3.3h-3.3zM300.5 619.4h3.3v3.3h-3.3zM300.5 622.7h3.3v3.3h-3.3zM368.2 622.7h9.8v3.3h-9.8zM300.5 625.9h3.3v3.3h-3.3zM365.0 625.9h3.3v3.3h-3.3zM377.9 625.9h3.3v3.3h-3.3zM300.5 629.1h3.3v3.3h-3.3zM365.0 629.1h3.3v3.3h-3.3zM303.8 632.3h6.5v3.3h-6.5zM361.8 632.3h3.3v3.3h-3.3zM365.0 635.5h3.3v3.3h-3.3zM377.9 635.5h3.3v3.3h-3.3zM368.2 638.7h9.8v3.3h-9.8z"/><path fill="#26ab81" d="M271.5 571.3h6.5v3.3h-6.5zM329.6 571.3h6.5v3.3h-6.5zM319.9 574.5h3.3v3.3h-3.3zM361.8 577.7h3.3v3.3h-3.3zM316.7 580.9h3.3v3.3h-3.3zM339.2 587.3h3.3v3.3h-3.3zM332.8 606.6h3.3v3.3h-3.3zM307.0 609.8h3.3v3.3h-3.3zM303.8 616.2h3.3v3.3h-3.3zM329.6 616.2h3.3v3.3h-3.3zM303.8 619.4h3.3v3.3h-3.3zM303.8 625.9h3.3v3.3h-3.3zM326.3 625.9h3.3v3.3h-3.3zM368.2 625.9h9.8v3.3h-9.8zM303.8 629.1h6.5v3.3h-6.5zM368.2 629.1h3.3v3.3h-3.3zM374.7 629.1h6.5v3.3h-6.5zM310.2 632.3h13.0v3.3h-13.0zM365.0 632.3h6.5v3.3h-6.5zM374.7 632.3h6.5v3.3h-6.5zM368.2 635.5h9.8v3.3h-9.8z"/><path fill="#31b27b" d="M252.2 529.5h3.3v3.3h-3.3zM261.8 536.0h6.5v3.3h-6.5zM339.2 571.3h3.3v3.3h-3.3zM323.1 574.5h3.3v3.3h-3.3zM342.4 580.9h3.3v3.3h-3.3zM316.7 584.1h3.3v3.3h-3.3zM313.4 593.8h3.3v3.3h-3.3zM336.0 597.0h3.3v3.3h-3.3zM310.2 603.4h3.3v3.3h-3.3zM307.0 613.0h3.3v3.3h-3.3zM303.8 622.7h3.3v3.3h-3.3zM310.2 629.1h3.3v3.3h-3.3zM371.5 629.1h3.3v3.3h-3.3zM371.5 632.3h3.3v3.3h-3.3z"/><path fill="#3cba75" d="M255.4 532.8h3.3v3.3h-3.3zM265.1 532.8h3.3v3.3h-3.3zM342.4 571.3h3.3v3.3h-3.3zM361.8 571.3h3.3v3.3h-3.3zM326.3 574.5h3.3v3.3h-3.3zM319.9 577.7h3.3v3.3h-3.3zM358.6 577.7h3.3v3.3h-3.3zM339.2 584.1h3.3v3.3h-3.3zM307.0 616.2h3.3v3.3h-3.3zM307.0 625.9h3.3v3.3h-3.3zM313.4 629.1h3.3v3.3h-3.3z"/><path fill="#49c16d" d="M258.6 529.5h3.3v3.3h-3.3zM345.7 571.3h3.3v3.3h-3.3zM329.6 574.5h6.5v3.3h-6.5zM361.8 574.5h3.3v3.3h-3.3zM355.4 577.7h3.3v3.3h-3.3zM319.9 580.9h3.3v3.3h-3.3zM316.7 587.3h3.3v3.3h-3.3zM336.0 593.8h3.3v3.3h-3.3zM313.4 597.0h3.3v3.3h-3.3zM332.8 603.4h3.3v3.3h-3.3zM310.2 606.6h3.3v3.3h-3.3zM329.6 613.0h3.3v3.3h-3.3zM307.0 619.4h3.3v3.3h-3.3zM307.0 622.7h3.3v3.3h-3.3zM326.3 622.7h3.3v3.3h-3.3zM316.7 629.1h3.3v3.3h-3.3zM323.1 629.1h3.3v3.3h-3.3z"/><path fill="#5bc763" d="M348.9 571.3h3.3v3.3h-3.3zM336.0 574.5h3.3v3.3h-3.3zM323.1 577.7h3.3v3.3h-3.3zM352.1 577.7h3.3v3.3h-3.3zM339.2 580.9h3.3v3.3h-3.3zM313.4 600.2h3.3v3.3h-3.3zM310.2 609.8h3.3v3.3h-3.3zM310.2 625.9h3.3v3.3h-3.3zM319.9 629.1h3.3v3.3h-3.3z"/><path fill="#6ccc59" d="M255.4 529.5h3.3v3.3h-3.3zM258.6 532.8h6.5v3.3h-6.5zM352.1 571.3h3.3v3.3h-3.3zM358.6 571.3h3.3v3.3h-3.3zM326.3 577.7h13.0v3.3h-13.0zM348.9 577.7h3.3v3.3h-3.3zM336.0 580.9h3.3v3.3h-3.3zM319.9 584.1h3.3v3.3h-3.3zM336.0 587.3h3.3v3.3h-3.3zM316.7 590.5h3.3v3.3h-3.3zM336.0 590.5h3.3v3.3h-3.3zM332.8 600.2h3.3v3.3h-3.3zM329.6 609.8h3.3v3.3h-3.3zM310.2 613.0h3.3v3.3h-3.3zM326.3 619.4h3.3v3.3h-3.3zM313.4 625.9h3.3v3.3h-3.3zM323.1 625.9h3.3v3.3h-3.3z"/><path fill="#7ed24e" d="M355.4 571.3h3.3v3.3h-3.3zM339.2 577.7h9.8v3.3h-9.8zM323.1 580.9h3.3v3.3h-3.3zM332.8 580.9h3.3v3.3h-3.3zM336.0 584.1h3.3v3.3h-3.3zM316.7 593.8h3.3v3.3h-3.3zM313.4 603.4h3.3v3.3h-3.3zM310.2 616.2h3.3v3.3h-3.3zM310.2 619.4h3.3v3.3h-3.3zM310.2 622.7h3.3v3.3h-3.3zM323.1 622.7h3.3v3.3h-3.3zM316.7 625.9h6.5v3.3h-6.5z"/><path fill="#94d640" d="M339.2 574.5h3.3v3.3h-3.3zM358.6 574.5h3.3v3.3h-3.3zM326.3 580.9h6.5v3.3h-6.5zM332.8 584.1h3.3v3.3h-3.3zM332.8 597.0h3.3v3.3h-3.3zM329.6 606.6h3.3v3.3h-3.3zM326.3 616.2h3.3v3.3h-3.3zM313.4 619.4h3.3v3.3h-3.3zM313.4 622.7h9.8v3.3h-9.8z"/><path fill="#aadb32" d="M342.4 574.5h6.5v3.3h-6.5zM352.1 574.5h6.5v3.3h-6.5zM323.1 584.1h9.8v3.3h-9.8zM319.9 587.3h3.3v3.3h-3.3zM332.8 587.3h3.3v3.3h-3.3zM332.8 590.5h3.3v3.3h-3.3zM332.8 593.8h3.3v3.3h-3.3zM316.7 597.0h3.3v3.3h-3.3zM329.6 603.4h3.3v3.3h-3.3zM313.4 606.6h3.3v3.3h-3.3zM326.3 613.0h3.3v3.3h-3.3zM313.4 616.2h3.3v3.3h-3.3zM316.7 619.4h9.8v3.3h-9.8z"/><path fill="#bfdf26" d="M348.9 574.5h3.3v3.3h-3.3zM329.6 587.3h3.3v3.3h-3.3zM329.6 600.2h3.3v3.3h-3.3zM313.4 609.8h3.3v3.3h-3.3zM326.3 609.8h3.3v3.3h-3.3zM323.1 616.2h3.3v3.3h-3.3z"/><path fill="#d4e226" d="M323.1 587.3h6.5v3.3h-6.5zM319.9 590.5h3.3v3.3h-3.3zM329.6 597.0h3.3v3.3h-3.3zM316.7 600.2h3.3v3.3h-3.3zM316.7 603.4h3.3v3.3h-3.3zM326.3 606.6h3.3v3.3h-3.3zM313.4 613.0h3.3v3.3h-3.3zM316.7 616.2h6.5v3.3h-6.5z"/><path fill="#e8e425" d="M323.1 590.5h3.3v3.3h-3.3zM329.6 590.5h3.3v3.3h-3.3zM319.9 593.8h3.3v3.3h-3.3zM329.6 593.8h3.3v3.3h-3.3zM319.9 597.0h3.3v3.3h-3.3zM326.3 600.2h3.3v3.3h-3.3zM326.3 603.4h3.3v3.3h-3.3zM316.7 606.6h3.3v3.3h-3.3zM316.7 609.8h3.3v3.3h-3.3zM323.1 609.8h3.3v3.3h-3.3zM316.7 613.0h9.8v3.3h-9.8z"/><path fill="#fde725" d="M326.3 590.5h3.3v3.3h-3.3zM323.1 593.8h6.5v3.3h-6.5zM323.1 597.0h6.5v3.3h-6.5zM319.9 600.2h6.5v3.3h-6.5zM319.9 603.4h6.5v3.3h-6.5zM319.9 606.6h6.5v3.3h-6.5zM319.9 609.8h3.3v3.3h-3.3z"/></g></g>
<rect x="281.09" y="558.39" width="96.42" height="96.42" fill="none" stroke="#ff0000" stroke-width="1.45" />
<text xml:space="preserve" class="s" x="329.30" y="546.40" font-size="10.70" fill="#ff0000" text-anchor="middle" stroke="#ff0000" stroke-width="0.35">N</text>
<text xml:space="preserve" class="s" x="265.82" y="610.40" font-size="10.70" fill="#ff0000" text-anchor="middle" stroke="#ff0000" stroke-width="0.35">E</text>
<line x1="291.86" y1="606.60" x2="321.26" y2="606.60" stroke="#ff0000" stroke-width="1.2" />
<line x1="337.34" y1="606.60" x2="366.26" y2="606.60" stroke="#ff0000" stroke-width="1.2" />
<line x1="329.30" y1="569.64" x2="329.30" y2="599.37" stroke="#ff0000" stroke-width="1.2" />
<line x1="329.30" y1="613.83" x2="329.30" y2="644.04" stroke="#ff0000" stroke-width="1.2" />
<rect x="255.40" y="532.80" width="148.40" height="147.70" fill="none" stroke="#222" stroke-width="1.2" />
<line x1="265.02" y1="680.50" x2="265.02" y2="684.50" stroke="#222" stroke-width="0.9" />
<text xml:space="preserve" class="s" x="265.02" y="696.10" font-size="9.73" fill="#111" text-anchor="middle" >−4</text>
<line x1="251.40" y1="670.88" x2="255.40" y2="670.88" stroke="#222" stroke-width="0.9" />
<text xml:space="preserve" class="s" x="248.40" y="674.48" font-size="9.73" fill="#111" text-anchor="end" >−4</text>
<line x1="297.16" y1="680.50" x2="297.16" y2="684.50" stroke="#222" stroke-width="0.9" />
<text xml:space="preserve" class="s" x="297.16" y="696.10" font-size="9.73" fill="#111" text-anchor="middle" >−2</text>
<line x1="251.40" y1="638.74" x2="255.40" y2="638.74" stroke="#222" stroke-width="0.9" />
<text xml:space="preserve" class="s" x="248.40" y="642.34" font-size="9.73" fill="#111" text-anchor="end" >−2</text>
<line x1="329.30" y1="680.50" x2="329.30" y2="684.50" stroke="#222" stroke-width="0.9" />
<text xml:space="preserve" class="s" x="329.30" y="696.10" font-size="9.73" fill="#111" text-anchor="middle" >0</text>
<line x1="251.40" y1="606.60" x2="255.40" y2="606.60" stroke="#222" stroke-width="0.9" />
<text xml:space="preserve" class="s" x="248.40" y="610.20" font-size="9.73" fill="#111" text-anchor="end" >0</text>
<line x1="361.44" y1="680.50" x2="361.44" y2="684.50" stroke="#222" stroke-width="0.9" />
<text xml:space="preserve" class="s" x="361.44" y="696.10" font-size="9.73" fill="#111" text-anchor="middle" >2</text>
<line x1="251.40" y1="574.46" x2="255.40" y2="574.46" stroke="#222" stroke-width="0.9" />
<text xml:space="preserve" class="s" x="248.40" y="578.06" font-size="9.73" fill="#111" text-anchor="end" >2</text>
<line x1="393.58" y1="680.50" x2="393.58" y2="684.50" stroke="#222" stroke-width="0.9" />
<text xml:space="preserve" class="s" x="393.58" y="696.10" font-size="9.73" fill="#111" text-anchor="middle" >4</text>
<line x1="251.40" y1="542.32" x2="255.40" y2="542.32" stroke="#222" stroke-width="0.9" />
<text xml:space="preserve" class="s" x="248.40" y="545.92" font-size="9.73" fill="#111" text-anchor="end" >4</text>
<text xml:space="preserve" class="s" x="329.30" y="525.40" font-size="12.97" fill="#111" text-anchor="middle" >Lineflux Map</text>
<text xml:space="preserve" class="s" x="329.30" y="706.30" font-size="10.80" fill="#111" text-anchor="middle" >s/b: 1.75 +/- 0.084</text>
<path fill="#000000" d="M497.9 590.2h16.6v4.2h-16.6zM493.7 594.3h24.8v4.2h-24.8zM489.6 598.4h33.1v4.2h-33.1zM489.6 602.5h37.2v4.2h-37.2zM485.5 606.6h41.3v4.2h-41.3zM489.6 610.7h37.2v4.2h-37.2zM489.6 614.8h37.2v4.2h-37.2zM489.6 618.9h33.1v4.2h-33.1zM493.7 623.0h24.8v4.2h-24.8zM502.0 627.1h12.5v4.2h-12.5z"/><path fill="#0b0b0b" d="M518.5 594.3h4.2v4.2h-4.2zM497.9 627.1h4.2v4.2h-4.2z"/><path fill="#161616" d="M485.5 610.7h4.2v4.2h-4.2z"/><path fill="#212121" d="M514.4 590.2h4.2v4.2h-4.2zM518.5 623.0h4.2v4.2h-4.2z"/><path fill="#2c2c2c" d="M522.6 598.4h4.2v4.2h-4.2zM522.6 618.9h4.2v4.2h-4.2z"/><path fill="#373737" d="M485.5 602.5h4.2v4.2h-4.2zM485.5 614.8h4.2v4.2h-4.2z"/><path fill="#434343" d="M493.7 590.2h4.2v4.2h-4.2zM489.6 594.3h4.2v4.2h-4.2zM489.6 623.0h4.2v4.2h-4.2zM514.4 627.1h4.2v4.2h-4.2z"/><path fill="#4e4e4e" d="M485.5 598.4h4.2v4.2h-4.2z"/><path fill="#595959" d="M502.0 586.1h8.3v4.2h-8.3zM526.7 610.7h4.2v4.2h-4.2zM493.7 627.1h4.2v4.2h-4.2zM502.0 631.2h4.2v4.2h-4.2z"/><path fill="#646464" d="M518.5 590.2h4.2v4.2h-4.2zM526.7 606.6h4.2v4.2h-4.2zM526.7 614.8h4.2v4.2h-4.2zM485.5 618.9h4.2v4.2h-4.2zM506.1 631.2h4.2v4.2h-4.2z"/><path fill="#6f6f6f" d="M510.2 586.1h4.2v4.2h-4.2zM522.6 594.3h4.2v4.2h-4.2zM526.7 602.5h4.2v4.2h-4.2zM522.6 623.0h4.2v4.2h-4.2z"/><path fill="#7a7a7a" d="M489.6 590.2h4.2v4.2h-4.2zM481.4 610.7h4.2v4.2h-4.2zM489.6 627.1h4.2v4.2h-4.2zM518.5 627.1h4.2v4.2h-4.2zM510.2 631.2h4.2v4.2h-4.2z"/><path fill="#858585" d="M497.9 586.1h4.2v4.2h-4.2zM485.5 594.3h4.2v4.2h-4.2zM481.4 606.6h4.2v4.2h-4.2z"/><path fill="#909090" d="M493.7 586.1h4.2v4.2h-4.2zM526.7 598.4h4.2v4.2h-4.2zM526.7 618.9h4.2v4.2h-4.2zM485.5 623.0h4.2v4.2h-4.2zM514.4 631.2h4.2v4.2h-4.2z"/><path fill="#9b9b9b" d="M502.0 582.0h4.2v4.2h-4.2zM489.6 586.1h4.2v4.2h-4.2zM514.4 586.1h4.2v4.2h-4.2zM522.6 590.2h4.2v4.2h-4.2zM530.8 606.6h4.2v4.2h-4.2zM530.8 610.7h4.2v4.2h-4.2zM481.4 614.8h4.2v4.2h-4.2zM493.7 631.2h8.3v4.2h-8.3zM518.5 631.2h4.2v4.2h-4.2zM510.2 635.3h4.2v4.2h-4.2z"/><path fill="#a6a6a6" d="M506.1 582.0h4.2v4.2h-4.2zM514.4 582.0h4.2v4.2h-4.2zM518.5 586.1h4.2v4.2h-4.2zM485.5 590.2h4.2v4.2h-4.2zM481.4 594.3h4.2v4.2h-4.2zM481.4 602.5h4.2v4.2h-4.2zM477.2 614.8h4.2v4.2h-4.2zM530.8 614.8h4.2v4.2h-4.2zM481.4 618.9h4.2v4.2h-4.2zM526.7 623.0h4.2v4.2h-4.2zM522.6 627.1h4.2v4.2h-4.2zM506.1 635.3h4.2v4.2h-4.2z"/><path fill="#b1b1b1" d="M518.5 577.9h4.2v4.2h-4.2zM493.7 582.0h8.3v4.2h-8.3zM510.2 582.0h4.2v4.2h-4.2zM485.5 586.1h4.2v4.2h-4.2zM526.7 590.2h4.2v4.2h-4.2zM526.7 594.3h4.2v4.2h-4.2zM481.4 598.4h4.2v4.2h-4.2zM530.8 598.4h4.2v4.2h-4.2zM530.8 602.5h4.2v4.2h-4.2zM477.2 610.7h4.2v4.2h-4.2zM530.8 618.9h4.2v4.2h-4.2zM481.4 623.0h4.2v4.2h-4.2zM485.5 627.1h4.2v4.2h-4.2zM489.6 631.2h4.2v4.2h-4.2zM497.9 635.3h4.2v4.2h-4.2zM514.4 635.3h4.2v4.2h-4.2z"/><path fill="#bcbcbc" d="M514.4 577.9h4.2v4.2h-4.2zM489.6 582.0h4.2v4.2h-4.2zM522.6 582.0h4.2v4.2h-4.2zM481.4 590.2h4.2v4.2h-4.2zM477.2 598.4h4.2v4.2h-4.2zM477.2 602.5h4.2v4.2h-4.2zM539.1 602.5h4.2v4.2h-4.2zM473.1 606.6h4.2v4.2h-4.2zM530.8 623.0h4.2v4.2h-4.2zM481.4 627.1h4.2v4.2h-4.2zM526.7 627.1h8.3v4.2h-8.3zM522.6 631.2h4.2v4.2h-4.2zM493.7 635.3h4.2v4.2h-4.2zM502.0 635.3h4.2v4.2h-4.2zM497.9 639.4h4.2v4.2h-4.2zM506.1 639.4h4.2v4.2h-4.2zM514.4 639.4h4.2v4.2h-4.2z"/><path fill="#c8c8c8" d="M460.8 532.8h4.2v4.2h-4.2zM477.2 557.4h4.2v4.2h-4.2zM563.8 561.5h4.2v4.2h-4.2zM497.9 569.7h4.2v4.2h-4.2zM510.2 569.7h4.2v4.2h-4.2zM489.6 573.8h4.2v4.2h-4.2zM502.0 573.8h4.2v4.2h-4.2zM518.5 573.8h4.2v4.2h-4.2zM481.4 577.9h4.2v4.2h-4.2zM489.6 577.9h12.5v4.2h-12.5zM510.2 577.9h4.2v4.2h-4.2zM526.7 577.9h4.2v4.2h-4.2zM473.1 582.0h4.2v4.2h-4.2zM485.5 582.0h4.2v4.2h-4.2zM539.1 582.0h4.2v4.2h-4.2zM559.7 582.0h4.2v4.2h-4.2zM522.6 586.1h8.3v4.2h-8.3zM535.0 586.1h4.2v4.2h-4.2zM535.0 590.2h4.2v4.2h-4.2zM543.2 590.2h4.2v4.2h-4.2zM477.2 594.3h4.2v4.2h-4.2zM530.8 594.3h8.3v4.2h-8.3zM559.7 594.3h4.2v4.2h-4.2zM464.9 598.4h8.3v4.2h-8.3zM469.0 602.5h4.2v4.2h-4.2zM535.0 602.5h4.2v4.2h-4.2zM477.2 606.6h4.2v4.2h-4.2zM535.0 606.6h4.2v4.2h-4.2zM473.1 610.7h4.2v4.2h-4.2zM543.2 610.7h4.2v4.2h-4.2zM460.8 614.8h8.3v4.2h-8.3zM535.0 614.8h4.2v4.2h-4.2zM460.8 618.9h4.2v4.2h-4.2zM469.0 618.9h12.5v4.2h-12.5zM535.0 618.9h4.2v4.2h-4.2zM543.2 618.9h4.2v4.2h-4.2zM473.1 623.0h4.2v4.2h-4.2zM535.0 623.0h4.2v4.2h-4.2zM481.4 631.2h8.3v4.2h-8.3zM526.7 631.2h4.2v4.2h-4.2zM469.0 635.3h4.2v4.2h-4.2zM481.4 635.3h8.3v4.2h-8.3zM518.5 635.3h4.2v4.2h-4.2zM526.7 635.3h12.5v4.2h-12.5zM493.7 639.4h4.2v4.2h-4.2zM502.0 639.4h4.2v4.2h-4.2zM510.2 639.4h4.2v4.2h-4.2zM502.0 643.5h8.3v4.2h-8.3zM555.6 643.5h4.2v4.2h-4.2zM535.0 651.7h4.2v4.2h-4.2zM477.2 655.8h4.2v4.2h-4.2zM497.9 655.8h4.2v4.2h-4.2zM444.3 659.9h4.2v4.2h-4.2zM469.0 664.0h4.2v4.2h-4.2zM502.0 668.1h4.2v4.2h-4.2z"/><path fill="#d3d3d3" d="M444.3 532.8h4.2v4.2h-4.2zM456.6 532.8h4.2v4.2h-4.2zM464.9 532.8h4.2v4.2h-4.2zM489.6 532.8h12.5v4.2h-12.5zM514.4 532.8h4.2v4.2h-4.2zM539.1 532.8h4.2v4.2h-4.2zM559.7 532.8h4.2v4.2h-4.2zM506.1 536.9h4.2v4.2h-4.2zM530.8 536.9h4.2v4.2h-4.2zM555.6 536.9h4.2v4.2h-4.2zM580.3 536.9h8.3v4.2h-8.3zM543.2 541.0h4.2v4.2h-4.2zM567.9 541.0h4.2v4.2h-4.2zM448.4 545.1h4.2v4.2h-4.2zM481.4 545.1h4.2v4.2h-4.2zM493.7 545.1h8.3v4.2h-8.3zM506.1 545.1h4.2v4.2h-4.2zM530.8 545.1h4.2v4.2h-4.2zM576.2 545.1h4.2v4.2h-4.2zM584.4 545.1h4.2v4.2h-4.2zM464.9 549.2h4.2v4.2h-4.2zM473.1 549.2h4.2v4.2h-4.2zM485.5 549.2h4.2v4.2h-4.2zM502.0 549.2h4.2v4.2h-4.2zM522.6 549.2h4.2v4.2h-4.2zM535.0 549.2h4.2v4.2h-4.2zM576.2 549.2h4.2v4.2h-4.2zM448.4 553.3h4.2v4.2h-4.2zM485.5 553.3h8.3v4.2h-8.3zM497.9 553.3h4.2v4.2h-4.2zM510.2 553.3h4.2v4.2h-4.2zM518.5 553.3h4.2v4.2h-4.2zM526.7 553.3h4.2v4.2h-4.2zM559.7 553.3h4.2v4.2h-4.2zM580.3 553.3h4.2v4.2h-4.2zM469.0 557.4h4.2v4.2h-4.2zM535.0 557.4h4.2v4.2h-4.2zM543.2 557.4h4.2v4.2h-4.2zM572.1 557.4h4.2v4.2h-4.2zM448.4 561.5h4.2v4.2h-4.2zM464.9 561.5h8.3v4.2h-8.3zM493.7 561.5h4.2v4.2h-4.2zM502.0 561.5h12.5v4.2h-12.5zM530.8 561.5h4.2v4.2h-4.2zM555.6 561.5h4.2v4.2h-4.2zM572.1 561.5h4.2v4.2h-4.2zM452.5 565.6h4.2v4.2h-4.2zM460.8 565.6h4.2v4.2h-4.2zM506.1 565.6h4.2v4.2h-4.2zM518.5 565.6h4.2v4.2h-4.2zM535.0 565.6h4.2v4.2h-4.2zM563.8 565.6h4.2v4.2h-4.2zM440.1 569.7h4.2v4.2h-4.2zM460.8 569.7h4.2v4.2h-4.2zM485.5 569.7h8.3v4.2h-8.3zM502.0 569.7h8.3v4.2h-8.3zM514.4 569.7h8.3v4.2h-8.3zM543.2 569.7h4.2v4.2h-4.2zM464.9 573.8h4.2v4.2h-4.2zM477.2 573.8h8.3v4.2h-8.3zM493.7 573.8h4.2v4.2h-4.2zM506.1 573.8h4.2v4.2h-4.2zM522.6 573.8h4.2v4.2h-4.2zM530.8 573.8h8.3v4.2h-8.3zM576.2 573.8h4.2v4.2h-4.2zM464.9 577.9h4.2v4.2h-4.2zM473.1 577.9h8.3v4.2h-8.3zM502.0 577.9h8.3v4.2h-8.3zM522.6 577.9h4.2v4.2h-4.2zM530.8 577.9h12.5v4.2h-12.5zM547.3 577.9h4.2v4.2h-4.2zM567.9 577.9h4.2v4.2h-4.2zM576.2 577.9h4.2v4.2h-4.2zM440.1 582.0h4.2v4.2h-4.2zM460.8 582.0h4.2v4.2h-4.2zM481.4 582.0h4.2v4.2h-4.2zM518.5 582.0h4.2v4.2h-4.2zM526.7 582.0h4.2v4.2h-4.2zM535.0 582.0h4.2v4.2h-4.2zM547.3 582.0h4.2v4.2h-4.2zM452.5 586.1h4.2v4.2h-4.2zM460.8 586.1h16.6v4.2h-16.6zM530.8 586.1h4.2v4.2h-4.2zM547.3 586.1h4.2v4.2h-4.2zM576.2 586.1h4.2v4.2h-4.2zM444.3 590.2h4.2v4.2h-4.2zM469.0 590.2h12.5v4.2h-12.5zM530.8 590.2h4.2v4.2h-4.2zM539.1 590.2h4.2v4.2h-4.2zM452.5 594.3h4.2v4.2h-4.2zM469.0 594.3h8.3v4.2h-8.3zM547.3 594.3h8.3v4.2h-8.3zM473.1 598.4h4.2v4.2h-4.2zM535.0 598.4h12.5v4.2h-12.5zM580.3 598.4h8.3v4.2h-8.3zM440.1 602.5h4.2v4.2h-4.2zM464.9 602.5h4.2v4.2h-4.2zM473.1 602.5h4.2v4.2h-4.2zM543.2 602.5h4.2v4.2h-4.2zM460.8 606.6h12.5v4.2h-12.5zM539.1 606.6h4.2v4.2h-4.2zM547.3 606.6h4.2v4.2h-4.2zM563.8 606.6h4.2v4.2h-4.2zM535.0 610.7h4.2v4.2h-4.2zM555.6 610.7h4.2v4.2h-4.2zM584.4 610.7h4.2v4.2h-4.2zM452.5 614.8h4.2v4.2h-4.2zM469.0 614.8h8.3v4.2h-8.3zM539.1 614.8h4.2v4.2h-4.2zM567.9 614.8h4.2v4.2h-4.2zM444.3 618.9h8.3v4.2h-8.3zM464.9 618.9h4.2v4.2h-4.2zM464.9 623.0h4.2v4.2h-4.2zM477.2 623.0h4.2v4.2h-4.2zM555.6 623.0h4.2v4.2h-4.2zM563.8 623.0h4.2v4.2h-4.2zM464.9 627.1h4.2v4.2h-4.2zM477.2 627.1h4.2v4.2h-4.2zM535.0 627.1h8.3v4.2h-8.3zM547.3 627.1h4.2v4.2h-4.2zM572.1 627.1h4.2v4.2h-4.2zM440.1 631.2h4.2v4.2h-4.2zM456.6 631.2h4.2v4.2h-4.2zM473.1 631.2h4.2v4.2h-4.2zM530.8 631.2h12.5v4.2h-12.5zM576.2 631.2h4.2v4.2h-4.2zM464.9 635.3h4.2v4.2h-4.2zM477.2 635.3h4.2v4.2h-4.2zM489.6 635.3h4.2v4.2h-4.2zM522.6 635.3h4.2v4.2h-4.2zM543.2 635.3h8.3v4.2h-8.3zM477.2 639.4h16.6v4.2h-16.6zM518.5 639.4h4.2v4.2h-4.2zM535.0 639.4h4.2v4.2h-4.2zM559.7 639.4h4.2v4.2h-4.2zM464.9 643.5h4.2v4.2h-4.2zM477.2 643.5h20.7v4.2h-20.7zM514.4 643.5h12.5v4.2h-12.5zM547.3 643.5h4.2v4.2h-4.2zM584.4 643.5h4.2v4.2h-4.2zM464.9 647.6h4.2v4.2h-4.2zM477.2 647.6h4.2v4.2h-4.2zM493.7 647.6h4.2v4.2h-4.2zM514.4 647.6h4.2v4.2h-4.2zM539.1 647.6h8.3v4.2h-8.3zM563.8 647.6h4.2v4.2h-4.2zM477.2 651.7h4.2v4.2h-4.2zM502.0 651.7h8.3v4.2h-8.3zM514.4 651.7h4.2v4.2h-4.2zM522.6 651.7h4.2v4.2h-4.2zM567.9 651.7h4.2v4.2h-4.2zM456.6 655.8h4.2v4.2h-4.2zM510.2 655.8h4.2v4.2h-4.2zM539.1 655.8h4.2v4.2h-4.2zM559.7 655.8h4.2v4.2h-4.2zM460.8 659.9h4.2v4.2h-4.2zM510.2 659.9h4.2v4.2h-4.2zM518.5 659.9h8.3v4.2h-8.3zM530.8 659.9h4.2v4.2h-4.2zM485.5 664.0h4.2v4.2h-4.2zM497.9 664.0h4.2v4.2h-4.2zM510.2 664.0h4.2v4.2h-4.2zM563.8 664.0h4.2v4.2h-4.2zM572.1 664.0h4.2v4.2h-4.2zM522.6 668.1h4.2v4.2h-4.2zM530.8 668.1h4.2v4.2h-4.2zM539.1 668.1h4.2v4.2h-4.2zM551.5 668.1h4.2v4.2h-4.2zM444.3 672.2h4.2v4.2h-4.2zM460.8 672.2h4.2v4.2h-4.2zM477.2 672.2h4.2v4.2h-4.2zM514.4 672.2h4.2v4.2h-4.2zM526.7 672.2h4.2v4.2h-4.2zM535.0 672.2h4.2v4.2h-4.2zM452.5 676.3h4.2v4.2h-4.2zM460.8 676.3h4.2v4.2h-4.2zM485.5 676.3h8.3v4.2h-8.3zM502.0 676.3h4.2v4.2h-4.2zM510.2 676.3h4.2v4.2h-4.2zM518.5 676.3h4.2v4.2h-4.2z"/><path fill="#dedede" d="M440.1 532.8h4.2v4.2h-4.2zM448.4 532.8h4.2v4.2h-4.2zM477.2 532.8h4.2v4.2h-4.2zM502.0 532.8h8.3v4.2h-8.3zM518.5 532.8h16.6v4.2h-16.6zM547.3 532.8h8.3v4.2h-8.3zM563.8 532.8h12.5v4.2h-12.5zM584.4 532.8h4.2v4.2h-4.2zM448.4 536.9h8.3v4.2h-8.3zM460.8 536.9h16.6v4.2h-16.6zM485.5 536.9h16.6v4.2h-16.6zM510.2 536.9h8.3v4.2h-8.3zM522.6 536.9h8.3v4.2h-8.3zM539.1 536.9h8.3v4.2h-8.3zM551.5 536.9h4.2v4.2h-4.2zM440.1 541.0h4.2v4.2h-4.2zM452.5 541.0h4.2v4.2h-4.2zM464.9 541.0h8.3v4.2h-8.3zM477.2 541.0h20.7v4.2h-20.7zM506.1 541.0h8.3v4.2h-8.3zM526.7 541.0h4.2v4.2h-4.2zM535.0 541.0h8.3v4.2h-8.3zM547.3 541.0h4.2v4.2h-4.2zM559.7 541.0h8.3v4.2h-8.3zM572.1 541.0h16.6v4.2h-16.6zM440.1 545.1h8.3v4.2h-8.3zM456.6 545.1h4.2v4.2h-4.2zM469.0 545.1h4.2v4.2h-4.2zM477.2 545.1h4.2v4.2h-4.2zM485.5 545.1h8.3v4.2h-8.3zM510.2 545.1h8.3v4.2h-8.3zM535.0 545.1h20.7v4.2h-20.7zM559.7 545.1h8.3v4.2h-8.3zM580.3 545.1h4.2v4.2h-4.2zM440.1 549.2h12.5v4.2h-12.5zM469.0 549.2h4.2v4.2h-4.2zM481.4 549.2h4.2v4.2h-4.2zM489.6 549.2h4.2v4.2h-4.2zM497.9 549.2h4.2v4.2h-4.2zM506.1 549.2h4.2v4.2h-4.2zM530.8 549.2h4.2v4.2h-4.2zM539.1 549.2h4.2v4.2h-4.2zM551.5 549.2h4.2v4.2h-4.2zM559.7 549.2h4.2v4.2h-4.2zM567.9 549.2h8.3v4.2h-8.3zM580.3 549.2h8.3v4.2h-8.3zM464.9 553.3h20.7v4.2h-20.7zM506.1 553.3h4.2v4.2h-4.2zM535.0 553.3h8.3v4.2h-8.3zM551.5 553.3h8.3v4.2h-8.3zM563.8 553.3h4.2v4.2h-4.2zM572.1 553.3h8.3v4.2h-8.3zM440.1 557.4h4.2v4.2h-4.2zM452.5 557.4h16.6v4.2h-16.6zM473.1 557.4h4.2v4.2h-4.2zM481.4 557.4h8.3v4.2h-8.3zM493.7 557.4h16.6v4.2h-16.6zM514.4 557.4h16.6v4.2h-16.6zM547.3 557.4h24.8v4.2h-24.8zM580.3 557.4h8.3v4.2h-8.3zM440.1 561.5h4.2v4.2h-4.2zM452.5 561.5h12.5v4.2h-12.5zM477.2 561.5h4.2v4.2h-4.2zM497.9 561.5h4.2v4.2h-4.2zM514.4 561.5h4.2v4.2h-4.2zM522.6 561.5h4.2v4.2h-4.2zM539.1 561.5h4.2v4.2h-4.2zM547.3 561.5h8.3v4.2h-8.3zM559.7 561.5h4.2v4.2h-4.2zM567.9 561.5h4.2v4.2h-4.2zM576.2 561.5h4.2v4.2h-4.2zM584.4 561.5h4.2v4.2h-4.2zM440.1 565.6h8.3v4.2h-8.3zM464.9 565.6h29.0v4.2h-29.0zM510.2 565.6h8.3v4.2h-8.3zM522.6 565.6h4.2v4.2h-4.2zM530.8 565.6h4.2v4.2h-4.2zM539.1 565.6h24.8v4.2h-24.8zM567.9 565.6h8.3v4.2h-8.3zM580.3 565.6h8.3v4.2h-8.3zM444.3 569.7h4.2v4.2h-4.2zM464.9 569.7h4.2v4.2h-4.2zM473.1 569.7h12.5v4.2h-12.5zM493.7 569.7h4.2v4.2h-4.2zM522.6 569.7h20.7v4.2h-20.7zM551.5 569.7h4.2v4.2h-4.2zM559.7 569.7h29.0v4.2h-29.0zM448.4 573.8h4.2v4.2h-4.2zM456.6 573.8h8.3v4.2h-8.3zM469.0 573.8h4.2v4.2h-4.2zM485.5 573.8h4.2v4.2h-4.2zM497.9 573.8h4.2v4.2h-4.2zM510.2 573.8h8.3v4.2h-8.3zM526.7 573.8h4.2v4.2h-4.2zM539.1 573.8h24.8v4.2h-24.8zM572.1 573.8h4.2v4.2h-4.2zM580.3 573.8h4.2v4.2h-4.2zM440.1 577.9h20.7v4.2h-20.7zM469.0 577.9h4.2v4.2h-4.2zM485.5 577.9h4.2v4.2h-4.2zM559.7 577.9h4.2v4.2h-4.2zM572.1 577.9h4.2v4.2h-4.2zM444.3 582.0h4.2v4.2h-4.2zM452.5 582.0h8.3v4.2h-8.3zM477.2 582.0h4.2v4.2h-4.2zM530.8 582.0h4.2v4.2h-4.2zM576.2 582.0h4.2v4.2h-4.2zM456.6 586.1h4.2v4.2h-4.2zM477.2 586.1h8.3v4.2h-8.3zM539.1 586.1h8.3v4.2h-8.3zM551.5 586.1h4.2v4.2h-4.2zM563.8 586.1h12.5v4.2h-12.5zM584.4 586.1h4.2v4.2h-4.2zM448.4 590.2h4.2v4.2h-4.2zM456.6 590.2h4.2v4.2h-4.2zM464.9 590.2h4.2v4.2h-4.2zM551.5 590.2h4.2v4.2h-4.2zM576.2 590.2h12.5v4.2h-12.5zM440.1 594.3h8.3v4.2h-8.3zM460.8 594.3h8.3v4.2h-8.3zM539.1 594.3h8.3v4.2h-8.3zM563.8 594.3h8.3v4.2h-8.3zM576.2 594.3h8.3v4.2h-8.3zM440.1 598.4h24.8v4.2h-24.8zM551.5 598.4h8.3v4.2h-8.3zM563.8 598.4h12.5v4.2h-12.5zM444.3 602.5h4.2v4.2h-4.2zM452.5 602.5h12.5v4.2h-12.5zM547.3 602.5h12.5v4.2h-12.5zM563.8 602.5h4.2v4.2h-4.2zM572.1 602.5h4.2v4.2h-4.2zM580.3 602.5h8.3v4.2h-8.3zM440.1 606.6h4.2v4.2h-4.2zM448.4 606.6h12.5v4.2h-12.5zM543.2 606.6h4.2v4.2h-4.2zM551.5 606.6h4.2v4.2h-4.2zM559.7 606.6h4.2v4.2h-4.2zM567.9 606.6h4.2v4.2h-4.2zM584.4 606.6h4.2v4.2h-4.2zM440.1 610.7h4.2v4.2h-4.2zM456.6 610.7h4.2v4.2h-4.2zM469.0 610.7h4.2v4.2h-4.2zM539.1 610.7h4.2v4.2h-4.2zM547.3 610.7h8.3v4.2h-8.3zM559.7 610.7h12.5v4.2h-12.5zM440.1 614.8h12.5v4.2h-12.5zM543.2 614.8h8.3v4.2h-8.3zM555.6 614.8h4.2v4.2h-4.2zM572.1 614.8h8.3v4.2h-8.3zM584.4 614.8h4.2v4.2h-4.2zM551.5 618.9h20.7v4.2h-20.7zM580.3 618.9h4.2v4.2h-4.2zM440.1 623.0h4.2v4.2h-4.2zM456.6 623.0h8.3v4.2h-8.3zM469.0 623.0h4.2v4.2h-4.2zM539.1 623.0h16.6v4.2h-16.6zM567.9 623.0h12.5v4.2h-12.5zM584.4 623.0h4.2v4.2h-4.2zM440.1 627.1h16.6v4.2h-16.6zM460.8 627.1h4.2v4.2h-4.2zM469.0 627.1h8.3v4.2h-8.3zM543.2 627.1h4.2v4.2h-4.2zM551.5 627.1h8.3v4.2h-8.3zM444.3 631.2h8.3v4.2h-8.3zM477.2 631.2h4.2v4.2h-4.2zM543.2 631.2h12.5v4.2h-12.5zM559.7 631.2h4.2v4.2h-4.2zM567.9 631.2h4.2v4.2h-4.2zM580.3 631.2h4.2v4.2h-4.2zM444.3 635.3h12.5v4.2h-12.5zM460.8 635.3h4.2v4.2h-4.2zM473.1 635.3h4.2v4.2h-4.2zM539.1 635.3h4.2v4.2h-4.2zM551.5 635.3h8.3v4.2h-8.3zM563.8 635.3h8.3v4.2h-8.3zM576.2 635.3h4.2v4.2h-4.2zM584.4 635.3h4.2v4.2h-4.2zM440.1 639.4h4.2v4.2h-4.2zM448.4 639.4h8.3v4.2h-8.3zM460.8 639.4h4.2v4.2h-4.2zM469.0 639.4h8.3v4.2h-8.3zM522.6 639.4h12.5v4.2h-12.5zM551.5 639.4h8.3v4.2h-8.3zM563.8 639.4h4.2v4.2h-4.2zM572.1 639.4h12.5v4.2h-12.5zM444.3 643.5h16.6v4.2h-16.6zM469.0 643.5h8.3v4.2h-8.3zM510.2 643.5h4.2v4.2h-4.2zM535.0 643.5h12.5v4.2h-12.5zM551.5 643.5h4.2v4.2h-4.2zM559.7 643.5h20.7v4.2h-20.7zM440.1 647.6h12.5v4.2h-12.5zM456.6 647.6h4.2v4.2h-4.2zM469.0 647.6h8.3v4.2h-8.3zM489.6 647.6h4.2v4.2h-4.2zM497.9 647.6h16.6v4.2h-16.6zM518.5 647.6h4.2v4.2h-4.2zM530.8 647.6h8.3v4.2h-8.3zM547.3 647.6h4.2v4.2h-4.2zM567.9 647.6h16.6v4.2h-16.6zM440.1 651.7h8.3v4.2h-8.3zM456.6 651.7h4.2v4.2h-4.2zM473.1 651.7h4.2v4.2h-4.2zM481.4 651.7h4.2v4.2h-4.2zM489.6 651.7h12.5v4.2h-12.5zM510.2 651.7h4.2v4.2h-4.2zM526.7 651.7h8.3v4.2h-8.3zM539.1 651.7h16.6v4.2h-16.6zM559.7 651.7h4.2v4.2h-4.2zM572.1 651.7h8.3v4.2h-8.3zM584.4 651.7h4.2v4.2h-4.2zM440.1 655.8h8.3v4.2h-8.3zM452.5 655.8h4.2v4.2h-4.2zM460.8 655.8h16.6v4.2h-16.6zM481.4 655.8h16.6v4.2h-16.6zM502.0 655.8h8.3v4.2h-8.3zM514.4 655.8h8.3v4.2h-8.3zM526.7 655.8h4.2v4.2h-4.2zM547.3 655.8h4.2v4.2h-4.2zM563.8 655.8h4.2v4.2h-4.2zM576.2 655.8h8.3v4.2h-8.3zM440.1 659.9h4.2v4.2h-4.2zM448.4 659.9h8.3v4.2h-8.3zM469.0 659.9h8.3v4.2h-8.3zM481.4 659.9h8.3v4.2h-8.3zM493.7 659.9h4.2v4.2h-4.2zM502.0 659.9h4.2v4.2h-4.2zM514.4 659.9h4.2v4.2h-4.2zM526.7 659.9h4.2v4.2h-4.2zM535.0 659.9h4.2v4.2h-4.2zM543.2 659.9h16.6v4.2h-16.6zM563.8 659.9h4.2v4.2h-4.2zM572.1 659.9h4.2v4.2h-4.2zM580.3 659.9h8.3v4.2h-8.3zM444.3 664.0h4.2v4.2h-4.2zM456.6 664.0h4.2v4.2h-4.2zM464.9 664.0h4.2v4.2h-4.2zM473.1 664.0h12.5v4.2h-12.5zM489.6 664.0h8.3v4.2h-8.3zM502.0 664.0h8.3v4.2h-8.3zM514.4 664.0h16.6v4.2h-16.6zM535.0 664.0h12.5v4.2h-12.5zM551.5 664.0h8.3v4.2h-8.3zM567.9 664.0h4.2v4.2h-4.2zM440.1 668.1h4.2v4.2h-4.2zM448.4 668.1h24.8v4.2h-24.8zM477.2 668.1h4.2v4.2h-4.2zM489.6 668.1h4.2v4.2h-4.2zM506.1 668.1h4.2v4.2h-4.2zM514.4 668.1h4.2v4.2h-4.2zM543.2 668.1h4.2v4.2h-4.2zM555.6 668.1h4.2v4.2h-4.2zM567.9 668.1h8.3v4.2h-8.3zM580.3 668.1h8.3v4.2h-8.3zM440.1 672.2h4.2v4.2h-4.2zM489.6 672.2h12.5v4.2h-12.5zM518.5 672.2h8.3v4.2h-8.3zM530.8 672.2h4.2v4.2h-4.2zM539.1 672.2h4.2v4.2h-4.2zM551.5 672.2h8.3v4.2h-8.3zM563.8 672.2h4.2v4.2h-4.2zM572.1 672.2h16.6v4.2h-16.6zM448.4 676.3h4.2v4.2h-4.2zM464.9 676.3h4.2v4.2h-4.2zM473.1 676.3h8.3v4.2h-8.3zM506.1 676.3h4.2v4.2h-4.2zM514.4 676.3h4.2v4.2h-4.2zM522.6 676.3h4.2v4.2h-4.2zM539.1 676.3h4.2v4.2h-4.2zM551.5 676.3h8.3v4.2h-8.3zM563.8 676.3h24.8v4.2h-24.8z"/><path fill="#e9e9e9" d="M452.5 532.8h4.2v4.2h-4.2zM469.0 532.8h8.3v4.2h-8.3zM481.4 532.8h8.3v4.2h-8.3zM510.2 532.8h4.2v4.2h-4.2zM535.0 532.8h4.2v4.2h-4.2zM543.2 532.8h4.2v4.2h-4.2zM555.6 532.8h4.2v4.2h-4.2zM576.2 532.8h8.3v4.2h-8.3zM440.1 536.9h8.3v4.2h-8.3zM456.6 536.9h4.2v4.2h-4.2zM481.4 536.9h4.2v4.2h-4.2zM502.0 536.9h4.2v4.2h-4.2zM518.5 536.9h4.2v4.2h-4.2zM567.9 536.9h8.3v4.2h-8.3zM444.3 541.0h8.3v4.2h-8.3zM456.6 541.0h8.3v4.2h-8.3zM473.1 541.0h4.2v4.2h-4.2zM497.9 541.0h8.3v4.2h-8.3zM514.4 541.0h12.5v4.2h-12.5zM530.8 541.0h4.2v4.2h-4.2zM551.5 541.0h8.3v4.2h-8.3zM452.5 545.1h4.2v4.2h-4.2zM460.8 545.1h8.3v4.2h-8.3zM473.1 545.1h4.2v4.2h-4.2zM502.0 545.1h4.2v4.2h-4.2zM518.5 545.1h12.5v4.2h-12.5zM555.6 545.1h4.2v4.2h-4.2zM567.9 545.1h8.3v4.2h-8.3zM452.5 549.2h12.5v4.2h-12.5zM510.2 549.2h8.3v4.2h-8.3zM526.7 549.2h4.2v4.2h-4.2zM543.2 549.2h8.3v4.2h-8.3zM555.6 549.2h4.2v4.2h-4.2zM563.8 549.2h4.2v4.2h-4.2zM440.1 553.3h8.3v4.2h-8.3zM452.5 553.3h12.5v4.2h-12.5zM493.7 553.3h4.2v4.2h-4.2zM502.0 553.3h4.2v4.2h-4.2zM514.4 553.3h4.2v4.2h-4.2zM522.6 553.3h4.2v4.2h-4.2zM530.8 553.3h4.2v4.2h-4.2zM543.2 553.3h8.3v4.2h-8.3zM567.9 553.3h4.2v4.2h-4.2zM584.4 553.3h4.2v4.2h-4.2zM444.3 557.4h8.3v4.2h-8.3zM489.6 557.4h4.2v4.2h-4.2zM510.2 557.4h4.2v4.2h-4.2zM530.8 557.4h4.2v4.2h-4.2zM539.1 557.4h4.2v4.2h-4.2zM576.2 557.4h4.2v4.2h-4.2zM444.3 561.5h4.2v4.2h-4.2zM473.1 561.5h4.2v4.2h-4.2zM481.4 561.5h12.5v4.2h-12.5zM518.5 561.5h4.2v4.2h-4.2zM526.7 561.5h4.2v4.2h-4.2zM543.2 561.5h4.2v4.2h-4.2zM580.3 561.5h4.2v4.2h-4.2zM448.4 565.6h4.2v4.2h-4.2zM456.6 565.6h4.2v4.2h-4.2zM493.7 565.6h12.5v4.2h-12.5zM526.7 565.6h4.2v4.2h-4.2zM576.2 565.6h4.2v4.2h-4.2zM448.4 569.7h12.5v4.2h-12.5zM469.0 569.7h4.2v4.2h-4.2zM547.3 569.7h4.2v4.2h-4.2zM555.6 569.7h4.2v4.2h-4.2zM440.1 573.8h8.3v4.2h-8.3zM452.5 573.8h4.2v4.2h-4.2zM473.1 573.8h4.2v4.2h-4.2zM567.9 573.8h4.2v4.2h-4.2zM584.4 573.8h4.2v4.2h-4.2zM460.8 577.9h4.2v4.2h-4.2zM551.5 577.9h8.3v4.2h-8.3zM563.8 577.9h4.2v4.2h-4.2zM580.3 577.9h8.3v4.2h-8.3zM448.4 582.0h4.2v4.2h-4.2zM469.0 582.0h4.2v4.2h-4.2zM543.2 582.0h4.2v4.2h-4.2zM551.5 582.0h8.3v4.2h-8.3zM563.8 582.0h12.5v4.2h-12.5zM580.3 582.0h8.3v4.2h-8.3zM440.1 586.1h12.5v4.2h-12.5zM555.6 586.1h8.3v4.2h-8.3zM580.3 586.1h4.2v4.2h-4.2zM440.1 590.2h4.2v4.2h-4.2zM452.5 590.2h4.2v4.2h-4.2zM460.8 590.2h4.2v4.2h-4.2zM547.3 590.2h4.2v4.2h-4.2zM555.6 590.2h20.7v4.2h-20.7zM448.4 594.3h4.2v4.2h-4.2zM456.6 594.3h4.2v4.2h-4.2zM555.6 594.3h4.2v4.2h-4.2zM572.1 594.3h4.2v4.2h-4.2zM584.4 594.3h4.2v4.2h-4.2zM547.3 598.4h4.2v4.2h-4.2zM559.7 598.4h4.2v4.2h-4.2zM576.2 598.4h4.2v4.2h-4.2zM448.4 602.5h4.2v4.2h-4.2zM559.7 602.5h4.2v4.2h-4.2zM567.9 602.5h4.2v4.2h-4.2zM576.2 602.5h4.2v4.2h-4.2zM555.6 606.6h4.2v4.2h-4.2zM572.1 606.6h12.5v4.2h-12.5zM444.3 610.7h4.2v4.2h-4.2zM452.5 610.7h4.2v4.2h-4.2zM460.8 610.7h8.3v4.2h-8.3zM572.1 610.7h8.3v4.2h-8.3zM456.6 614.8h4.2v4.2h-4.2zM551.5 614.8h4.2v4.2h-4.2zM559.7 614.8h8.3v4.2h-8.3zM580.3 614.8h4.2v4.2h-4.2zM440.1 618.9h4.2v4.2h-4.2zM452.5 618.9h8.3v4.2h-8.3zM539.1 618.9h4.2v4.2h-4.2zM547.3 618.9h4.2v4.2h-4.2zM572.1 618.9h8.3v4.2h-8.3zM584.4 618.9h4.2v4.2h-4.2zM444.3 623.0h12.5v4.2h-12.5zM559.7 623.0h4.2v4.2h-4.2zM580.3 623.0h4.2v4.2h-4.2zM456.6 627.1h4.2v4.2h-4.2zM559.7 627.1h12.5v4.2h-12.5zM576.2 627.1h12.5v4.2h-12.5zM452.5 631.2h4.2v4.2h-4.2zM460.8 631.2h12.5v4.2h-12.5zM555.6 631.2h4.2v4.2h-4.2zM584.4 631.2h4.2v4.2h-4.2zM440.1 635.3h4.2v4.2h-4.2zM456.6 635.3h4.2v4.2h-4.2zM559.7 635.3h4.2v4.2h-4.2zM572.1 635.3h4.2v4.2h-4.2zM444.3 639.4h4.2v4.2h-4.2zM456.6 639.4h4.2v4.2h-4.2zM464.9 639.4h4.2v4.2h-4.2zM539.1 639.4h12.5v4.2h-12.5zM567.9 639.4h4.2v4.2h-4.2zM584.4 639.4h4.2v4.2h-4.2zM440.1 643.5h4.2v4.2h-4.2zM460.8 643.5h4.2v4.2h-4.2zM497.9 643.5h4.2v4.2h-4.2zM526.7 643.5h8.3v4.2h-8.3zM580.3 643.5h4.2v4.2h-4.2zM452.5 647.6h4.2v4.2h-4.2zM460.8 647.6h4.2v4.2h-4.2zM481.4 647.6h8.3v4.2h-8.3zM522.6 647.6h8.3v4.2h-8.3zM551.5 647.6h12.5v4.2h-12.5zM584.4 647.6h4.2v4.2h-4.2zM448.4 651.7h8.3v4.2h-8.3zM460.8 651.7h12.5v4.2h-12.5zM485.5 651.7h4.2v4.2h-4.2zM518.5 651.7h4.2v4.2h-4.2zM555.6 651.7h4.2v4.2h-4.2zM563.8 651.7h4.2v4.2h-4.2zM580.3 651.7h4.2v4.2h-4.2zM448.4 655.8h4.2v4.2h-4.2zM522.6 655.8h4.2v4.2h-4.2zM530.8 655.8h4.2v4.2h-4.2zM543.2 655.8h4.2v4.2h-4.2zM551.5 655.8h8.3v4.2h-8.3zM572.1 655.8h4.2v4.2h-4.2zM584.4 655.8h4.2v4.2h-4.2zM456.6 659.9h4.2v4.2h-4.2zM464.9 659.9h4.2v4.2h-4.2zM477.2 659.9h4.2v4.2h-4.2zM489.6 659.9h4.2v4.2h-4.2zM506.1 659.9h4.2v4.2h-4.2zM539.1 659.9h4.2v4.2h-4.2zM559.7 659.9h4.2v4.2h-4.2zM567.9 659.9h4.2v4.2h-4.2zM576.2 659.9h4.2v4.2h-4.2zM440.1 664.0h4.2v4.2h-4.2zM448.4 664.0h4.2v4.2h-4.2zM460.8 664.0h4.2v4.2h-4.2zM530.8 664.0h4.2v4.2h-4.2zM576.2 664.0h8.3v4.2h-8.3zM444.3 668.1h4.2v4.2h-4.2zM473.1 668.1h4.2v4.2h-4.2zM493.7 668.1h8.3v4.2h-8.3zM510.2 668.1h4.2v4.2h-4.2zM518.5 668.1h4.2v4.2h-4.2zM526.7 668.1h4.2v4.2h-4.2zM535.0 668.1h4.2v4.2h-4.2zM547.3 668.1h4.2v4.2h-4.2zM559.7 668.1h4.2v4.2h-4.2zM576.2 668.1h4.2v4.2h-4.2zM448.4 672.2h12.5v4.2h-12.5zM464.9 672.2h12.5v4.2h-12.5zM481.4 672.2h4.2v4.2h-4.2zM502.0 672.2h12.5v4.2h-12.5zM543.2 672.2h8.3v4.2h-8.3zM559.7 672.2h4.2v4.2h-4.2zM567.9 672.2h4.2v4.2h-4.2zM440.1 676.3h8.3v4.2h-8.3zM456.6 676.3h4.2v4.2h-4.2zM469.0 676.3h4.2v4.2h-4.2zM481.4 676.3h4.2v4.2h-4.2zM497.9 676.3h4.2v4.2h-4.2zM526.7 676.3h8.3v4.2h-8.3zM547.3 676.3h4.2v4.2h-4.2zM559.7 676.3h4.2v4.2h-4.2z"/><path fill="#f4f4f4" d="M477.2 536.9h4.2v4.2h-4.2zM535.0 536.9h4.2v4.2h-4.2zM547.3 536.9h4.2v4.2h-4.2zM559.7 536.9h8.3v4.2h-8.3zM576.2 536.9h4.2v4.2h-4.2zM477.2 549.2h4.2v4.2h-4.2zM493.7 549.2h4.2v4.2h-4.2zM518.5 549.2h4.2v4.2h-4.2zM535.0 561.5h4.2v4.2h-4.2zM563.8 573.8h4.2v4.2h-4.2zM543.2 577.9h4.2v4.2h-4.2zM464.9 582.0h4.2v4.2h-4.2zM444.3 606.6h4.2v4.2h-4.2zM448.4 610.7h4.2v4.2h-4.2zM580.3 610.7h4.2v4.2h-4.2zM563.8 631.2h4.2v4.2h-4.2zM572.1 631.2h4.2v4.2h-4.2zM580.3 635.3h4.2v4.2h-4.2zM535.0 655.8h4.2v4.2h-4.2zM567.9 655.8h4.2v4.2h-4.2zM497.9 659.9h4.2v4.2h-4.2zM452.5 664.0h4.2v4.2h-4.2zM547.3 664.0h4.2v4.2h-4.2zM559.7 664.0h4.2v4.2h-4.2zM584.4 664.0h4.2v4.2h-4.2zM481.4 668.1h8.3v4.2h-8.3zM563.8 668.1h4.2v4.2h-4.2zM485.5 672.2h4.2v4.2h-4.2zM493.7 676.3h4.2v4.2h-4.2zM535.0 676.3h4.2v4.2h-4.2zM543.2 676.3h4.2v4.2h-4.2z"/>
<rect x="466.19" y="558.39" width="96.42" height="96.42" fill="none" stroke="#ff0000" stroke-width="1.45" />
<text xml:space="preserve" class="s" x="514.40" y="546.40" font-size="10.70" fill="#ff0000" text-anchor="middle" stroke="#ff0000" stroke-width="0.35">N</text>
<text xml:space="preserve" class="s" x="450.92" y="610.40" font-size="10.70" fill="#ff0000" text-anchor="middle" stroke="#ff0000" stroke-width="0.35">E</text>
<line x1="476.96" y1="606.60" x2="506.36" y2="606.60" stroke="#ff0000" stroke-width="1.2" />
<line x1="522.43" y1="606.60" x2="551.36" y2="606.60" stroke="#ff0000" stroke-width="1.2" />
<line x1="514.40" y1="569.64" x2="514.40" y2="599.37" stroke="#ff0000" stroke-width="1.2" />
<line x1="514.40" y1="613.83" x2="514.40" y2="644.04" stroke="#ff0000" stroke-width="1.2" />
<ellipse cx="506.53" cy="610.78" rx="30.05" ry="30.05" fill="none" stroke="#ffd700" stroke-width="1.3"/>
<rect x="440.20" y="532.80" width="148.40" height="147.70" fill="none" stroke="#222" stroke-width="1.2" />
<line x1="450.12" y1="680.50" x2="450.12" y2="684.50" stroke="#222" stroke-width="0.9" />
<text xml:space="preserve" class="s" x="450.12" y="696.10" font-size="9.73" fill="#111" text-anchor="middle" >−4</text>
<line x1="436.20" y1="670.88" x2="440.20" y2="670.88" stroke="#222" stroke-width="0.9" />
<text xml:space="preserve" class="s" x="433.20" y="674.48" font-size="9.73" fill="#111" text-anchor="end" >−4</text>
<line x1="482.26" y1="680.50" x2="482.26" y2="684.50" stroke="#222" stroke-width="0.9" />
<text xml:space="preserve" class="s" x="482.26" y="696.10" font-size="9.73" fill="#111" text-anchor="middle" >−2</text>
<line x1="436.20" y1="638.74" x2="440.20" y2="638.74" stroke="#222" stroke-width="0.9" />
<text xml:space="preserve" class="s" x="433.20" y="642.34" font-size="9.73" fill="#111" text-anchor="end" >−2</text>
<line x1="514.40" y1="680.50" x2="514.40" y2="684.50" stroke="#222" stroke-width="0.9" />
<text xml:space="preserve" class="s" x="514.40" y="696.10" font-size="9.73" fill="#111" text-anchor="middle" >0</text>
<line x1="436.20" y1="606.60" x2="440.20" y2="606.60" stroke="#222" stroke-width="0.9" />
<text xml:space="preserve" class="s" x="433.20" y="610.20" font-size="9.73" fill="#111" text-anchor="end" >0</text>
<line x1="546.54" y1="680.50" x2="546.54" y2="684.50" stroke="#222" stroke-width="0.9" />
<text xml:space="preserve" class="s" x="546.54" y="696.10" font-size="9.73" fill="#111" text-anchor="middle" >2</text>
<line x1="436.20" y1="574.46" x2="440.20" y2="574.46" stroke="#222" stroke-width="0.9" />
<text xml:space="preserve" class="s" x="433.20" y="578.06" font-size="9.73" fill="#111" text-anchor="end" >2</text>
<line x1="578.68" y1="680.50" x2="578.68" y2="684.50" stroke="#222" stroke-width="0.9" />
<text xml:space="preserve" class="s" x="578.68" y="696.10" font-size="9.73" fill="#111" text-anchor="middle" >4</text>
<line x1="436.20" y1="542.32" x2="440.20" y2="542.32" stroke="#222" stroke-width="0.9" />
<text xml:space="preserve" class="s" x="433.20" y="545.92" font-size="9.73" fill="#111" text-anchor="end" >4</text>
<text xml:space="preserve" class="s" x="514.40" y="525.40" font-size="12.97" fill="#111" text-anchor="middle" >KPNO(24.7) g</text>
<text xml:space="preserve" class="s" x="514.40" y="706.30" font-size="10.80" fill="#111" text-anchor="middle" >m:19.3  re:1.9"  s:0.6"</text>
<text xml:space="preserve" class="s" x="514.40" y="718.50" font-size="10.80" fill="#111" text-anchor="middle" >EWr: 0, PLAE: 0.045</text>
</svg>
</body></html>
